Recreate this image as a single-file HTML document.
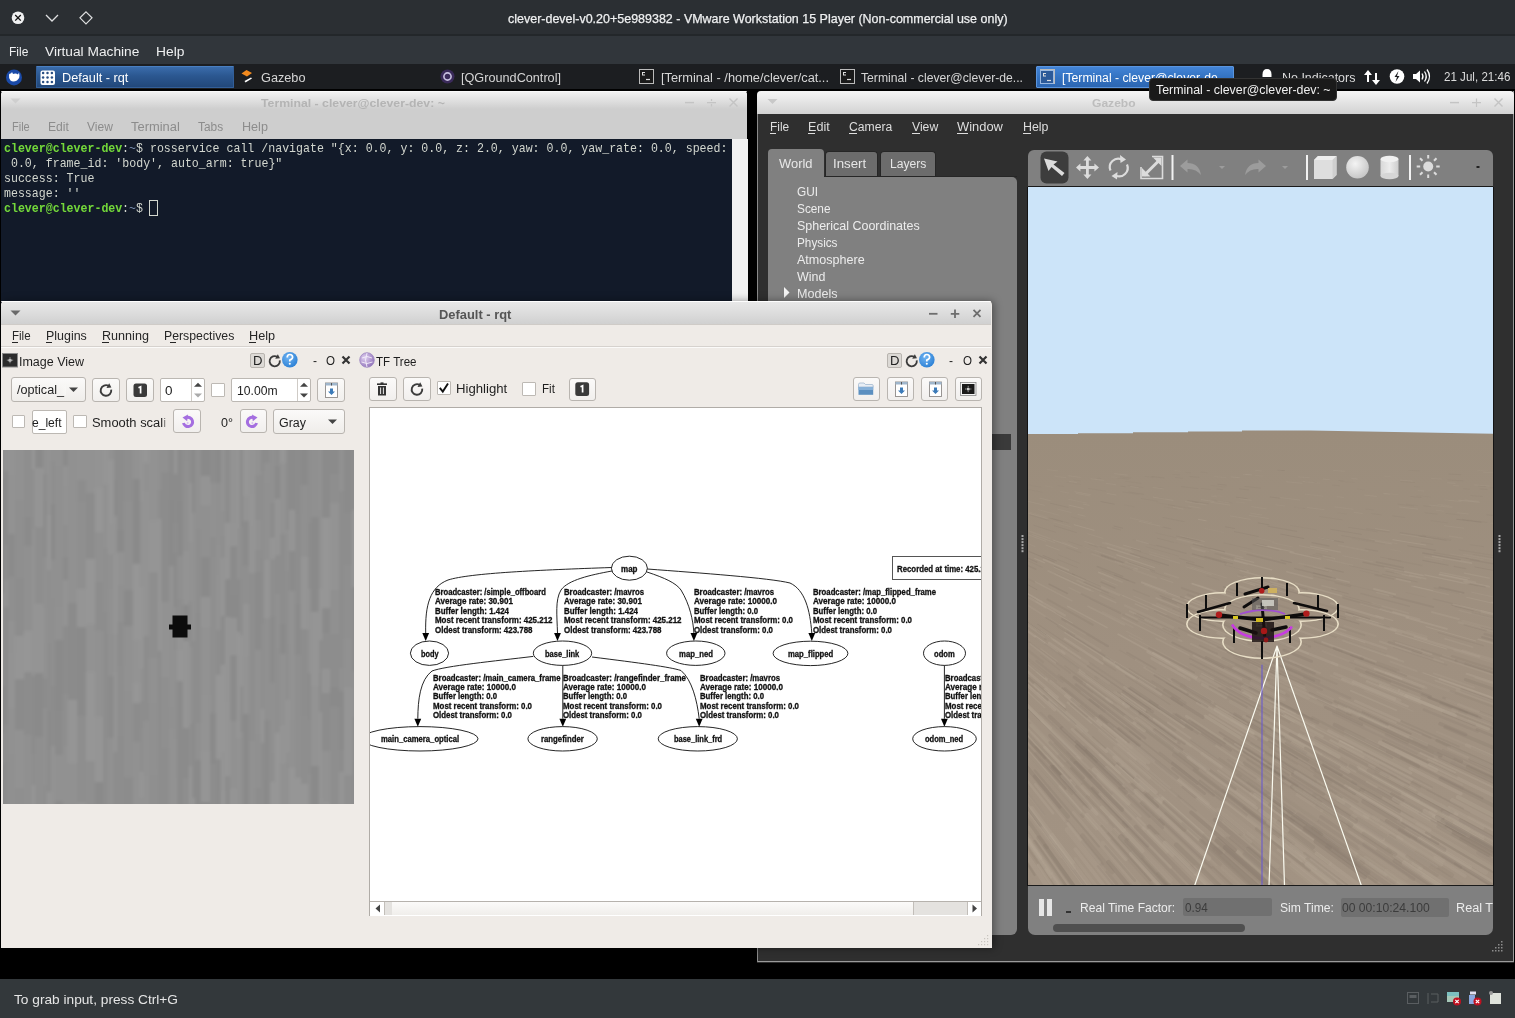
<!DOCTYPE html>
<html><head><meta charset="utf-8"><style>
*{margin:0;padding:0;box-sizing:border-box}
html,body{width:1515px;height:1018px;overflow:hidden;background:#000;font-family:"Liberation Sans",sans-serif;position:relative}
.a{position:absolute}
.t{position:absolute;white-space:pre;line-height:1}
svg{position:absolute;overflow:visible}
</style></head><body>
<div class="a" style="left:0px;top:0px;width:1515px;height:34px;background:#2b2f33"></div>
<div class="a" style="left:0px;top:34px;width:1515px;height:2px;background:#23272a"></div>
<div class="a" style="left:0px;top:36px;width:1515px;height:28px;background:#31363b"></div>
<svg style="left:0;top:0" width="110" height="36">
<circle cx="18" cy="17.8" r="6.3" fill="#eff0f1"/>
<path d="M15.2 15 L20.8 20.6 M20.8 15 L15.2 20.6" stroke="#111" stroke-width="1.3"/>
<path d="M46 15 L52 21 L58 15" stroke="#dfe0e1" stroke-width="1.3" fill="none"/>
<path d="M86 11.8 L92 17.8 L86 23.8 L80 17.8 Z" stroke="#dfe0e1" stroke-width="1.2" fill="none"/>
</svg><div class="t" style="left:507.50px;top:13.00px;font-size:12.7px;color:#eff0f1;font-family:'Liberation Sans',sans-serif;transform:scaleX(0.9837);transform-origin:0 0;-webkit-text-stroke:0.25px #eff0f1;">clever-devel-v0.20+5e989382 - VMware Workstation 15 Player (Non-commercial use only)</div>
<div class="t" style="left:8.60px;top:46.00px;font-size:12.5px;color:#eff0f1;font-family:'Liberation Sans',sans-serif;transform:scaleX(0.9630);transform-origin:0 0;">File</div>
<div class="t" style="left:44.90px;top:46.00px;font-size:12.5px;color:#eff0f1;font-family:'Liberation Sans',sans-serif;transform:scaleX(1.0985);transform-origin:0 0;">Virtual Machine</div>
<div class="t" style="left:156.40px;top:46.00px;font-size:12.5px;color:#eff0f1;font-family:'Liberation Sans',sans-serif;transform:scaleX(1.1046);transform-origin:0 0;">Help</div>
<div class="a" style="left:0px;top:64px;width:1515px;height:25px;background:#1c1e21"></div>
<svg style="left:0;top:64px" width="36" height="25">
<circle cx="14" cy="13.4" r="8" fill="#1a4aa8"/>
<path d="M9 11 Q9 9 11 9.5 L12 8 L13 10 Q16 9 18 10.5 L19 8.5 L19.5 11.5 Q20 14 17 16.5 Q13 18.5 10.5 16.5 Q8.5 14 9 11Z" fill="#fff"/>
</svg><div class="a" style="left:36px;top:66px;width:198px;height:22px;background:linear-gradient(#3a6cab,#2b5790 45%,#22487a);border:1px solid #335f98;border-top-color:#4a7fc0;border-radius:1px"></div>
<div class="a" style="left:1036px;top:66px;width:198px;height:22px;background:linear-gradient(#4384d6,#3473c2 50%,#2c66b2);border:1px solid #5a95de;border-radius:1px"></div>
<svg style="left:40px;top:70px" width="16" height="16"><rect x="0.5" y="0.5" width="14.5" height="14.5" rx="2" fill="#fff"/><circle cx="3.10" cy="3.10" r="1.25" fill="#2a4f84"/><circle cx="3.10" cy="7.50" r="1.25" fill="#2a4f84"/><circle cx="3.10" cy="11.90" r="1.25" fill="#2a4f84"/><circle cx="7.50" cy="3.10" r="1.25" fill="#2a4f84"/><circle cx="7.50" cy="7.50" r="1.25" fill="#2a4f84"/><circle cx="7.50" cy="11.90" r="1.25" fill="#2a4f84"/><circle cx="11.90" cy="3.10" r="1.25" fill="#2a4f84"/><circle cx="11.90" cy="7.50" r="1.25" fill="#2a4f84"/><circle cx="11.90" cy="11.90" r="1.25" fill="#2a4f84"/></svg><div class="t" style="left:62.30px;top:72.00px;font-size:12.5px;color:#ffffff;font-family:'Liberation Sans',sans-serif;transform:scaleX(1.0167);transform-origin:0 0;">Default - rqt</div>
<svg style="left:240px;top:68px" width="20" height="20">
<path d="M1.5 5.5 L6.5 2 L12 5 L7 8.5 Z" fill="#f28a1e"/>
<path d="M4.5 13 L11 9.5 L12 10.5 L5.5 14.5 Z" fill="#fff"/>
</svg><div class="t" style="left:261.00px;top:72.00px;font-size:12.5px;color:#d6d6d6;font-family:'Liberation Sans',sans-serif;transform:scaleX(1.0163);transform-origin:0 0;">Gazebo</div>
<svg style="left:438px;top:68px" width="20" height="20">
<circle cx="9.5" cy="8.5" r="7" fill="#3a2a5a"/>
<circle cx="9.5" cy="8.5" r="3.6" fill="none" stroke="#c8c0e0" stroke-width="1.6"/>
</svg><div class="t" style="left:461.00px;top:72.00px;font-size:12.5px;color:#d6d6d6;font-family:'Liberation Sans',sans-serif;transform:scaleX(1.0135);transform-origin:0 0;">[QGroundControl]</div>
<svg style="left:639px;top:69px" width="16" height="16">
<rect x="0.5" y="0.5" width="14" height="14" fill="#1a1a1a" stroke="#bbb" stroke-width="1"/>
<path d="M3 3.5 h3 M3 6 h3 M3.5 3.5 v2.5" stroke="#ddd" stroke-width="1"/><path d="M7 10.5 h4" stroke="#ddd" stroke-width="1.2"/>
</svg><svg style="left:840px;top:69px" width="16" height="16">
<rect x="0.5" y="0.5" width="14" height="14" fill="#1a1a1a" stroke="#bbb" stroke-width="1"/>
<path d="M3 3.5 h3 M3 6 h3 M3.5 3.5 v2.5" stroke="#ddd" stroke-width="1"/><path d="M7 10.5 h4" stroke="#ddd" stroke-width="1.2"/>
</svg><svg style="left:1040px;top:69px" width="16" height="16">
<rect x="0.5" y="0.5" width="14" height="14" fill="#1a1a1a" stroke="#bbb" stroke-width="1"/>
<path d="M3 3.5 h3 M3 6 h3 M3.5 3.5 v2.5" stroke="#ddd" stroke-width="1"/><path d="M7 10.5 h4" stroke="#ddd" stroke-width="1.2"/>
</svg><div class="a" style="left:1040px;top:70px;width:14px;height:14px;background:#2c5a99;border:1px solid #9bb9e0"></div>
<svg style="left:1040px;top:70px" width="16" height="16"><path d="M3 3.5 h3 M3 6 h3 M3.5 3.5 v2.5" stroke="#ddd" stroke-width="1"/><path d="M7 10.5 h4" stroke="#ddd" stroke-width="1.2"/></svg><div class="t" style="left:661.00px;top:72.00px;font-size:12.5px;color:#d6d6d6;font-family:'Liberation Sans',sans-serif;transform:scaleX(1.0247);transform-origin:0 0;">[Terminal - /home/clever/cat...</div>
<div class="t" style="left:861.00px;top:72.00px;font-size:12.5px;color:#d6d6d6;font-family:'Liberation Sans',sans-serif;transform:scaleX(0.9746);transform-origin:0 0;">Terminal - clever@clever-de...</div>
<div class="t" style="left:1061.70px;top:72.00px;font-size:12.5px;color:#ffffff;font-family:'Liberation Sans',sans-serif;transform:scaleX(0.9782);transform-origin:0 0;">[Terminal - clever@clever-de...</div>
<svg style="left:1255px;top:64px" width="260" height="25">
<path d="M7.5 10.5 Q7.5 5 12 5 Q16.5 5 16.5 10.5 L16.5 13 L7.5 13Z" fill="#fff"/>
<path d="M113 6 L109 11 H112 V18 H114 V11 H117Z" fill="#fff"/>
<path d="M121 21 L125 16 H122 V9 H120 V16 H117Z" fill="#fff"/>
<circle cx="142" cy="12.5" r="7.3" fill="#fff"/>
<path d="M143.5 7 L139.5 13 H142 L140.5 18 L144.5 12 H142Z" fill="#1c1e21"/>
<path d="M158 10 h3 l4 -3.5 v12 l-4 -3.5 h-3z" fill="#fff"/>
<path d="M167 9.5 q2 3 0 6 M169.5 7.5 q3.5 5 0 10 M172 5.5 q5 7 0 14" stroke="#fff" stroke-width="1.3" fill="none"/>
</svg><div class="t" style="left:1282.40px;top:72.00px;font-size:12.5px;color:#dcdcdc;font-family:'Liberation Sans',sans-serif;transform:scaleX(0.9966);transform-origin:0 0;">No Indicators</div>
<div class="t" style="left:1444.20px;top:71.00px;font-size:12.5px;color:#dcdcdc;font-family:'Liberation Sans',sans-serif;transform:scaleX(0.9275);transform-origin:0 0;">21 Jul, 21:46</div>
<div class="a" style="left:1px;top:91px;width:746px;height:215px;background:#cecece;border-radius:4px 4px 0 0;overflow:hidden"></div>
<div class="a" style="left:1px;top:91px;width:746px;height:18px;background:linear-gradient(#f4f4f4,#dddddd 60%,#cecece);border-radius:4px 4px 0 0"></div>
<div class="a" style="left:1px;top:91px;width:746px;height:1px;background:#fafafa;border-radius:4px 4px 0 0"></div>
<div class="t" style="left:261.10px;top:98.00px;font-size:11.5px;color:#b4b4b4;font-family:'Liberation Sans',sans-serif;font-weight:bold;transform:scaleX(1.0662);transform-origin:0 0;">Terminal - clever@clever-dev: ~</div>
<svg style="left:9px;top:97px" width="14" height="10"><path d="M1.5 1.5 L6.5 6.5 L11.5 1.5Z" fill="#cfcfcf"/></svg><svg style="left:680px;top:94px" width="66" height="18">
<path d="M5 8.6 h9" stroke="#c4c4c4" stroke-width="1.4"/>
<path d="M27 8.6 h9 M31.5 5 v2 M31.5 10 v2.5" stroke="#c4c4c4" stroke-width="1.2"/>
<path d="M49.5 4.5 L57.5 12.5 M57.5 4.5 L49.5 12.5" stroke="#c4c4c4" stroke-width="1.4"/>
</svg><div class="t" style="left:11.50px;top:121.00px;font-size:12.5px;color:#8c8c8c;font-family:'Liberation Sans',sans-serif;transform:scaleX(0.8787);transform-origin:0 0;">File</div>
<div class="t" style="left:48.40px;top:121.00px;font-size:12.5px;color:#8c8c8c;font-family:'Liberation Sans',sans-serif;transform:scaleX(0.9703);transform-origin:0 0;">Edit</div>
<div class="t" style="left:87.20px;top:121.00px;font-size:12.5px;color:#8c8c8c;font-family:'Liberation Sans',sans-serif;transform:scaleX(0.9640);transform-origin:0 0;">View</div>
<div class="t" style="left:130.90px;top:121.00px;font-size:12.5px;color:#8c8c8c;font-family:'Liberation Sans',sans-serif;transform:scaleX(1.0330);transform-origin:0 0;">Terminal</div>
<div class="t" style="left:198.20px;top:121.00px;font-size:12.5px;color:#8c8c8c;font-family:'Liberation Sans',sans-serif;transform:scaleX(0.9505);transform-origin:0 0;">Tabs</div>
<div class="t" style="left:242.10px;top:121.00px;font-size:12.5px;color:#8c8c8c;font-family:'Liberation Sans',sans-serif;transform:scaleX(1.0074);transform-origin:0 0;">Help</div>
<div class="a" style="left:1px;top:139px;width:731px;height:167px;background:#121a29"></div>
<div class="a" style="left:732px;top:139px;width:15.5px;height:167px;background:#f2f2f2"></div>
<div class="t" style="left:3.50px;top:143.00px;font-size:12.6px;color:#73d83a;font-family:'Liberation Mono',monospace;font-weight:bold;transform:scaleX(0.9206);transform-origin:0 0;">clever@clever-dev</div>
<div class="t" style="left:121.82px;top:143.00px;font-size:12.6px;color:#d3d7cf;font-family:'Liberation Mono',monospace;transform:scaleX(0.9206);transform-origin:0 0;">:</div>
<div class="t" style="left:128.78px;top:143.00px;font-size:12.6px;color:#7e94b4;font-family:'Liberation Mono',monospace;transform:scaleX(0.9206);transform-origin:0 0;">~</div>
<div class="t" style="left:135.74px;top:143.00px;font-size:12.6px;color:#d3d7cf;font-family:'Liberation Mono',monospace;transform:scaleX(0.9206);transform-origin:0 0;">$</div>
<div class="t" style="left:142.70px;top:143.00px;font-size:12.6px;color:#d3d7cf;font-family:'Liberation Mono',monospace;transform:scaleX(0.9206);transform-origin:0 0;"> rosservice call /navigate "{x: 0.0, y: 0.0, z: 2.0, yaw: 0.0, yaw_rate: 0.0, speed:</div>
<div class="t" style="left:3.50px;top:158.00px;font-size:12.6px;color:#d3d7cf;font-family:'Liberation Mono',monospace;transform:scaleX(0.9206);transform-origin:0 0;"> 0.0, frame_id: 'body', auto_arm: true}"</div>
<div class="t" style="left:3.50px;top:173.00px;font-size:12.6px;color:#d3d7cf;font-family:'Liberation Mono',monospace;transform:scaleX(0.9206);transform-origin:0 0;">success: True</div>
<div class="t" style="left:3.50px;top:188.00px;font-size:12.6px;color:#d3d7cf;font-family:'Liberation Mono',monospace;transform:scaleX(0.9206);transform-origin:0 0;">message: ''</div>
<div class="t" style="left:3.50px;top:203.00px;font-size:12.6px;color:#73d83a;font-family:'Liberation Mono',monospace;font-weight:bold;transform:scaleX(0.9206);transform-origin:0 0;">clever@clever-dev</div>
<div class="t" style="left:121.82px;top:203.00px;font-size:12.6px;color:#d3d7cf;font-family:'Liberation Mono',monospace;transform:scaleX(0.9206);transform-origin:0 0;">:</div>
<div class="t" style="left:128.78px;top:203.00px;font-size:12.6px;color:#7e94b4;font-family:'Liberation Mono',monospace;transform:scaleX(0.9206);transform-origin:0 0;">~</div>
<div class="t" style="left:135.74px;top:203.00px;font-size:12.6px;color:#d3d7cf;font-family:'Liberation Mono',monospace;transform:scaleX(0.9206);transform-origin:0 0;">$</div>
<div class="a" style="left:149px;top:199.5px;width:9px;height:16px;border:1px solid #d3d7cf"></div>
<div class="a" style="left:757px;top:91px;width:757px;height:872px;background:#2f2f2f;border-radius:4px 4px 0 0"></div>
<div class="a" style="left:1513px;top:91px;width:1px;height:871px;background:#9a9a9a"></div>
<div class="a" style="left:757px;top:961px;width:757px;height:1px;background:#9a9a9a"></div>
<div class="a" style="left:757px;top:114px;width:1px;height:848px;background:#8a8a8a"></div>
<div class="a" style="left:757px;top:91px;width:757px;height:23px;background:linear-gradient(#f6f6f6,#e2e2e2 55%,#d2d2d2);border-radius:4px 4px 0 0"></div>
<svg style="left:766px;top:97px" width="14" height="10"><path d="M1.5 2 L6.5 7 L11.5 2Z" fill="#c8c8c8"/></svg><div class="t" style="left:1091.50px;top:98.00px;font-size:11.5px;color:#bdbdbd;font-family:'Liberation Sans',sans-serif;font-weight:bold;transform:scaleX(1.0498);transform-origin:0 0;">Gazebo</div>
<svg style="left:1445px;top:94px" width="66" height="18">
<path d="M5 8.6 h9" stroke="#c4c4c4" stroke-width="1.4"/>
<path d="M27 8.6 h9 M31.5 4.5 v8.5" stroke="#c4c4c4" stroke-width="1.2"/>
<path d="M49.5 4.5 L57.5 12.5 M57.5 4.5 L49.5 12.5" stroke="#c4c4c4" stroke-width="1.4"/>
</svg><div class="t" style="left:770.20px;top:121.00px;font-size:12.5px;color:#dedede;font-family:'Liberation Sans',sans-serif;transform:scaleX(0.9531);transform-origin:0 0;">File</div>
<div class="a" style="left:770.2px;top:133px;width:6px;height:1px;background:#dedede"></div>
<div class="t" style="left:808.20px;top:121.00px;font-size:12.5px;color:#dedede;font-family:'Liberation Sans',sans-serif;transform:scaleX(1.0075);transform-origin:0 0;">Edit</div>
<div class="a" style="left:808.2px;top:133px;width:7px;height:1px;background:#dedede"></div>
<div class="t" style="left:849.10px;top:121.00px;font-size:12.5px;color:#dedede;font-family:'Liberation Sans',sans-serif;transform:scaleX(0.9738);transform-origin:0 0;">Camera</div>
<div class="a" style="left:849.1px;top:133px;width:8px;height:1px;background:#dedede"></div>
<div class="t" style="left:911.60px;top:121.00px;font-size:12.5px;color:#dedede;font-family:'Liberation Sans',sans-serif;transform:scaleX(0.9752);transform-origin:0 0;">View</div>
<div class="a" style="left:911.6px;top:133px;width:8px;height:1px;background:#dedede"></div>
<div class="t" style="left:957.40px;top:121.00px;font-size:12.5px;color:#dedede;font-family:'Liberation Sans',sans-serif;transform:scaleX(1.0324);transform-origin:0 0;">Window</div>
<div class="a" style="left:957.4px;top:133px;width:11px;height:1px;background:#dedede"></div>
<div class="t" style="left:1022.50px;top:121.00px;font-size:12.5px;color:#dedede;font-family:'Liberation Sans',sans-serif;transform:scaleX(0.9918);transform-origin:0 0;">Help</div>
<div class="a" style="left:1022.5px;top:133px;width:8px;height:1px;background:#dedede"></div>
<div class="a" style="left:768px;top:149px;width:56px;height:40px;background:#808080;border-radius:4px 4px 0 0"></div>
<div class="a" style="left:825px;top:151px;width:53px;height:26px;background:#6c6c6c;border-radius:4px 4px 0 0;border:1px solid #262626;border-bottom:none"></div>
<div class="a" style="left:880px;top:151px;width:56px;height:26px;background:#6c6c6c;border-radius:4px 4px 0 0;border:1px solid #262626;border-bottom:none"></div>
<div class="t" style="left:779.00px;top:158.00px;font-size:12.5px;color:#e8e8e8;font-family:'Liberation Sans',sans-serif;transform:scaleX(1.0334);transform-origin:0 0;">World</div>
<div class="t" style="left:833.20px;top:158.00px;font-size:12.5px;color:#e6e6e6;font-family:'Liberation Sans',sans-serif;transform:scaleX(1.0619);transform-origin:0 0;">Insert</div>
<div class="t" style="left:889.60px;top:158.00px;font-size:12.5px;color:#e6e6e6;font-family:'Liberation Sans',sans-serif;transform:scaleX(0.9701);transform-origin:0 0;">Layers</div>
<div class="a" style="left:768px;top:177px;width:249px;height:758px;background:#808080;border-radius:0 5px 6px 6px"></div>
<div class="a" style="left:824px;top:176px;width:193px;height:1px;background:#262626"></div>
<div class="t" style="left:797.30px;top:186.00px;font-size:12.5px;color:#ececec;font-family:'Liberation Sans',sans-serif;transform:scaleX(0.9450);transform-origin:0 0;">GUI</div>
<div class="t" style="left:797.30px;top:203.00px;font-size:12.5px;color:#ececec;font-family:'Liberation Sans',sans-serif;transform:scaleX(0.9451);transform-origin:0 0;">Scene</div>
<div class="t" style="left:797.30px;top:220.00px;font-size:12.5px;color:#ececec;font-family:'Liberation Sans',sans-serif;transform:scaleX(0.9976);transform-origin:0 0;">Spherical Coordinates</div>
<div class="t" style="left:797.30px;top:237.00px;font-size:12.5px;color:#ececec;font-family:'Liberation Sans',sans-serif;transform:scaleX(0.9404);transform-origin:0 0;">Physics</div>
<div class="t" style="left:797.30px;top:254.00px;font-size:12.5px;color:#ececec;font-family:'Liberation Sans',sans-serif;transform:scaleX(1.0044);transform-origin:0 0;">Atmosphere</div>
<div class="t" style="left:797.30px;top:271.00px;font-size:12.5px;color:#ececec;font-family:'Liberation Sans',sans-serif;transform:scaleX(0.9972);transform-origin:0 0;">Wind</div>
<div class="t" style="left:797.30px;top:288.00px;font-size:12.5px;color:#ececec;font-family:'Liberation Sans',sans-serif;transform:scaleX(1.0049);transform-origin:0 0;">Models</div>
<svg style="left:782px;top:286px" width="10" height="14"><path d="M2 1 L7.5 6.5 L2 12Z" fill="#f4f4f4"/></svg><div class="a" style="left:992px;top:434px;width:19px;height:16px;background:#3a3a3a"></div>
<svg style="left:1018px;top:530px" width="10" height="30"><rect x="3.5" y="5.0" width="2" height="2" fill="#a8a8a8"/><rect x="3.5" y="8.1" width="2" height="2" fill="#a8a8a8"/><rect x="3.5" y="11.1" width="2" height="2" fill="#a8a8a8"/><rect x="3.5" y="14.1" width="2" height="2" fill="#a8a8a8"/><rect x="3.5" y="17.2" width="2" height="2" fill="#a8a8a8"/><rect x="3.5" y="20.2" width="2" height="2" fill="#a8a8a8"/></svg><svg style="left:1495px;top:530px" width="10" height="30"><rect x="3.5" y="5.0" width="2" height="2" fill="#a8a8a8"/><rect x="3.5" y="8.1" width="2" height="2" fill="#a8a8a8"/><rect x="3.5" y="11.1" width="2" height="2" fill="#a8a8a8"/><rect x="3.5" y="14.1" width="2" height="2" fill="#a8a8a8"/><rect x="3.5" y="17.2" width="2" height="2" fill="#a8a8a8"/><rect x="3.5" y="20.2" width="2" height="2" fill="#a8a8a8"/></svg><div class="a" style="left:1028px;top:149.5px;width:465px;height:37px;background:#808080;border-radius:6px 6px 0 0"></div>
<div class="a" style="left:1028px;top:186px;width:465px;height:1px;background:#1a1a1a"></div>
<div class="a" style="left:1028px;top:187px;width:465px;height:247px;background:#cce4f9"></div>
<svg style="left:1028px;top:428px;overflow:hidden" width="465" height="458" viewBox="1028 428 465 458"><defs><linearGradient id="gg" x1="0" y1="0" x2="0" y2="1"><stop offset="0" stop-color="#9b8d7c"/><stop offset="0.5" stop-color="#9f9080"/><stop offset="1" stop-color="#a29383"/></linearGradient></defs><path d="M1028 434 L1078 434 L1078 433.3 L1133 433.3 L1133 432.2 L1188 432.2 L1188 431.5 L1242 431.5 L1242 430.5 L1310 430.5 L1493 433.8 L1493 886 L1028 886Z" fill="url(#gg)"/><path d="M1257.4 646.8 L1320.0 673.2" stroke="#b6a897" stroke-width="1.9" opacity="0.26" stroke-linecap="round"/><path d="M1253.0 544.7 L1278.5 550.4" stroke="#85776a" stroke-width="1.3" opacity="0.16" stroke-linecap="round"/><path d="M1399.6 507.0 L1417.7 509.1" stroke="#b6a897" stroke-width="0.6" opacity="0.35" stroke-linecap="round"/><path d="M1300.0 736.1 L1331.0 753.2" stroke="#b6a897" stroke-width="1.5" opacity="0.13" stroke-linecap="round"/><path d="M1131.5 548.5 L1140.8 551.3" stroke="#85776a" stroke-width="1.0" opacity="0.27" stroke-linecap="round"/><path d="M1304.4 677.9 L1350.2 698.2" stroke="#85776a" stroke-width="2.6" opacity="0.16" stroke-linecap="round"/><path d="M1443.7 855.9 L1552.2 922.1" stroke="#85776a" stroke-width="4.8" opacity="0.15" stroke-linecap="round"/><path d="M1035.4 581.8 L1072.0 600.9" stroke="#b6a897" stroke-width="1.3" opacity="0.21" stroke-linecap="round"/><path d="M1412.8 863.3 L1440.7 881.4" stroke="#b6a897" stroke-width="2.8" opacity="0.23" stroke-linecap="round"/><path d="M1195.8 867.2 L1225.7 896.3" stroke="#b6a897" stroke-width="4.5" opacity="0.18" stroke-linecap="round"/><path d="M1168.4 504.7 L1190.8 508.5" stroke="#85776a" stroke-width="0.8" opacity="0.15" stroke-linecap="round"/><path d="M1038.5 509.7 L1059.0 515.2" stroke="#b6a897" stroke-width="0.6" opacity="0.23" stroke-linecap="round"/><path d="M1365.1 548.9 L1377.5 551.2" stroke="#85776a" stroke-width="1.2" opacity="0.18" stroke-linecap="round"/><path d="M1130.8 553.5 L1168.2 565.3" stroke="#85776a" stroke-width="1.4" opacity="0.28" stroke-linecap="round"/><path d="M1192.2 553.8 L1226.3 563.2" stroke="#85776a" stroke-width="1.3" opacity="0.30" stroke-linecap="round"/><path d="M1128.2 554.5 L1159.8 564.6" stroke="#85776a" stroke-width="0.9" opacity="0.11" stroke-linecap="round"/><path d="M1294.7 507.2 L1304.7 508.5" stroke="#85776a" stroke-width="0.7" opacity="0.19" stroke-linecap="round"/><path d="M1216.7 841.8 L1287.7 903.9" stroke="#85776a" stroke-width="5.3" opacity="0.13" stroke-linecap="round"/><path d="M1388.5 836.4 L1436.6 866.7" stroke="#b6a897" stroke-width="2.6" opacity="0.35" stroke-linecap="round"/><path d="M1459.0 549.8 L1493.1 555.4" stroke="#85776a" stroke-width="1.2" opacity="0.12" stroke-linecap="round"/><path d="M1478.5 486.0 L1485.6 486.5" stroke="#85776a" stroke-width="0.6" opacity="0.26" stroke-linecap="round"/><path d="M1147.0 710.8 L1174.7 730.2" stroke="#85776a" stroke-width="3.1" opacity="0.15" stroke-linecap="round"/><path d="M1400.9 693.6 L1457.4 716.3" stroke="#b6a897" stroke-width="1.9" opacity="0.17" stroke-linecap="round"/><path d="M1145.2 476.5 L1153.2 477.4" stroke="#85776a" stroke-width="0.6" opacity="0.17" stroke-linecap="round"/><path d="M1065.8 695.8 L1100.5 724.8" stroke="#b6a897" stroke-width="3.4" opacity="0.28" stroke-linecap="round"/><path d="M1285.1 751.2 L1315.9 769.5" stroke="#85776a" stroke-width="1.6" opacity="0.28" stroke-linecap="round"/><path d="M1469.9 758.9 L1494.3 769.9" stroke="#85776a" stroke-width="3.3" opacity="0.25" stroke-linecap="round"/><path d="M1491.9 602.2 L1507.5 605.7" stroke="#b6a897" stroke-width="1.6" opacity="0.34" stroke-linecap="round"/><path d="M1317.5 756.6 L1398.0 802.5" stroke="#85776a" stroke-width="4.3" opacity="0.24" stroke-linecap="round"/><path d="M1406.8 829.4 L1469.5 867.3" stroke="#b6a897" stroke-width="4.7" opacity="0.26" stroke-linecap="round"/><path d="M1176.5 714.6 L1230.6 750.3" stroke="#85776a" stroke-width="2.9" opacity="0.23" stroke-linecap="round"/><path d="M1394.5 855.8 L1490.1 918.5" stroke="#b6a897" stroke-width="3.6" opacity="0.26" stroke-linecap="round"/><path d="M1412.3 651.7 L1432.5 658.4" stroke="#85776a" stroke-width="2.4" opacity="0.22" stroke-linecap="round"/><path d="M1105.8 656.5 L1155.2 687.5" stroke="#b6a897" stroke-width="2.1" opacity="0.34" stroke-linecap="round"/><path d="M1015.9 572.5 L1034.9 582.4" stroke="#85776a" stroke-width="1.5" opacity="0.13" stroke-linecap="round"/><path d="M1305.8 828.3 L1367.8 872.5" stroke="#85776a" stroke-width="5.1" opacity="0.23" stroke-linecap="round"/><path d="M1211.0 549.4 L1242.6 557.4" stroke="#b6a897" stroke-width="1.5" opacity="0.21" stroke-linecap="round"/><path d="M1159.2 706.4 L1184.6 723.4" stroke="#b6a897" stroke-width="2.5" opacity="0.32" stroke-linecap="round"/><path d="M1454.3 758.7 L1497.7 778.7" stroke="#85776a" stroke-width="2.0" opacity="0.16" stroke-linecap="round"/><path d="M1204.8 556.2 L1232.6 563.7" stroke="#85776a" stroke-width="1.1" opacity="0.27" stroke-linecap="round"/><path d="M1221.7 868.2 L1252.7 896.7" stroke="#b6a897" stroke-width="2.2" opacity="0.13" stroke-linecap="round"/><path d="M1272.5 754.4 L1315.3 780.8" stroke="#85776a" stroke-width="3.8" opacity="0.13" stroke-linecap="round"/><path d="M1007.4 641.2 L1056.3 680.8" stroke="#85776a" stroke-width="1.5" opacity="0.11" stroke-linecap="round"/><path d="M1205.2 716.1 L1263.5 752.4" stroke="#b6a897" stroke-width="3.1" opacity="0.35" stroke-linecap="round"/><path d="M1092.6 737.0 L1138.8 778.0" stroke="#85776a" stroke-width="2.0" opacity="0.19" stroke-linecap="round"/><path d="M1088.7 753.6 L1123.3 786.3" stroke="#b6a897" stroke-width="2.6" opacity="0.24" stroke-linecap="round"/><path d="M1360.2 717.4 L1405.8 738.7" stroke="#b6a897" stroke-width="3.3" opacity="0.14" stroke-linecap="round"/><path d="M1347.9 848.6 L1385.6 874.8" stroke="#b6a897" stroke-width="3.6" opacity="0.34" stroke-linecap="round"/><path d="M1266.6 618.7 L1319.5 637.8" stroke="#b6a897" stroke-width="2.2" opacity="0.23" stroke-linecap="round"/><path d="M1088.7 718.5 L1148.0 768.6" stroke="#b6a897" stroke-width="3.6" opacity="0.29" stroke-linecap="round"/><path d="M1432.5 556.1 L1471.5 563.1" stroke="#b6a897" stroke-width="1.6" opacity="0.31" stroke-linecap="round"/><path d="M1433.2 598.9 L1480.3 610.3" stroke="#85776a" stroke-width="1.3" opacity="0.19" stroke-linecap="round"/><path d="M1364.8 691.1 L1412.7 711.2" stroke="#b6a897" stroke-width="1.3" opacity="0.14" stroke-linecap="round"/><path d="M1082.9 784.7 L1123.1 827.1" stroke="#85776a" stroke-width="4.2" opacity="0.13" stroke-linecap="round"/><path d="M1334.6 673.5 L1400.0 700.4" stroke="#b6a897" stroke-width="2.7" opacity="0.24" stroke-linecap="round"/><path d="M1044.9 845.8 L1077.6 891.5" stroke="#85776a" stroke-width="4.0" opacity="0.25" stroke-linecap="round"/><path d="M1234.1 716.7 L1307.8 759.9" stroke="#85776a" stroke-width="2.9" opacity="0.18" stroke-linecap="round"/><path d="M1430.7 813.0 L1473.8 837.0" stroke="#b6a897" stroke-width="4.6" opacity="0.25" stroke-linecap="round"/><path d="M1093.8 693.5 L1139.2 727.9" stroke="#b6a897" stroke-width="2.5" opacity="0.13" stroke-linecap="round"/><path d="M1238.6 852.2 L1296.7 902.1" stroke="#b6a897" stroke-width="5.1" opacity="0.24" stroke-linecap="round"/><path d="M1028.8 735.5 L1074.5 785.0" stroke="#b6a897" stroke-width="2.7" opacity="0.34" stroke-linecap="round"/><path d="M1239.5 580.8 L1254.8 585.4" stroke="#b6a897" stroke-width="1.2" opacity="0.34" stroke-linecap="round"/><path d="M1159.7 663.1 L1184.9 677.2" stroke="#b6a897" stroke-width="2.3" opacity="0.15" stroke-linecap="round"/><path d="M1017.3 779.6 L1044.6 815.0" stroke="#b6a897" stroke-width="2.4" opacity="0.20" stroke-linecap="round"/><path d="M1308.6 616.3 L1326.4 622.2" stroke="#85776a" stroke-width="2.0" opacity="0.20" stroke-linecap="round"/><path d="M1101.4 570.0 L1128.4 580.5" stroke="#85776a" stroke-width="1.2" opacity="0.18" stroke-linecap="round"/><path d="M1083.7 682.6 L1109.6 702.0" stroke="#b6a897" stroke-width="2.6" opacity="0.25" stroke-linecap="round"/><path d="M1267.9 795.5 L1359.3 859.5" stroke="#b6a897" stroke-width="2.6" opacity="0.31" stroke-linecap="round"/><path d="M1149.2 827.0 L1194.1 871.3" stroke="#85776a" stroke-width="5.2" opacity="0.30" stroke-linecap="round"/><path d="M1067.0 821.6 L1101.6 863.9" stroke="#85776a" stroke-width="4.4" opacity="0.12" stroke-linecap="round"/><path d="M1182.5 786.9 L1262.2 852.1" stroke="#85776a" stroke-width="2.2" opacity="0.24" stroke-linecap="round"/><path d="M1111.1 476.8 L1121.8 478.1" stroke="#b6a897" stroke-width="0.6" opacity="0.15" stroke-linecap="round"/><path d="M1361.0 673.4 L1406.8 691.4" stroke="#85776a" stroke-width="2.6" opacity="0.11" stroke-linecap="round"/><path d="M1029.8 512.3 L1046.2 516.9" stroke="#b6a897" stroke-width="0.7" opacity="0.16" stroke-linecap="round"/><path d="M1102.6 542.8 L1133.1 552.2" stroke="#b6a897" stroke-width="1.5" opacity="0.14" stroke-linecap="round"/><path d="M1470.8 495.5 L1482.6 496.5" stroke="#85776a" stroke-width="0.7" opacity="0.19" stroke-linecap="round"/><path d="M1201.7 673.3 L1251.1 699.6" stroke="#b6a897" stroke-width="1.2" opacity="0.32" stroke-linecap="round"/><path d="M1223.9 542.9 L1251.9 549.4" stroke="#85776a" stroke-width="0.9" opacity="0.13" stroke-linecap="round"/><path d="M1000.2 660.5 L1054.6 710.0" stroke="#b6a897" stroke-width="2.9" opacity="0.33" stroke-linecap="round"/><path d="M1186.3 716.2 L1242.0 752.4" stroke="#b6a897" stroke-width="2.7" opacity="0.31" stroke-linecap="round"/><path d="M1439.2 574.7 L1475.6 582.2" stroke="#b6a897" stroke-width="1.6" opacity="0.22" stroke-linecap="round"/><path d="M1399.1 820.7 L1485.6 872.4" stroke="#b6a897" stroke-width="4.6" opacity="0.22" stroke-linecap="round"/><path d="M1035.9 753.4 L1071.8 793.6" stroke="#85776a" stroke-width="2.9" opacity="0.17" stroke-linecap="round"/><path d="M1301.8 728.8 L1337.2 747.8" stroke="#b6a897" stroke-width="3.8" opacity="0.20" stroke-linecap="round"/><path d="M1265.6 731.0 L1321.2 763.2" stroke="#b6a897" stroke-width="2.5" opacity="0.27" stroke-linecap="round"/><path d="M1339.7 740.6 L1431.6 788.5" stroke="#b6a897" stroke-width="1.6" opacity="0.30" stroke-linecap="round"/><path d="M1206.7 575.9 L1218.8 579.7" stroke="#85776a" stroke-width="0.9" opacity="0.12" stroke-linecap="round"/><path d="M1440.2 572.4 L1469.3 578.3" stroke="#b6a897" stroke-width="1.3" opacity="0.26" stroke-linecap="round"/><path d="M1277.8 849.7 L1374.7 926.2" stroke="#b6a897" stroke-width="2.4" opacity="0.30" stroke-linecap="round"/><path d="M1463.3 488.7 L1469.7 489.2" stroke="#85776a" stroke-width="0.6" opacity="0.20" stroke-linecap="round"/><path d="M1016.3 695.4 L1079.9 758.0" stroke="#b6a897" stroke-width="2.4" opacity="0.26" stroke-linecap="round"/><path d="M1137.0 614.1 L1177.3 633.0" stroke="#85776a" stroke-width="1.8" opacity="0.24" stroke-linecap="round"/><path d="M1017.3 588.9 L1036.1 599.8" stroke="#85776a" stroke-width="0.8" opacity="0.25" stroke-linecap="round"/><path d="M1426.1 626.7 L1475.6 640.9" stroke="#b6a897" stroke-width="1.0" opacity="0.35" stroke-linecap="round"/><path d="M1448.6 500.3 L1460.7 501.5" stroke="#b6a897" stroke-width="0.6" opacity="0.18" stroke-linecap="round"/><path d="M1439.6 679.0 L1500.2 700.6" stroke="#b6a897" stroke-width="2.2" opacity="0.32" stroke-linecap="round"/><path d="M1050.7 701.6 L1099.8 745.4" stroke="#85776a" stroke-width="2.5" opacity="0.11" stroke-linecap="round"/><path d="M1061.1 677.2 L1098.3 706.4" stroke="#85776a" stroke-width="2.7" opacity="0.15" stroke-linecap="round"/><path d="M1189.5 695.5 L1253.2 733.6" stroke="#b6a897" stroke-width="2.6" opacity="0.35" stroke-linecap="round"/><path d="M1121.2 766.5 L1147.7 790.3" stroke="#b6a897" stroke-width="4.2" opacity="0.27" stroke-linecap="round"/><path d="M1129.8 611.2 L1170.8 630.5" stroke="#b6a897" stroke-width="1.8" opacity="0.27" stroke-linecap="round"/><path d="M1094.0 769.6 L1128.3 803.2" stroke="#b6a897" stroke-width="4.6" opacity="0.33" stroke-linecap="round"/><path d="M1045.5 485.9 L1052.9 487.3" stroke="#b6a897" stroke-width="0.6" opacity="0.14" stroke-linecap="round"/><path d="M1045.2 689.1 L1064.4 705.9" stroke="#b6a897" stroke-width="2.7" opacity="0.27" stroke-linecap="round"/><path d="M1238.3 622.3 L1261.1 631.2" stroke="#b6a897" stroke-width="1.5" opacity="0.32" stroke-linecap="round"/><path d="M1068.4 499.3 L1086.6 503.1" stroke="#b6a897" stroke-width="0.7" opacity="0.17" stroke-linecap="round"/><path d="M1118.2 634.2 L1169.5 662.2" stroke="#b6a897" stroke-width="1.7" opacity="0.36" stroke-linecap="round"/><path d="M1262.2 599.8 L1304.5 613.5" stroke="#85776a" stroke-width="2.2" opacity="0.17" stroke-linecap="round"/><path d="M1436.4 510.3 L1443.7 511.2" stroke="#b6a897" stroke-width="0.6" opacity="0.24" stroke-linecap="round"/><path d="M1129.9 731.4 L1197.1 784.2" stroke="#85776a" stroke-width="1.7" opacity="0.23" stroke-linecap="round"/><path d="M1157.0 502.8 L1174.6 505.8" stroke="#85776a" stroke-width="0.7" opacity="0.13" stroke-linecap="round"/><path d="M1353.8 615.8 L1383.2 624.7" stroke="#b6a897" stroke-width="1.1" opacity="0.26" stroke-linecap="round"/><path d="M1417.1 824.1 L1525.2 887.5" stroke="#b6a897" stroke-width="3.5" opacity="0.19" stroke-linecap="round"/><path d="M1187.7 594.5 L1235.9 612.3" stroke="#85776a" stroke-width="2.1" opacity="0.17" stroke-linecap="round"/><path d="M1179.4 617.1 L1209.4 630.0" stroke="#85776a" stroke-width="1.5" opacity="0.21" stroke-linecap="round"/><path d="M1237.2 775.1 L1321.7 834.4" stroke="#85776a" stroke-width="3.5" opacity="0.25" stroke-linecap="round"/><path d="M1143.5 828.3 L1166.7 851.6" stroke="#b6a897" stroke-width="3.7" opacity="0.26" stroke-linecap="round"/><path d="M1285.0 839.7 L1380.2 912.1" stroke="#b6a897" stroke-width="2.3" opacity="0.31" stroke-linecap="round"/><path d="M1050.3 503.2 L1068.1 507.4" stroke="#85776a" stroke-width="0.9" opacity="0.23" stroke-linecap="round"/><path d="M1366.8 528.7 L1389.2 532.2" stroke="#85776a" stroke-width="0.7" opacity="0.25" stroke-linecap="round"/><path d="M1366.8 680.9 L1407.4 697.2" stroke="#b6a897" stroke-width="1.9" opacity="0.28" stroke-linecap="round"/><path d="M1250.2 664.5 L1305.6 690.2" stroke="#b6a897" stroke-width="2.6" opacity="0.22" stroke-linecap="round"/><path d="M1294.7 787.5 L1385.4 846.5" stroke="#b6a897" stroke-width="4.4" opacity="0.33" stroke-linecap="round"/><path d="M1292.0 845.4 L1362.7 899.2" stroke="#b6a897" stroke-width="4.7" opacity="0.22" stroke-linecap="round"/><path d="M1067.1 632.1 L1113.2 661.1" stroke="#85776a" stroke-width="2.8" opacity="0.13" stroke-linecap="round"/><path d="M1215.3 553.6 L1232.7 558.1" stroke="#85776a" stroke-width="1.6" opacity="0.16" stroke-linecap="round"/><path d="M1319.9 516.6 L1342.1 519.8" stroke="#85776a" stroke-width="0.6" opacity="0.19" stroke-linecap="round"/><path d="M1445.4 710.9 L1467.5 719.7" stroke="#85776a" stroke-width="1.6" opacity="0.14" stroke-linecap="round"/><path d="M1349.7 565.7 L1378.8 572.1" stroke="#85776a" stroke-width="0.9" opacity="0.16" stroke-linecap="round"/><path d="M1375.5 541.0 L1391.7 543.9" stroke="#b6a897" stroke-width="1.0" opacity="0.24" stroke-linecap="round"/><path d="M1424.7 574.9 L1467.2 583.9" stroke="#b6a897" stroke-width="1.1" opacity="0.35" stroke-linecap="round"/><path d="M1117.2 667.1 L1134.9 678.3" stroke="#b6a897" stroke-width="3.0" opacity="0.21" stroke-linecap="round"/><path d="M1251.2 683.4 L1284.0 699.8" stroke="#b6a897" stroke-width="3.4" opacity="0.18" stroke-linecap="round"/><path d="M1243.4 474.3 L1250.3 474.9" stroke="#b6a897" stroke-width="0.6" opacity="0.27" stroke-linecap="round"/><path d="M1087.7 533.8 L1102.9 538.3" stroke="#b6a897" stroke-width="0.7" opacity="0.24" stroke-linecap="round"/><path d="M1477.0 729.5 L1516.4 745.6" stroke="#85776a" stroke-width="2.8" opacity="0.25" stroke-linecap="round"/><path d="M1409.0 470.3 L1419.5 470.9" stroke="#85776a" stroke-width="0.6" opacity="0.15" stroke-linecap="round"/><path d="M1044.5 747.3 L1088.8 794.6" stroke="#b6a897" stroke-width="2.9" opacity="0.26" stroke-linecap="round"/><path d="M1127.5 793.6 L1204.0 866.6" stroke="#b6a897" stroke-width="3.2" opacity="0.14" stroke-linecap="round"/><path d="M1092.5 788.4 L1147.6 845.7" stroke="#85776a" stroke-width="3.5" opacity="0.27" stroke-linecap="round"/><path d="M1161.8 597.9 L1176.5 603.7" stroke="#85776a" stroke-width="1.2" opacity="0.24" stroke-linecap="round"/><path d="M1340.7 618.2 L1358.9 623.9" stroke="#85776a" stroke-width="1.5" opacity="0.29" stroke-linecap="round"/><path d="M1321.3 810.2 L1346.5 826.8" stroke="#b6a897" stroke-width="3.0" opacity="0.18" stroke-linecap="round"/><path d="M1230.5 701.7 L1249.2 712.1" stroke="#b6a897" stroke-width="3.6" opacity="0.17" stroke-linecap="round"/><path d="M1139.4 714.3 L1179.3 743.2" stroke="#85776a" stroke-width="2.7" opacity="0.17" stroke-linecap="round"/><path d="M1326.9 630.2 L1353.1 639.2" stroke="#b6a897" stroke-width="1.3" opacity="0.20" stroke-linecap="round"/><path d="M1247.8 832.9 L1332.5 901.0" stroke="#b6a897" stroke-width="3.2" opacity="0.14" stroke-linecap="round"/><path d="M1054.3 525.8 L1076.3 532.5" stroke="#85776a" stroke-width="1.0" opacity="0.18" stroke-linecap="round"/><path d="M1289.0 810.7 L1320.0 832.4" stroke="#85776a" stroke-width="2.6" opacity="0.12" stroke-linecap="round"/><path d="M1029.3 623.4 L1080.5 658.3" stroke="#b6a897" stroke-width="1.7" opacity="0.28" stroke-linecap="round"/><path d="M1387.5 777.7 L1440.8 806.5" stroke="#85776a" stroke-width="2.7" opacity="0.10" stroke-linecap="round"/><path d="M1325.5 628.0 L1386.4 648.6" stroke="#b6a897" stroke-width="2.3" opacity="0.27" stroke-linecap="round"/><path d="M1175.4 477.4 L1182.4 478.2" stroke="#85776a" stroke-width="0.6" opacity="0.18" stroke-linecap="round"/><path d="M1366.3 671.5 L1430.7 696.4" stroke="#85776a" stroke-width="2.5" opacity="0.25" stroke-linecap="round"/><path d="M1256.8 828.7 L1309.5 869.9" stroke="#85776a" stroke-width="3.7" opacity="0.24" stroke-linecap="round"/><path d="M1225.4 847.6 L1310.0 921.3" stroke="#85776a" stroke-width="5.3" opacity="0.29" stroke-linecap="round"/><path d="M1103.9 724.3 L1126.1 742.5" stroke="#b6a897" stroke-width="2.0" opacity="0.29" stroke-linecap="round"/><path d="M1452.1 604.9 L1479.8 611.7" stroke="#85776a" stroke-width="1.5" opacity="0.29" stroke-linecap="round"/><path d="M1444.3 525.7 L1463.6 528.2" stroke="#b6a897" stroke-width="0.9" opacity="0.18" stroke-linecap="round"/><path d="M1446.3 823.9 L1546.1 879.9" stroke="#85776a" stroke-width="4.1" opacity="0.26" stroke-linecap="round"/><path d="M1440.2 588.9 L1460.9 593.5" stroke="#b6a897" stroke-width="1.5" opacity="0.16" stroke-linecap="round"/><path d="M1048.2 692.8 L1065.0 707.4" stroke="#b6a897" stroke-width="1.7" opacity="0.35" stroke-linecap="round"/><path d="M1137.9 724.1 L1197.5 768.9" stroke="#85776a" stroke-width="3.4" opacity="0.22" stroke-linecap="round"/><path d="M1014.0 789.0 L1041.7 826.2" stroke="#85776a" stroke-width="3.2" opacity="0.18" stroke-linecap="round"/><path d="M1081.5 692.1 L1125.3 726.3" stroke="#b6a897" stroke-width="1.9" opacity="0.20" stroke-linecap="round"/><path d="M1013.2 713.0 L1063.1 766.1" stroke="#b6a897" stroke-width="1.8" opacity="0.26" stroke-linecap="round"/><path d="M1193.8 655.5 L1241.2 679.3" stroke="#b6a897" stroke-width="2.5" opacity="0.30" stroke-linecap="round"/><path d="M1465.5 663.7 L1529.3 684.3" stroke="#85776a" stroke-width="2.9" opacity="0.19" stroke-linecap="round"/><path d="M1428.6 697.6 L1480.5 717.8" stroke="#85776a" stroke-width="2.5" opacity="0.28" stroke-linecap="round"/><path d="M1027.6 593.9 L1064.9 615.5" stroke="#b6a897" stroke-width="2.1" opacity="0.26" stroke-linecap="round"/><path d="M1136.8 760.8 L1195.8 810.8" stroke="#85776a" stroke-width="1.9" opacity="0.19" stroke-linecap="round"/><path d="M1200.8 675.9 L1220.1 686.3" stroke="#b6a897" stroke-width="2.6" opacity="0.18" stroke-linecap="round"/><path d="M1199.5 594.9 L1220.2 602.4" stroke="#b6a897" stroke-width="0.9" opacity="0.35" stroke-linecap="round"/><path d="M1410.4 737.8 L1461.4 761.4" stroke="#85776a" stroke-width="3.6" opacity="0.25" stroke-linecap="round"/><path d="M1440.9 703.1 L1466.4 713.0" stroke="#85776a" stroke-width="3.1" opacity="0.21" stroke-linecap="round"/><path d="M1004.8 844.5 L1035.7 894.4" stroke="#85776a" stroke-width="3.1" opacity="0.11" stroke-linecap="round"/><path d="M1381.4 827.2 L1441.5 864.7" stroke="#b6a897" stroke-width="3.2" opacity="0.13" stroke-linecap="round"/><path d="M1447.5 482.8 L1455.0 483.3" stroke="#b6a897" stroke-width="0.6" opacity="0.35" stroke-linecap="round"/><path d="M1104.5 659.2 L1133.7 677.8" stroke="#b6a897" stroke-width="2.9" opacity="0.17" stroke-linecap="round"/><path d="M1162.3 797.5 L1217.6 846.4" stroke="#b6a897" stroke-width="2.4" opacity="0.36" stroke-linecap="round"/><path d="M1316.3 553.3 L1330.8 556.4" stroke="#85776a" stroke-width="1.5" opacity="0.12" stroke-linecap="round"/><path d="M1131.4 743.2 L1209.1 806.5" stroke="#b6a897" stroke-width="4.1" opacity="0.15" stroke-linecap="round"/><path d="M1442.7 749.8 L1497.6 774.8" stroke="#85776a" stroke-width="1.8" opacity="0.16" stroke-linecap="round"/><path d="M1099.6 754.9 L1129.0 782.0" stroke="#b6a897" stroke-width="2.2" opacity="0.31" stroke-linecap="round"/><path d="M1311.2 617.7 L1364.4 635.2" stroke="#85776a" stroke-width="1.9" opacity="0.16" stroke-linecap="round"/><path d="M1315.6 841.5 L1364.8 877.0" stroke="#85776a" stroke-width="4.3" opacity="0.30" stroke-linecap="round"/><path d="M1252.8 646.1 L1294.4 663.8" stroke="#b6a897" stroke-width="1.1" opacity="0.19" stroke-linecap="round"/><path d="M1398.8 573.9 L1412.3 576.8" stroke="#b6a897" stroke-width="1.0" opacity="0.18" stroke-linecap="round"/><path d="M1274.2 584.6 L1292.0 589.8" stroke="#b6a897" stroke-width="1.9" opacity="0.13" stroke-linecap="round"/><path d="M1362.0 657.2 L1398.6 670.6" stroke="#85776a" stroke-width="2.9" opacity="0.14" stroke-linecap="round"/><path d="M1309.7 694.2 L1349.5 712.8" stroke="#b6a897" stroke-width="2.8" opacity="0.24" stroke-linecap="round"/><path d="M1397.6 672.0 L1454.0 692.8" stroke="#b6a897" stroke-width="2.3" opacity="0.16" stroke-linecap="round"/><path d="M1071.2 768.2 L1127.3 826.7" stroke="#85776a" stroke-width="2.4" opacity="0.25" stroke-linecap="round"/><path d="M1378.5 788.4 L1420.9 812.3" stroke="#85776a" stroke-width="3.2" opacity="0.22" stroke-linecap="round"/><path d="M1016.4 661.9 L1057.5 697.2" stroke="#b6a897" stroke-width="2.6" opacity="0.33" stroke-linecap="round"/><path d="M1088.6 544.2 L1097.1 547.0" stroke="#85776a" stroke-width="1.0" opacity="0.19" stroke-linecap="round"/><path d="M1396.6 578.9 L1410.0 581.9" stroke="#b6a897" stroke-width="1.8" opacity="0.25" stroke-linecap="round"/><path d="M1119.5 788.3 L1149.0 816.7" stroke="#85776a" stroke-width="2.7" opacity="0.16" stroke-linecap="round"/><path d="M1254.2 720.6 L1290.3 741.2" stroke="#85776a" stroke-width="2.9" opacity="0.26" stroke-linecap="round"/><path d="M1136.3 540.4 L1148.3 543.7" stroke="#b6a897" stroke-width="1.1" opacity="0.31" stroke-linecap="round"/><path d="M1212.0 495.0 L1222.2 496.4" stroke="#b6a897" stroke-width="0.6" opacity="0.13" stroke-linecap="round"/><path d="M1349.8 662.0 L1421.0 689.2" stroke="#85776a" stroke-width="1.4" opacity="0.25" stroke-linecap="round"/><path d="M1127.8 485.4 L1143.2 487.5" stroke="#85776a" stroke-width="0.6" opacity="0.16" stroke-linecap="round"/><path d="M1049.3 643.1 L1064.1 653.4" stroke="#b6a897" stroke-width="2.8" opacity="0.30" stroke-linecap="round"/><path d="M1128.3 562.0 L1154.7 571.1" stroke="#85776a" stroke-width="0.9" opacity="0.29" stroke-linecap="round"/><path d="M1154.6 610.9 L1209.0 634.8" stroke="#85776a" stroke-width="1.9" opacity="0.18" stroke-linecap="round"/><path d="M1031.1 725.2 L1065.1 760.6" stroke="#b6a897" stroke-width="3.3" opacity="0.26" stroke-linecap="round"/><path d="M1215.2 820.0 L1268.9 864.6" stroke="#85776a" stroke-width="4.8" opacity="0.26" stroke-linecap="round"/><path d="M1179.4 558.3 L1194.1 562.6" stroke="#85776a" stroke-width="1.2" opacity="0.14" stroke-linecap="round"/><path d="M1235.3 557.7 L1253.7 562.4" stroke="#b6a897" stroke-width="1.1" opacity="0.28" stroke-linecap="round"/><path d="M1095.4 807.7 L1141.0 857.0" stroke="#b6a897" stroke-width="2.1" opacity="0.21" stroke-linecap="round"/><path d="M1020.9 580.9 L1036.9 589.7" stroke="#85776a" stroke-width="1.0" opacity="0.28" stroke-linecap="round"/><path d="M1128.0 752.6 L1169.9 788.1" stroke="#b6a897" stroke-width="2.0" opacity="0.21" stroke-linecap="round"/><path d="M1321.5 765.0 L1413.0 818.1" stroke="#85776a" stroke-width="1.7" opacity="0.18" stroke-linecap="round"/><path d="M1438.0 504.4 L1449.1 505.5" stroke="#b6a897" stroke-width="0.8" opacity="0.13" stroke-linecap="round"/><path d="M1126.7 631.4 L1142.0 639.5" stroke="#b6a897" stroke-width="1.2" opacity="0.13" stroke-linecap="round"/><path d="M1207.1 595.3 L1240.0 607.0" stroke="#b6a897" stroke-width="1.0" opacity="0.18" stroke-linecap="round"/><path d="M1323.3 765.2 L1356.2 784.2" stroke="#85776a" stroke-width="2.2" opacity="0.24" stroke-linecap="round"/><path d="M1178.7 628.0 L1232.4 652.5" stroke="#85776a" stroke-width="1.4" opacity="0.17" stroke-linecap="round"/><path d="M1034.8 558.5 L1044.3 562.7" stroke="#b6a897" stroke-width="1.3" opacity="0.31" stroke-linecap="round"/><path d="M1127.0 840.8 L1199.1 918.7" stroke="#85776a" stroke-width="5.5" opacity="0.24" stroke-linecap="round"/><path d="M1437.0 731.9 L1520.0 768.0" stroke="#b6a897" stroke-width="2.1" opacity="0.14" stroke-linecap="round"/><path d="M1199.5 645.5 L1217.2 653.8" stroke="#85776a" stroke-width="1.7" opacity="0.20" stroke-linecap="round"/><path d="M1083.9 582.1 L1108.3 593.0" stroke="#85776a" stroke-width="1.3" opacity="0.23" stroke-linecap="round"/><path d="M1054.7 566.4 L1074.6 575.1" stroke="#85776a" stroke-width="1.1" opacity="0.22" stroke-linecap="round"/><path d="M1251.0 743.2 L1320.0 785.9" stroke="#85776a" stroke-width="1.6" opacity="0.17" stroke-linecap="round"/><path d="M1211.3 496.1 L1216.9 496.8" stroke="#b6a897" stroke-width="0.6" opacity="0.23" stroke-linecap="round"/><path d="M1135.2 603.9 L1148.1 609.6" stroke="#b6a897" stroke-width="1.3" opacity="0.26" stroke-linecap="round"/><path d="M1332.1 577.9 L1349.3 582.1" stroke="#b6a897" stroke-width="1.3" opacity="0.35" stroke-linecap="round"/><path d="M1269.4 612.9 L1323.7 631.7" stroke="#b6a897" stroke-width="2.1" opacity="0.27" stroke-linecap="round"/><path d="M1205.9 636.5 L1233.1 648.7" stroke="#b6a897" stroke-width="2.4" opacity="0.21" stroke-linecap="round"/><path d="M1025.4 833.3 L1051.2 870.7" stroke="#85776a" stroke-width="3.7" opacity="0.17" stroke-linecap="round"/><path d="M1075.3 858.6 L1108.5 902.0" stroke="#b6a897" stroke-width="2.9" opacity="0.18" stroke-linecap="round"/><path d="M1277.8 470.2 L1284.2 470.6" stroke="#85776a" stroke-width="0.6" opacity="0.23" stroke-linecap="round"/><path d="M1294.2 688.2 L1345.2 712.2" stroke="#b6a897" stroke-width="3.1" opacity="0.20" stroke-linecap="round"/><path d="M1432.1 612.1 L1458.8 619.1" stroke="#b6a897" stroke-width="2.0" opacity="0.28" stroke-linecap="round"/><path d="M1394.7 860.9 L1436.7 888.8" stroke="#85776a" stroke-width="4.4" opacity="0.21" stroke-linecap="round"/><path d="M1134.8 614.7 L1179.4 635.7" stroke="#85776a" stroke-width="1.8" opacity="0.15" stroke-linecap="round"/><path d="M1089.8 598.9 L1120.9 614.1" stroke="#85776a" stroke-width="1.0" opacity="0.11" stroke-linecap="round"/><path d="M1354.2 512.4 L1362.4 513.5" stroke="#b6a897" stroke-width="0.7" opacity="0.24" stroke-linecap="round"/><path d="M1420.9 536.0 L1450.7 540.6" stroke="#85776a" stroke-width="0.6" opacity="0.20" stroke-linecap="round"/><path d="M1172.4 775.4 L1244.2 833.6" stroke="#b6a897" stroke-width="2.5" opacity="0.20" stroke-linecap="round"/><path d="M1360.6 603.6 L1408.3 616.9" stroke="#b6a897" stroke-width="2.1" opacity="0.22" stroke-linecap="round"/><path d="M1279.2 743.5 L1358.8 790.3" stroke="#85776a" stroke-width="3.8" opacity="0.18" stroke-linecap="round"/><path d="M1116.2 738.9 L1145.6 763.4" stroke="#b6a897" stroke-width="1.5" opacity="0.35" stroke-linecap="round"/><path d="M1051.9 834.6 L1116.5 920.5" stroke="#b6a897" stroke-width="3.6" opacity="0.22" stroke-linecap="round"/><path d="M1478.4 852.7 L1510.9 871.4" stroke="#85776a" stroke-width="4.6" opacity="0.11" stroke-linecap="round"/><path d="M1346.9 584.1 L1395.0 596.2" stroke="#85776a" stroke-width="0.9" opacity="0.11" stroke-linecap="round"/><path d="M1232.4 687.6 L1271.3 708.1" stroke="#b6a897" stroke-width="1.9" opacity="0.32" stroke-linecap="round"/><path d="M1191.4 583.5 L1224.6 594.8" stroke="#b6a897" stroke-width="1.7" opacity="0.21" stroke-linecap="round"/><path d="M1244.5 738.3 L1319.7 784.7" stroke="#85776a" stroke-width="1.9" opacity="0.12" stroke-linecap="round"/><path d="M1112.7 831.4 L1168.6 892.8" stroke="#85776a" stroke-width="2.4" opacity="0.10" stroke-linecap="round"/><path d="M1064.8 688.1 L1113.1 727.3" stroke="#85776a" stroke-width="1.9" opacity="0.20" stroke-linecap="round"/><path d="M1137.1 620.0 L1152.1 627.3" stroke="#b6a897" stroke-width="1.0" opacity="0.19" stroke-linecap="round"/><path d="M1101.0 501.6 L1114.2 504.2" stroke="#85776a" stroke-width="0.9" opacity="0.27" stroke-linecap="round"/><path d="M1190.0 658.5 L1247.9 688.2" stroke="#85776a" stroke-width="1.9" opacity="0.21" stroke-linecap="round"/><path d="M1299.5 735.1 L1338.6 756.6" stroke="#b6a897" stroke-width="3.9" opacity="0.36" stroke-linecap="round"/><path d="M1393.6 647.3 L1446.7 665.0" stroke="#85776a" stroke-width="1.4" opacity="0.13" stroke-linecap="round"/><path d="M1049.1 518.0 L1062.6 521.8" stroke="#85776a" stroke-width="1.0" opacity="0.20" stroke-linecap="round"/><path d="M1114.5 473.7 L1127.2 475.1" stroke="#b6a897" stroke-width="0.6" opacity="0.31" stroke-linecap="round"/><path d="M1345.6 786.5 L1400.4 819.0" stroke="#b6a897" stroke-width="4.2" opacity="0.30" stroke-linecap="round"/><path d="M1028.7 827.8 L1108.1 940.4" stroke="#b6a897" stroke-width="3.6" opacity="0.18" stroke-linecap="round"/><path d="M1006.2 814.6 L1056.4 889.5" stroke="#85776a" stroke-width="2.8" opacity="0.17" stroke-linecap="round"/><path d="M1386.0 734.9 L1432.3 756.9" stroke="#85776a" stroke-width="3.1" opacity="0.16" stroke-linecap="round"/><path d="M1159.8 835.8 L1189.0 864.5" stroke="#b6a897" stroke-width="3.1" opacity="0.17" stroke-linecap="round"/><path d="M1247.2 759.2 L1317.2 805.1" stroke="#85776a" stroke-width="2.1" opacity="0.13" stroke-linecap="round"/><path d="M1220.1 614.6 L1233.4 619.7" stroke="#85776a" stroke-width="1.6" opacity="0.16" stroke-linecap="round"/><path d="M1461.7 690.0 L1492.5 701.2" stroke="#85776a" stroke-width="3.2" opacity="0.25" stroke-linecap="round"/><path d="M1486.6 514.7 L1501.4 516.3" stroke="#85776a" stroke-width="1.1" opacity="0.18" stroke-linecap="round"/><path d="M1088.1 750.4 L1122.6 782.7" stroke="#b6a897" stroke-width="3.5" opacity="0.20" stroke-linecap="round"/><path d="M1174.1 542.6 L1208.8 551.5" stroke="#b6a897" stroke-width="0.7" opacity="0.21" stroke-linecap="round"/><path d="M1095.3 718.4 L1148.5 762.4" stroke="#b6a897" stroke-width="3.7" opacity="0.27" stroke-linecap="round"/><path d="M1280.8 676.7 L1304.2 687.4" stroke="#b6a897" stroke-width="2.9" opacity="0.23" stroke-linecap="round"/><path d="M1199.2 734.6 L1243.4 764.4" stroke="#b6a897" stroke-width="2.1" opacity="0.26" stroke-linecap="round"/><path d="M1013.9 667.3 L1057.0 705.5" stroke="#b6a897" stroke-width="2.1" opacity="0.26" stroke-linecap="round"/><path d="M1067.6 829.7 L1118.2 892.8" stroke="#b6a897" stroke-width="5.6" opacity="0.20" stroke-linecap="round"/><path d="M1467.8 766.8 L1522.1 792.1" stroke="#85776a" stroke-width="4.1" opacity="0.30" stroke-linecap="round"/><path d="M1103.8 658.1 L1161.0 694.4" stroke="#b6a897" stroke-width="2.5" opacity="0.32" stroke-linecap="round"/><path d="M1217.9 770.6 L1313.2 839.4" stroke="#b6a897" stroke-width="1.9" opacity="0.29" stroke-linecap="round"/><path d="M1394.6 572.5 L1420.3 578.1" stroke="#b6a897" stroke-width="1.3" opacity="0.17" stroke-linecap="round"/><path d="M1322.0 585.6 L1335.9 589.3" stroke="#b6a897" stroke-width="1.4" opacity="0.24" stroke-linecap="round"/><path d="M1384.9 567.5 L1423.1 575.6" stroke="#b6a897" stroke-width="1.5" opacity="0.34" stroke-linecap="round"/><path d="M1072.2 782.2 L1113.5 827.0" stroke="#85776a" stroke-width="2.0" opacity="0.17" stroke-linecap="round"/><path d="M1402.4 822.6 L1438.1 843.9" stroke="#85776a" stroke-width="2.5" opacity="0.27" stroke-linecap="round"/><path d="M1440.2 723.8 L1465.5 734.5" stroke="#85776a" stroke-width="3.8" opacity="0.23" stroke-linecap="round"/><path d="M1348.4 824.5 L1390.2 851.8" stroke="#85776a" stroke-width="4.2" opacity="0.10" stroke-linecap="round"/><path d="M1152.5 604.6 L1190.2 620.6" stroke="#b6a897" stroke-width="1.3" opacity="0.29" stroke-linecap="round"/><path d="M1068.5 541.5 L1094.5 550.3" stroke="#85776a" stroke-width="1.0" opacity="0.12" stroke-linecap="round"/><path d="M1285.0 843.9 L1340.6 886.6" stroke="#b6a897" stroke-width="2.7" opacity="0.29" stroke-linecap="round"/><path d="M1172.4 763.2 L1213.5 795.3" stroke="#85776a" stroke-width="2.8" opacity="0.23" stroke-linecap="round"/><path d="M1395.8 642.6 L1431.5 654.2" stroke="#b6a897" stroke-width="1.8" opacity="0.35" stroke-linecap="round"/><path d="M1346.2 612.0 L1369.3 618.9" stroke="#85776a" stroke-width="1.7" opacity="0.27" stroke-linecap="round"/><path d="M1411.8 586.1 L1448.5 594.6" stroke="#b6a897" stroke-width="1.3" opacity="0.21" stroke-linecap="round"/><path d="M1281.4 765.2 L1335.8 799.2" stroke="#85776a" stroke-width="1.8" opacity="0.16" stroke-linecap="round"/><path d="M1462.6 650.4 L1493.7 659.9" stroke="#b6a897" stroke-width="2.3" opacity="0.18" stroke-linecap="round"/><path d="M1057.5 626.5 L1109.4 659.2" stroke="#85776a" stroke-width="1.4" opacity="0.17" stroke-linecap="round"/><path d="M1391.8 794.2 L1464.4 835.1" stroke="#85776a" stroke-width="3.5" opacity="0.28" stroke-linecap="round"/><path d="M1188.4 506.1 L1200.6 508.1" stroke="#b6a897" stroke-width="0.8" opacity="0.20" stroke-linecap="round"/><path d="M1461.2 838.8 L1490.4 855.5" stroke="#85776a" stroke-width="4.1" opacity="0.17" stroke-linecap="round"/><path d="M1147.5 651.9 L1195.9 678.6" stroke="#b6a897" stroke-width="2.3" opacity="0.35" stroke-linecap="round"/><path d="M1165.1 842.9 L1254.2 930.9" stroke="#b6a897" stroke-width="4.6" opacity="0.36" stroke-linecap="round"/><path d="M1236.3 497.2 L1247.4 498.7" stroke="#85776a" stroke-width="0.7" opacity="0.30" stroke-linecap="round"/><path d="M1190.9 556.1 L1204.2 559.8" stroke="#b6a897" stroke-width="1.0" opacity="0.14" stroke-linecap="round"/><path d="M1319.6 537.9 L1343.4 542.3" stroke="#85776a" stroke-width="1.2" opacity="0.26" stroke-linecap="round"/><path d="M1376.6 768.5 L1408.3 785.4" stroke="#85776a" stroke-width="3.0" opacity="0.27" stroke-linecap="round"/><path d="M1435.0 857.4 L1465.0 876.0" stroke="#b6a897" stroke-width="3.3" opacity="0.25" stroke-linecap="round"/><path d="M1392.7 515.9 L1405.0 517.5" stroke="#85776a" stroke-width="0.7" opacity="0.21" stroke-linecap="round"/><path d="M1053.7 521.9 L1071.2 527.0" stroke="#b6a897" stroke-width="0.7" opacity="0.18" stroke-linecap="round"/><path d="M1035.1 636.0 L1057.1 651.7" stroke="#b6a897" stroke-width="1.8" opacity="0.23" stroke-linecap="round"/><path d="M1035.2 784.3 L1105.0 870.3" stroke="#b6a897" stroke-width="2.4" opacity="0.25" stroke-linecap="round"/><path d="M1286.1 630.5 L1341.6 650.9" stroke="#85776a" stroke-width="2.7" opacity="0.10" stroke-linecap="round"/><path d="M1400.1 532.6 L1425.6 536.5" stroke="#85776a" stroke-width="1.1" opacity="0.21" stroke-linecap="round"/><path d="M1069.3 481.4 L1076.5 482.5" stroke="#b6a897" stroke-width="0.6" opacity="0.32" stroke-linecap="round"/><path d="M1217.1 489.0 L1222.4 489.7" stroke="#85776a" stroke-width="0.6" opacity="0.28" stroke-linecap="round"/><path d="M1235.4 601.4 L1274.0 614.8" stroke="#b6a897" stroke-width="2.1" opacity="0.26" stroke-linecap="round"/><path d="M1433.9 673.4 L1473.8 687.4" stroke="#b6a897" stroke-width="1.8" opacity="0.18" stroke-linecap="round"/><path d="M1209.1 617.7 L1243.0 631.3" stroke="#85776a" stroke-width="1.5" opacity="0.19" stroke-linecap="round"/><path d="M1418.5 490.6 L1423.7 491.0" stroke="#b6a897" stroke-width="0.6" opacity="0.22" stroke-linecap="round"/><path d="M1057.6 559.4 L1077.6 567.6" stroke="#85776a" stroke-width="1.0" opacity="0.15" stroke-linecap="round"/><path d="M1242.7 776.9 L1265.2 792.6" stroke="#b6a897" stroke-width="2.8" opacity="0.12" stroke-linecap="round"/><path d="M1459.3 710.7 L1503.0 727.8" stroke="#85776a" stroke-width="2.8" opacity="0.16" stroke-linecap="round"/><path d="M1283.3 715.5 L1322.6 736.3" stroke="#b6a897" stroke-width="2.6" opacity="0.30" stroke-linecap="round"/><path d="M1060.6 491.5 L1068.5 493.0" stroke="#b6a897" stroke-width="0.6" opacity="0.22" stroke-linecap="round"/><path d="M1191.3 812.4 L1234.9 850.0" stroke="#85776a" stroke-width="4.1" opacity="0.30" stroke-linecap="round"/><path d="M1155.7 799.5 L1199.4 839.0" stroke="#b6a897" stroke-width="4.5" opacity="0.27" stroke-linecap="round"/><path d="M1383.9 493.6 L1389.2 494.1" stroke="#b6a897" stroke-width="0.6" opacity="0.34" stroke-linecap="round"/><path d="M999.6 704.4 L1061.9 772.1" stroke="#b6a897" stroke-width="3.4" opacity="0.12" stroke-linecap="round"/><path d="M1187.3 754.9 L1254.3 804.1" stroke="#b6a897" stroke-width="4.5" opacity="0.14" stroke-linecap="round"/><path d="M1194.0 769.8 L1268.9 826.6" stroke="#85776a" stroke-width="2.9" opacity="0.19" stroke-linecap="round"/><path d="M1162.8 517.4 L1184.3 521.7" stroke="#85776a" stroke-width="0.6" opacity="0.27" stroke-linecap="round"/><path d="M1269.1 741.5 L1297.1 758.2" stroke="#85776a" stroke-width="1.8" opacity="0.29" stroke-linecap="round"/><path d="M1446.6 699.1 L1478.8 711.4" stroke="#b6a897" stroke-width="2.2" opacity="0.32" stroke-linecap="round"/><path d="M1431.0 520.7 L1447.7 522.9" stroke="#85776a" stroke-width="0.6" opacity="0.18" stroke-linecap="round"/><path d="M1437.0 740.5 L1494.0 766.0" stroke="#85776a" stroke-width="3.3" opacity="0.26" stroke-linecap="round"/><path d="M1371.7 513.6 L1381.0 514.8" stroke="#85776a" stroke-width="0.8" opacity="0.17" stroke-linecap="round"/><path d="M1176.6 536.1 L1199.1 541.5" stroke="#85776a" stroke-width="1.0" opacity="0.21" stroke-linecap="round"/><path d="M1160.2 795.7 L1223.7 851.8" stroke="#b6a897" stroke-width="3.4" opacity="0.20" stroke-linecap="round"/><path d="M1114.8 748.0 L1149.4 777.9" stroke="#b6a897" stroke-width="3.6" opacity="0.18" stroke-linecap="round"/><path d="M1410.6 496.4 L1421.2 497.5" stroke="#85776a" stroke-width="0.7" opacity="0.22" stroke-linecap="round"/><path d="M1450.6 691.1 L1526.1 718.9" stroke="#85776a" stroke-width="2.3" opacity="0.15" stroke-linecap="round"/><path d="M1051.4 766.7 L1086.8 805.9" stroke="#85776a" stroke-width="4.2" opacity="0.24" stroke-linecap="round"/><path d="M1265.6 698.7 L1303.8 718.4" stroke="#b6a897" stroke-width="1.6" opacity="0.30" stroke-linecap="round"/><path d="M1034.8 770.4 L1099.0 846.4" stroke="#85776a" stroke-width="2.4" opacity="0.21" stroke-linecap="round"/><path d="M1049.5 700.7 L1106.5 751.6" stroke="#b6a897" stroke-width="2.8" opacity="0.34" stroke-linecap="round"/><path d="M1154.5 730.0 L1234.9 789.0" stroke="#85776a" stroke-width="3.5" opacity="0.27" stroke-linecap="round"/><path d="M1129.5 760.1 L1164.7 790.5" stroke="#b6a897" stroke-width="1.7" opacity="0.18" stroke-linecap="round"/><path d="M1133.4 589.8 L1149.3 596.3" stroke="#85776a" stroke-width="1.4" opacity="0.16" stroke-linecap="round"/><path d="M1243.3 580.3 L1285.5 592.9" stroke="#b6a897" stroke-width="0.9" opacity="0.33" stroke-linecap="round"/><path d="M1248.6 708.0 L1313.5 743.8" stroke="#b6a897" stroke-width="2.7" opacity="0.34" stroke-linecap="round"/><path d="M1132.9 784.7 L1156.6 806.5" stroke="#85776a" stroke-width="4.5" opacity="0.26" stroke-linecap="round"/><path d="M1226.6 565.1 L1248.1 571.0" stroke="#b6a897" stroke-width="1.5" opacity="0.24" stroke-linecap="round"/><path d="M1172.1 698.1 L1202.7 717.3" stroke="#85776a" stroke-width="3.5" opacity="0.29" stroke-linecap="round"/><path d="M1022.4 713.1 L1086.5 778.9" stroke="#b6a897" stroke-width="1.7" opacity="0.15" stroke-linecap="round"/><path d="M1124.5 837.8 L1212.5 932.9" stroke="#b6a897" stroke-width="2.3" opacity="0.14" stroke-linecap="round"/><path d="M1286.3 481.8 L1301.8 483.2" stroke="#b6a897" stroke-width="0.6" opacity="0.31" stroke-linecap="round"/><path d="M1037.1 672.3 L1077.0 705.5" stroke="#b6a897" stroke-width="1.6" opacity="0.21" stroke-linecap="round"/><path d="M1089.7 662.6 L1139.9 696.6" stroke="#85776a" stroke-width="2.0" opacity="0.12" stroke-linecap="round"/><path d="M1253.4 659.1 L1321.9 689.9" stroke="#85776a" stroke-width="2.3" opacity="0.16" stroke-linecap="round"/><path d="M1331.2 603.4 L1382.8 618.5" stroke="#b6a897" stroke-width="2.3" opacity="0.34" stroke-linecap="round"/><path d="M1454.8 822.9 L1482.8 838.4" stroke="#b6a897" stroke-width="3.5" opacity="0.28" stroke-linecap="round"/><path d="M1275.0 706.9 L1353.6 747.9" stroke="#b6a897" stroke-width="1.6" opacity="0.35" stroke-linecap="round"/><path d="M1066.5 482.3 L1080.7 484.5" stroke="#85776a" stroke-width="0.6" opacity="0.11" stroke-linecap="round"/><path d="M1317.8 797.5 L1383.1 839.4" stroke="#b6a897" stroke-width="3.7" opacity="0.31" stroke-linecap="round"/><path d="M1047.6 469.7 L1057.5 470.9" stroke="#b6a897" stroke-width="0.6" opacity="0.22" stroke-linecap="round"/><path d="M1179.9 608.3 L1193.0 613.6" stroke="#85776a" stroke-width="2.0" opacity="0.22" stroke-linecap="round"/><path d="M1154.6 675.2 L1207.4 706.8" stroke="#85776a" stroke-width="2.2" opacity="0.28" stroke-linecap="round"/><path d="M1084.8 541.5 L1099.2 546.1" stroke="#b6a897" stroke-width="1.0" opacity="0.20" stroke-linecap="round"/><path d="M1324.8 567.9 L1343.3 572.2" stroke="#85776a" stroke-width="1.2" opacity="0.28" stroke-linecap="round"/><path d="M1123.3 545.1 L1139.6 549.9" stroke="#b6a897" stroke-width="0.9" opacity="0.28" stroke-linecap="round"/><path d="M1264.9 792.0 L1293.5 811.9" stroke="#85776a" stroke-width="4.1" opacity="0.14" stroke-linecap="round"/><path d="M1478.3 639.3 L1511.9 648.8" stroke="#b6a897" stroke-width="1.6" opacity="0.36" stroke-linecap="round"/><path d="M1062.2 619.0 L1107.9 646.2" stroke="#85776a" stroke-width="2.2" opacity="0.26" stroke-linecap="round"/><path d="M1138.4 620.0 L1177.2 638.7" stroke="#85776a" stroke-width="2.1" opacity="0.26" stroke-linecap="round"/><path d="M1255.9 475.5 L1263.1 476.1" stroke="#b6a897" stroke-width="0.6" opacity="0.15" stroke-linecap="round"/><path d="M1422.8 553.0 L1460.2 559.7" stroke="#85776a" stroke-width="1.5" opacity="0.29" stroke-linecap="round"/><path d="M1348.5 527.3 L1377.5 531.8" stroke="#85776a" stroke-width="0.6" opacity="0.24" stroke-linecap="round"/><path d="M1316.8 806.4 L1420.6 874.9" stroke="#85776a" stroke-width="3.5" opacity="0.12" stroke-linecap="round"/><path d="M1463.8 583.2 L1477.6 586.1" stroke="#85776a" stroke-width="0.9" opacity="0.11" stroke-linecap="round"/><path d="M1099.8 595.2 L1115.7 602.6" stroke="#b6a897" stroke-width="1.5" opacity="0.26" stroke-linecap="round"/><path d="M1227.9 759.5 L1317.7 820.8" stroke="#85776a" stroke-width="1.9" opacity="0.12" stroke-linecap="round"/><path d="M1361.0 593.6 L1409.3 606.3" stroke="#85776a" stroke-width="1.5" opacity="0.17" stroke-linecap="round"/><path d="M1130.7 688.2 L1191.9 729.3" stroke="#85776a" stroke-width="3.5" opacity="0.22" stroke-linecap="round"/><path d="M1224.5 810.5 L1261.9 840.2" stroke="#b6a897" stroke-width="4.9" opacity="0.13" stroke-linecap="round"/><path d="M1199.8 780.7 L1224.7 800.0" stroke="#85776a" stroke-width="2.2" opacity="0.25" stroke-linecap="round"/><path d="M1022.0 555.5 L1036.8 562.2" stroke="#85776a" stroke-width="1.4" opacity="0.23" stroke-linecap="round"/><path d="M1099.9 660.3 L1115.3 670.4" stroke="#85776a" stroke-width="1.7" opacity="0.15" stroke-linecap="round"/><path d="M1173.8 714.3 L1220.8 745.5" stroke="#85776a" stroke-width="2.9" opacity="0.17" stroke-linecap="round"/><path d="M1270.0 819.7 L1327.8 862.7" stroke="#85776a" stroke-width="3.8" opacity="0.17" stroke-linecap="round"/><path d="M1089.3 806.7 L1174.7 900.8" stroke="#b6a897" stroke-width="5.0" opacity="0.16" stroke-linecap="round"/><path d="M1475.3 677.9 L1509.8 689.5" stroke="#b6a897" stroke-width="1.5" opacity="0.18" stroke-linecap="round"/><path d="M1062.4 688.0 L1128.9 742.3" stroke="#85776a" stroke-width="2.0" opacity="0.24" stroke-linecap="round"/><path d="M1271.5 610.0 L1305.4 621.5" stroke="#b6a897" stroke-width="2.3" opacity="0.21" stroke-linecap="round"/><path d="M1255.7 470.5 L1261.0 470.9" stroke="#b6a897" stroke-width="0.6" opacity="0.23" stroke-linecap="round"/><path d="M1251.7 506.7 L1265.9 508.8" stroke="#b6a897" stroke-width="0.8" opacity="0.19" stroke-linecap="round"/><path d="M1036.3 638.5 L1085.0 673.4" stroke="#b6a897" stroke-width="1.5" opacity="0.31" stroke-linecap="round"/><path d="M1439.4 574.1 L1467.3 579.8" stroke="#b6a897" stroke-width="1.2" opacity="0.35" stroke-linecap="round"/><path d="M1235.5 668.0 L1267.4 683.5" stroke="#b6a897" stroke-width="2.8" opacity="0.20" stroke-linecap="round"/><path d="M1107.5 547.5 L1139.1 557.6" stroke="#b6a897" stroke-width="1.4" opacity="0.34" stroke-linecap="round"/><path d="M1366.8 739.8 L1438.8 775.7" stroke="#b6a897" stroke-width="3.7" opacity="0.16" stroke-linecap="round"/><path d="M1146.7 795.0 L1184.4 829.4" stroke="#85776a" stroke-width="4.7" opacity="0.20" stroke-linecap="round"/><path d="M1380.6 608.7 L1419.5 619.5" stroke="#b6a897" stroke-width="2.2" opacity="0.27" stroke-linecap="round"/><path d="M1337.0 496.7 L1343.5 497.4" stroke="#b6a897" stroke-width="0.8" opacity="0.19" stroke-linecap="round"/><path d="M1338.6 545.3 L1367.9 550.9" stroke="#b6a897" stroke-width="1.5" opacity="0.15" stroke-linecap="round"/><path d="M1016.0 738.4 L1080.2 812.0" stroke="#b6a897" stroke-width="3.8" opacity="0.33" stroke-linecap="round"/><path d="M1443.2 697.7 L1502.5 720.4" stroke="#85776a" stroke-width="2.4" opacity="0.17" stroke-linecap="round"/><path d="M1091.1 478.8 L1103.5 480.4" stroke="#b6a897" stroke-width="0.6" opacity="0.31" stroke-linecap="round"/><path d="M1246.5 748.3 L1288.7 775.1" stroke="#85776a" stroke-width="2.3" opacity="0.23" stroke-linecap="round"/><path d="M1449.2 747.9 L1495.3 768.6" stroke="#b6a897" stroke-width="4.1" opacity="0.19" stroke-linecap="round"/><path d="M1263.9 828.8 L1370.6 910.9" stroke="#85776a" stroke-width="4.9" opacity="0.16" stroke-linecap="round"/><path d="M1244.6 684.6 L1263.8 694.4" stroke="#b6a897" stroke-width="3.1" opacity="0.23" stroke-linecap="round"/><path d="M1123.8 768.3 L1156.0 797.2" stroke="#85776a" stroke-width="3.3" opacity="0.17" stroke-linecap="round"/><path d="M1039.8 498.2 L1050.3 500.6" stroke="#b6a897" stroke-width="0.6" opacity="0.27" stroke-linecap="round"/><path d="M1202.5 638.3 L1228.0 649.8" stroke="#b6a897" stroke-width="1.8" opacity="0.15" stroke-linecap="round"/><path d="M1322.4 642.1 L1375.8 661.6" stroke="#b6a897" stroke-width="2.0" opacity="0.35" stroke-linecap="round"/><path d="M1111.2 817.8 L1170.0 880.4" stroke="#b6a897" stroke-width="5.4" opacity="0.17" stroke-linecap="round"/><path d="M1034.5 776.3 L1060.1 807.2" stroke="#85776a" stroke-width="3.3" opacity="0.24" stroke-linecap="round"/><path d="M1138.5 747.2 L1208.0 803.3" stroke="#b6a897" stroke-width="3.5" opacity="0.23" stroke-linecap="round"/><path d="M1054.0 639.9 L1088.4 663.3" stroke="#b6a897" stroke-width="2.8" opacity="0.13" stroke-linecap="round"/><path d="M1141.3 498.5 L1157.3 501.2" stroke="#85776a" stroke-width="0.6" opacity="0.19" stroke-linecap="round"/><path d="M1355.3 701.0 L1399.2 720.5" stroke="#b6a897" stroke-width="2.8" opacity="0.27" stroke-linecap="round"/><path d="M1358.0 489.2 L1364.0 489.8" stroke="#85776a" stroke-width="0.6" opacity="0.10" stroke-linecap="round"/><path d="M1201.4 499.7 L1214.0 501.5" stroke="#b6a897" stroke-width="0.6" opacity="0.32" stroke-linecap="round"/><path d="M1285.3 667.1 L1318.9 681.7" stroke="#85776a" stroke-width="3.1" opacity="0.16" stroke-linecap="round"/><path d="M1422.9 560.4 L1448.2 565.2" stroke="#85776a" stroke-width="1.1" opacity="0.28" stroke-linecap="round"/><path d="M1382.3 574.2 L1417.3 582.0" stroke="#85776a" stroke-width="1.2" opacity="0.19" stroke-linecap="round"/><path d="M1148.8 648.1 L1194.1 672.5" stroke="#85776a" stroke-width="1.8" opacity="0.25" stroke-linecap="round"/><path d="M1217.4 647.4 L1277.2 674.9" stroke="#85776a" stroke-width="1.9" opacity="0.28" stroke-linecap="round"/><path d="M1365.4 858.1 L1428.9 902.0" stroke="#b6a897" stroke-width="4.6" opacity="0.19" stroke-linecap="round"/><path d="M1439.8 757.1 L1512.0 791.1" stroke="#85776a" stroke-width="3.5" opacity="0.23" stroke-linecap="round"/><path d="M1376.5 562.2 L1403.1 567.7" stroke="#85776a" stroke-width="1.7" opacity="0.24" stroke-linecap="round"/><path d="M1214.0 476.5 L1225.5 477.6" stroke="#b6a897" stroke-width="0.6" opacity="0.17" stroke-linecap="round"/><path d="M1484.8 634.0 L1509.1 640.6" stroke="#85776a" stroke-width="2.5" opacity="0.22" stroke-linecap="round"/><path d="M1393.7 798.9 L1450.2 831.0" stroke="#b6a897" stroke-width="3.7" opacity="0.30" stroke-linecap="round"/><path d="M1277.7 770.7 L1318.0 796.5" stroke="#b6a897" stroke-width="3.7" opacity="0.25" stroke-linecap="round"/><path d="M1049.9 836.7 L1121.1 932.5" stroke="#b6a897" stroke-width="3.3" opacity="0.35" stroke-linecap="round"/><path d="M1277.3 581.1 L1307.1 589.4" stroke="#85776a" stroke-width="1.3" opacity="0.23" stroke-linecap="round"/><path d="M1313.8 828.1 L1362.9 862.5" stroke="#85776a" stroke-width="4.7" opacity="0.13" stroke-linecap="round"/><path d="M1215.5 709.3 L1266.5 739.6" stroke="#b6a897" stroke-width="3.8" opacity="0.35" stroke-linecap="round"/><path d="M1376.0 615.7 L1392.6 620.5" stroke="#b6a897" stroke-width="1.3" opacity="0.29" stroke-linecap="round"/><path d="M1181.7 800.3 L1223.3 835.6" stroke="#b6a897" stroke-width="3.0" opacity="0.13" stroke-linecap="round"/><path d="M1325.2 623.9 L1345.8 630.7" stroke="#b6a897" stroke-width="1.4" opacity="0.34" stroke-linecap="round"/><path d="M1098.6 572.1 L1112.3 577.6" stroke="#b6a897" stroke-width="0.8" opacity="0.30" stroke-linecap="round"/><path d="M1237.5 576.0 L1272.1 586.1" stroke="#b6a897" stroke-width="0.7" opacity="0.33" stroke-linecap="round"/><path d="M1342.6 555.6 L1372.7 561.9" stroke="#b6a897" stroke-width="0.9" opacity="0.17" stroke-linecap="round"/><path d="M1151.8 658.5 L1189.4 679.6" stroke="#b6a897" stroke-width="2.7" opacity="0.27" stroke-linecap="round"/><path d="M1108.5 862.1 L1146.0 907.0" stroke="#85776a" stroke-width="4.5" opacity="0.29" stroke-linecap="round"/><path d="M1216.0 607.6 L1246.4 619.0" stroke="#b6a897" stroke-width="2.1" opacity="0.28" stroke-linecap="round"/><path d="M1177.4 538.8 L1203.5 545.2" stroke="#b6a897" stroke-width="0.7" opacity="0.33" stroke-linecap="round"/><path d="M1186.6 562.7 L1203.1 567.6" stroke="#85776a" stroke-width="1.4" opacity="0.24" stroke-linecap="round"/><path d="M1417.2 495.7 L1430.3 496.9" stroke="#85776a" stroke-width="0.6" opacity="0.11" stroke-linecap="round"/><path d="M1472.8 613.3 L1512.5 623.2" stroke="#85776a" stroke-width="2.2" opacity="0.12" stroke-linecap="round"/><path d="M1351.8 478.6 L1357.2 479.0" stroke="#b6a897" stroke-width="0.6" opacity="0.29" stroke-linecap="round"/><path d="M1232.5 601.3 L1256.2 609.5" stroke="#85776a" stroke-width="1.6" opacity="0.17" stroke-linecap="round"/><path d="M1151.0 571.3 L1169.5 577.7" stroke="#85776a" stroke-width="0.7" opacity="0.22" stroke-linecap="round"/><path d="M1055.2 574.0 L1093.3 591.6" stroke="#b6a897" stroke-width="1.3" opacity="0.19" stroke-linecap="round"/><path d="M1343.1 817.4 L1420.8 867.8" stroke="#b6a897" stroke-width="4.2" opacity="0.24" stroke-linecap="round"/><path d="M1188.3 634.8 L1226.1 652.2" stroke="#b6a897" stroke-width="1.8" opacity="0.25" stroke-linecap="round"/><path d="M1427.3 790.1 L1469.6 812.3" stroke="#85776a" stroke-width="1.8" opacity="0.11" stroke-linecap="round"/><path d="M1295.3 789.8 L1340.2 819.2" stroke="#b6a897" stroke-width="2.3" opacity="0.32" stroke-linecap="round"/><path d="M1315.6 737.5 L1388.5 776.8" stroke="#85776a" stroke-width="2.8" opacity="0.21" stroke-linecap="round"/><path d="M1442.8 810.8 L1548.9 868.7" stroke="#85776a" stroke-width="4.8" opacity="0.15" stroke-linecap="round"/><path d="M1246.8 849.2 L1315.0 906.4" stroke="#b6a897" stroke-width="3.2" opacity="0.24" stroke-linecap="round"/><path d="M1016.2 826.7 L1096.3 945.2" stroke="#85776a" stroke-width="2.2" opacity="0.18" stroke-linecap="round"/><path d="M1049.6 716.4 L1096.6 760.8" stroke="#85776a" stroke-width="3.8" opacity="0.25" stroke-linecap="round"/><path d="M1284.7 710.9 L1314.4 726.3" stroke="#b6a897" stroke-width="2.4" opacity="0.28" stroke-linecap="round"/><path d="M1221.7 557.7 L1247.4 564.4" stroke="#b6a897" stroke-width="1.0" opacity="0.27" stroke-linecap="round"/><path d="M1120.4 476.9 L1130.8 478.1" stroke="#85776a" stroke-width="0.6" opacity="0.25" stroke-linecap="round"/><path d="M1461.6 605.8 L1497.9 614.6" stroke="#b6a897" stroke-width="1.0" opacity="0.18" stroke-linecap="round"/><path d="M1325.8 786.4 L1409.4 837.7" stroke="#85776a" stroke-width="2.0" opacity="0.26" stroke-linecap="round"/><path d="M1113.0 528.0 L1120.7 530.0" stroke="#85776a" stroke-width="0.6" opacity="0.29" stroke-linecap="round"/><path d="M1122.7 595.5 L1166.2 614.4" stroke="#b6a897" stroke-width="1.1" opacity="0.27" stroke-linecap="round"/><path d="M1015.5 825.2 L1066.5 900.5" stroke="#b6a897" stroke-width="3.4" opacity="0.18" stroke-linecap="round"/><path d="M1084.9 747.7 L1132.9 792.8" stroke="#85776a" stroke-width="4.3" opacity="0.16" stroke-linecap="round"/><path d="M1328.0 844.2 L1359.5 866.6" stroke="#85776a" stroke-width="2.6" opacity="0.16" stroke-linecap="round"/><path d="M1304.8 791.5 L1407.6 857.9" stroke="#b6a897" stroke-width="4.0" opacity="0.21" stroke-linecap="round"/><path d="M1244.2 762.9 L1269.5 779.7" stroke="#85776a" stroke-width="3.0" opacity="0.21" stroke-linecap="round"/><path d="M1024.6 488.7 L1042.2 492.3" stroke="#85776a" stroke-width="0.6" opacity="0.13" stroke-linecap="round"/><path d="M1443.3 712.5 L1474.9 725.2" stroke="#85776a" stroke-width="2.5" opacity="0.25" stroke-linecap="round"/><path d="M1121.1 697.7 L1148.2 717.0" stroke="#85776a" stroke-width="3.0" opacity="0.27" stroke-linecap="round"/><path d="M1106.2 483.4 L1115.7 484.7" stroke="#b6a897" stroke-width="0.6" opacity="0.30" stroke-linecap="round"/><path d="M1353.2 781.8 L1380.3 797.5" stroke="#85776a" stroke-width="4.1" opacity="0.13" stroke-linecap="round"/><path d="M1026.2 484.4 L1041.1 487.2" stroke="#85776a" stroke-width="0.6" opacity="0.11" stroke-linecap="round"/><path d="M1261.1 792.0 L1356.5 859.0" stroke="#85776a" stroke-width="2.0" opacity="0.16" stroke-linecap="round"/><path d="M1067.0 547.7 L1080.7 552.7" stroke="#85776a" stroke-width="1.2" opacity="0.13" stroke-linecap="round"/><path d="M1187.6 687.6 L1212.9 702.3" stroke="#b6a897" stroke-width="2.5" opacity="0.21" stroke-linecap="round"/><path d="M1018.6 652.4 L1059.6 686.0" stroke="#85776a" stroke-width="1.5" opacity="0.10" stroke-linecap="round"/><path d="M1274.0 822.0 L1330.1 863.6" stroke="#b6a897" stroke-width="3.8" opacity="0.15" stroke-linecap="round"/><path d="M1344.3 626.0 L1375.5 636.1" stroke="#b6a897" stroke-width="2.1" opacity="0.13" stroke-linecap="round"/><path d="M1141.8 582.3 L1179.3 596.7" stroke="#b6a897" stroke-width="1.8" opacity="0.34" stroke-linecap="round"/><path d="M1193.1 544.1 L1224.5 551.9" stroke="#85776a" stroke-width="1.3" opacity="0.30" stroke-linecap="round"/><path d="M1410.3 768.2 L1460.9 793.8" stroke="#b6a897" stroke-width="3.4" opacity="0.34" stroke-linecap="round"/><path d="M1406.1 695.9 L1488.3 728.9" stroke="#b6a897" stroke-width="3.3" opacity="0.35" stroke-linecap="round"/><path d="M1203.7 528.2 L1223.9 532.5" stroke="#b6a897" stroke-width="0.6" opacity="0.13" stroke-linecap="round"/><path d="M1135.7 720.3 L1172.8 747.9" stroke="#85776a" stroke-width="2.9" opacity="0.19" stroke-linecap="round"/><path d="M1469.3 817.0 L1518.0 843.0" stroke="#b6a897" stroke-width="3.1" opacity="0.17" stroke-linecap="round"/><path d="M1087.2 796.3 L1143.5 856.9" stroke="#85776a" stroke-width="3.0" opacity="0.10" stroke-linecap="round"/><path d="M1174.9 470.6 L1180.2 471.1" stroke="#b6a897" stroke-width="0.6" opacity="0.14" stroke-linecap="round"/><path d="M1107.3 749.2 L1155.9 792.2" stroke="#b6a897" stroke-width="3.6" opacity="0.34" stroke-linecap="round"/><path d="M1156.1 638.5 L1188.9 655.1" stroke="#b6a897" stroke-width="1.6" opacity="0.23" stroke-linecap="round"/><path d="M1061.7 728.3 L1124.2 787.5" stroke="#85776a" stroke-width="4.2" opacity="0.22" stroke-linecap="round"/><path d="M1028.3 534.9 L1045.6 541.2" stroke="#b6a897" stroke-width="0.7" opacity="0.26" stroke-linecap="round"/><path d="M1471.5 747.6 L1497.8 759.0" stroke="#85776a" stroke-width="1.8" opacity="0.19" stroke-linecap="round"/><path d="M1314.6 794.8 L1381.8 837.8" stroke="#85776a" stroke-width="4.5" opacity="0.12" stroke-linecap="round"/><path d="M1018.7 724.7 L1045.9 754.2" stroke="#85776a" stroke-width="1.5" opacity="0.11" stroke-linecap="round"/><path d="M1058.8 675.5 L1104.2 711.0" stroke="#85776a" stroke-width="3.0" opacity="0.12" stroke-linecap="round"/><path d="M1328.7 730.8 L1410.7 773.0" stroke="#b6a897" stroke-width="3.0" opacity="0.33" stroke-linecap="round"/><path d="M1466.6 745.1 L1509.3 763.7" stroke="#b6a897" stroke-width="3.6" opacity="0.23" stroke-linecap="round"/><path d="M1245.8 474.3 L1251.6 474.8" stroke="#b6a897" stroke-width="0.6" opacity="0.24" stroke-linecap="round"/><path d="M1076.4 493.4 L1089.9 495.9" stroke="#b6a897" stroke-width="0.6" opacity="0.31" stroke-linecap="round"/><path d="M1223.8 587.0 L1253.7 596.7" stroke="#85776a" stroke-width="1.8" opacity="0.28" stroke-linecap="round"/><path d="M1190.6 662.6 L1231.4 683.9" stroke="#b6a897" stroke-width="1.8" opacity="0.13" stroke-linecap="round"/><path d="M1037.7 624.3 L1078.6 651.4" stroke="#85776a" stroke-width="1.2" opacity="0.18" stroke-linecap="round"/><path d="M1362.4 711.9 L1410.7 733.9" stroke="#85776a" stroke-width="2.1" opacity="0.28" stroke-linecap="round"/><path d="M1008.8 551.9 L1042.1 567.2" stroke="#85776a" stroke-width="1.1" opacity="0.13" stroke-linecap="round"/><path d="M1363.9 833.7 L1395.3 854.2" stroke="#85776a" stroke-width="4.2" opacity="0.19" stroke-linecap="round"/><path d="M1013.2 693.2 L1075.7 755.0" stroke="#85776a" stroke-width="2.2" opacity="0.26" stroke-linecap="round"/><path d="M1028.6 513.2 L1047.1 518.5" stroke="#b6a897" stroke-width="0.7" opacity="0.31" stroke-linecap="round"/><path d="M1029.1 551.4 L1054.3 562.1" stroke="#85776a" stroke-width="1.1" opacity="0.28" stroke-linecap="round"/><path d="M1323.1 556.3 L1334.4 558.8" stroke="#b6a897" stroke-width="1.5" opacity="0.27" stroke-linecap="round"/><path d="M1343.2 597.8 L1391.8 611.3" stroke="#85776a" stroke-width="1.9" opacity="0.20" stroke-linecap="round"/><path d="M1267.9 526.2 L1296.6 531.4" stroke="#85776a" stroke-width="1.1" opacity="0.21" stroke-linecap="round"/><path d="M1081.3 593.8 L1120.4 612.8" stroke="#85776a" stroke-width="1.9" opacity="0.18" stroke-linecap="round"/><path d="M1341.9 748.0 L1396.5 777.0" stroke="#85776a" stroke-width="1.9" opacity="0.13" stroke-linecap="round"/><path d="M1222.8 790.3 L1293.7 843.9" stroke="#85776a" stroke-width="3.0" opacity="0.14" stroke-linecap="round"/><path d="M1292.0 864.5 L1329.3 894.2" stroke="#b6a897" stroke-width="4.7" opacity="0.27" stroke-linecap="round"/><path d="M1268.4 765.4 L1355.6 821.3" stroke="#85776a" stroke-width="4.6" opacity="0.23" stroke-linecap="round"/><path d="M1202.4 621.1 L1231.8 633.4" stroke="#85776a" stroke-width="2.0" opacity="0.17" stroke-linecap="round"/><path d="M1363.6 801.5 L1444.1 849.8" stroke="#85776a" stroke-width="4.6" opacity="0.23" stroke-linecap="round"/><path d="M1164.6 573.2 L1178.1 577.8" stroke="#b6a897" stroke-width="1.6" opacity="0.19" stroke-linecap="round"/><path d="M1066.9 623.4 L1085.4 634.4" stroke="#b6a897" stroke-width="2.0" opacity="0.14" stroke-linecap="round"/><path d="M1375.2 574.9 L1393.5 579.0" stroke="#85776a" stroke-width="1.7" opacity="0.19" stroke-linecap="round"/><path d="M1149.2 551.6 L1170.0 557.8" stroke="#b6a897" stroke-width="0.9" opacity="0.13" stroke-linecap="round"/><path d="M1383.9 728.3 L1426.6 748.2" stroke="#85776a" stroke-width="1.9" opacity="0.12" stroke-linecap="round"/><path d="M1297.2 794.6 L1321.7 810.8" stroke="#b6a897" stroke-width="3.1" opacity="0.20" stroke-linecap="round"/><path d="M1217.9 484.2 L1226.2 485.1" stroke="#85776a" stroke-width="0.7" opacity="0.28" stroke-linecap="round"/><path d="M1278.5 822.0 L1312.8 847.2" stroke="#85776a" stroke-width="4.6" opacity="0.21" stroke-linecap="round"/><path d="M1057.8 509.2 L1071.0 512.5" stroke="#b6a897" stroke-width="0.6" opacity="0.26" stroke-linecap="round"/><path d="M1432.6 820.4 L1525.7 873.2" stroke="#85776a" stroke-width="4.2" opacity="0.26" stroke-linecap="round"/><path d="M1072.0 729.2 L1119.7 773.1" stroke="#b6a897" stroke-width="2.6" opacity="0.29" stroke-linecap="round"/><path d="M1256.2 737.0 L1330.7 781.8" stroke="#85776a" stroke-width="3.8" opacity="0.13" stroke-linecap="round"/><path d="M1088.4 488.4 L1105.6 491.2" stroke="#85776a" stroke-width="0.6" opacity="0.19" stroke-linecap="round"/><path d="M1124.2 686.8 L1184.1 727.3" stroke="#b6a897" stroke-width="2.0" opacity="0.31" stroke-linecap="round"/><path d="M1281.1 470.4 L1284.7 470.6" stroke="#85776a" stroke-width="0.6" opacity="0.15" stroke-linecap="round"/><path d="M1267.9 769.7 L1339.3 816.1" stroke="#b6a897" stroke-width="2.9" opacity="0.17" stroke-linecap="round"/><path d="M1119.7 650.2 L1167.3 678.2" stroke="#85776a" stroke-width="1.3" opacity="0.14" stroke-linecap="round"/><path d="M1290.2 689.6 L1308.2 698.1" stroke="#b6a897" stroke-width="3.4" opacity="0.21" stroke-linecap="round"/><path d="M1400.4 534.2 L1432.4 539.2" stroke="#b6a897" stroke-width="0.6" opacity="0.32" stroke-linecap="round"/><path d="M1105.4 846.5 L1134.8 880.7" stroke="#85776a" stroke-width="2.6" opacity="0.28" stroke-linecap="round"/><path d="M1230.4 837.8 L1264.5 866.5" stroke="#85776a" stroke-width="3.2" opacity="0.23" stroke-linecap="round"/><path d="M1365.3 758.0 L1419.7 786.8" stroke="#85776a" stroke-width="2.9" opacity="0.17" stroke-linecap="round"/><path d="M1322.5 651.1 L1375.3 671.2" stroke="#b6a897" stroke-width="1.7" opacity="0.15" stroke-linecap="round"/><path d="M1201.2 488.4 L1210.3 489.5" stroke="#85776a" stroke-width="0.6" opacity="0.19" stroke-linecap="round"/><path d="M1406.9 856.1 L1437.1 875.5" stroke="#85776a" stroke-width="3.2" opacity="0.16" stroke-linecap="round"/><path d="M1290.4 525.4 L1316.4 529.8" stroke="#85776a" stroke-width="0.7" opacity="0.12" stroke-linecap="round"/><path d="M1384.5 476.2 L1390.2 476.6" stroke="#b6a897" stroke-width="0.6" opacity="0.14" stroke-linecap="round"/><path d="M1156.7 545.3 L1186.0 553.4" stroke="#85776a" stroke-width="1.3" opacity="0.19" stroke-linecap="round"/><path d="M1223.1 610.4 L1269.7 627.9" stroke="#b6a897" stroke-width="1.3" opacity="0.34" stroke-linecap="round"/><path d="M1439.7 706.3 L1521.1 738.5" stroke="#b6a897" stroke-width="1.8" opacity="0.17" stroke-linecap="round"/><path d="M1059.8 787.0 L1096.6 828.9" stroke="#b6a897" stroke-width="3.1" opacity="0.28" stroke-linecap="round"/><path d="M1433.8 552.6 L1468.2 558.6" stroke="#85776a" stroke-width="1.1" opacity="0.16" stroke-linecap="round"/><path d="M1198.1 585.0 L1244.0 600.6" stroke="#b6a897" stroke-width="1.5" opacity="0.14" stroke-linecap="round"/><path d="M1360.2 570.7 L1381.8 575.5" stroke="#85776a" stroke-width="0.9" opacity="0.11" stroke-linecap="round"/><path d="M1265.4 636.5 L1299.1 649.8" stroke="#85776a" stroke-width="2.0" opacity="0.10" stroke-linecap="round"/><path d="M1156.2 734.7 L1206.1 771.8" stroke="#85776a" stroke-width="2.5" opacity="0.11" stroke-linecap="round"/><path d="M1155.3 591.5 L1170.8 597.6" stroke="#85776a" stroke-width="0.8" opacity="0.10" stroke-linecap="round"/><path d="M1165.6 814.1 L1220.3 864.3" stroke="#85776a" stroke-width="3.7" opacity="0.12" stroke-linecap="round"/><path d="M1257.6 779.7 L1316.6 820.0" stroke="#b6a897" stroke-width="2.8" opacity="0.24" stroke-linecap="round"/><path d="M1373.9 776.8 L1468.4 828.8" stroke="#b6a897" stroke-width="4.0" opacity="0.23" stroke-linecap="round"/><path d="M1274.1 682.7 L1321.8 705.4" stroke="#b6a897" stroke-width="3.0" opacity="0.13" stroke-linecap="round"/><path d="M1282.8 765.3 L1348.8 806.4" stroke="#85776a" stroke-width="4.3" opacity="0.20" stroke-linecap="round"/><path d="M1464.4 624.7 L1486.1 630.6" stroke="#85776a" stroke-width="1.8" opacity="0.25" stroke-linecap="round"/><path d="M1356.1 668.8 L1389.9 682.0" stroke="#85776a" stroke-width="2.9" opacity="0.14" stroke-linecap="round"/><path d="M1401.2 757.7 L1482.5 798.3" stroke="#85776a" stroke-width="2.4" opacity="0.24" stroke-linecap="round"/><path d="M1015.0 738.0 L1083.1 816.4" stroke="#85776a" stroke-width="3.1" opacity="0.20" stroke-linecap="round"/><path d="M1047.5 599.4 L1092.7 624.7" stroke="#85776a" stroke-width="2.2" opacity="0.19" stroke-linecap="round"/><path d="M1335.2 582.9 L1350.2 586.8" stroke="#85776a" stroke-width="1.1" opacity="0.19" stroke-linecap="round"/><path d="M1275.1 640.5 L1337.1 665.0" stroke="#b6a897" stroke-width="2.7" opacity="0.32" stroke-linecap="round"/><path d="M1125.6 561.9 L1149.1 569.9" stroke="#b6a897" stroke-width="1.3" opacity="0.20" stroke-linecap="round"/><path d="M1157.6 873.2 L1182.3 899.9" stroke="#85776a" stroke-width="2.5" opacity="0.25" stroke-linecap="round"/><path d="M1024.6 802.3 L1055.5 843.9" stroke="#b6a897" stroke-width="2.6" opacity="0.34" stroke-linecap="round"/><path d="M1048.4 571.0 L1089.9 590.2" stroke="#b6a897" stroke-width="1.9" opacity="0.23" stroke-linecap="round"/><path d="M1357.8 766.9 L1418.9 800.4" stroke="#b6a897" stroke-width="2.4" opacity="0.28" stroke-linecap="round"/><path d="M1317.7 603.4 L1336.1 609.0" stroke="#85776a" stroke-width="2.2" opacity="0.15" stroke-linecap="round"/><path d="M1419.7 839.2 L1532.4 907.5" stroke="#b6a897" stroke-width="5.2" opacity="0.32" stroke-linecap="round"/><path d="M1029.8 684.8 L1081.5 731.2" stroke="#b6a897" stroke-width="3.2" opacity="0.13" stroke-linecap="round"/><path d="M1364.7 495.1 L1376.7 496.4" stroke="#b6a897" stroke-width="0.8" opacity="0.23" stroke-linecap="round"/><path d="M1305.0 735.1 L1373.5 772.4" stroke="#b6a897" stroke-width="2.5" opacity="0.14" stroke-linecap="round"/><path d="M1320.9 816.8 L1413.7 879.2" stroke="#85776a" stroke-width="3.5" opacity="0.19" stroke-linecap="round"/><path d="M1269.1 747.3 L1297.2 764.4" stroke="#85776a" stroke-width="1.5" opacity="0.15" stroke-linecap="round"/><path d="M1115.3 561.4 L1137.3 569.1" stroke="#b6a897" stroke-width="1.4" opacity="0.28" stroke-linecap="round"/><path d="M1431.4 478.4 L1441.5 479.0" stroke="#b6a897" stroke-width="0.6" opacity="0.21" stroke-linecap="round"/><path d="M1036.0 601.7 L1072.5 623.2" stroke="#b6a897" stroke-width="0.9" opacity="0.34" stroke-linecap="round"/><path d="M1273.6 729.3 L1348.4 771.7" stroke="#b6a897" stroke-width="4.0" opacity="0.36" stroke-linecap="round"/><path d="M1007.2 646.6 L1046.8 679.5" stroke="#b6a897" stroke-width="2.3" opacity="0.27" stroke-linecap="round"/><path d="M1000.8 607.6 L1043.8 637.6" stroke="#b6a897" stroke-width="1.9" opacity="0.26" stroke-linecap="round"/><path d="M1337.7 795.5 L1443.7 860.8" stroke="#b6a897" stroke-width="3.4" opacity="0.22" stroke-linecap="round"/><path d="M1173.1 474.4 L1179.7 475.0" stroke="#85776a" stroke-width="0.6" opacity="0.15" stroke-linecap="round"/><path d="M1049.7 742.5 L1083.7 777.7" stroke="#85776a" stroke-width="2.6" opacity="0.22" stroke-linecap="round"/><path d="M1388.9 642.4 L1421.1 652.9" stroke="#85776a" stroke-width="2.8" opacity="0.21" stroke-linecap="round"/><path d="M1018.0 560.8 L1035.7 569.2" stroke="#85776a" stroke-width="1.6" opacity="0.20" stroke-linecap="round"/><path d="M1125.6 675.8 L1169.8 704.4" stroke="#85776a" stroke-width="1.3" opacity="0.16" stroke-linecap="round"/><path d="M1349.6 788.8 L1429.6 836.2" stroke="#b6a897" stroke-width="3.7" opacity="0.30" stroke-linecap="round"/><path d="M1075.0 491.8 L1090.2 494.6" stroke="#b6a897" stroke-width="0.7" opacity="0.31" stroke-linecap="round"/><path d="M1280.7 534.1 L1303.7 538.5" stroke="#85776a" stroke-width="1.0" opacity="0.29" stroke-linecap="round"/><path d="M1115.8 663.4 L1182.3 705.3" stroke="#85776a" stroke-width="2.0" opacity="0.23" stroke-linecap="round"/><path d="M1114.6 575.1 L1134.8 583.0" stroke="#85776a" stroke-width="1.4" opacity="0.23" stroke-linecap="round"/><path d="M1442.7 820.6 L1548.5 879.8" stroke="#85776a" stroke-width="5.2" opacity="0.26" stroke-linecap="round"/><path d="M1295.8 507.2 L1302.7 508.2" stroke="#b6a897" stroke-width="0.6" opacity="0.15" stroke-linecap="round"/><path d="M1262.3 764.3 L1283.8 778.2" stroke="#85776a" stroke-width="3.8" opacity="0.28" stroke-linecap="round"/><path d="M1230.3 792.8 L1286.2 834.7" stroke="#b6a897" stroke-width="1.9" opacity="0.13" stroke-linecap="round"/><path d="M1435.1 680.5 L1493.2 701.4" stroke="#b6a897" stroke-width="1.5" opacity="0.29" stroke-linecap="round"/><path d="M1372.1 603.3 L1408.6 613.3" stroke="#b6a897" stroke-width="1.4" opacity="0.19" stroke-linecap="round"/><path d="M1434.3 587.8 L1459.0 593.4" stroke="#85776a" stroke-width="1.8" opacity="0.14" stroke-linecap="round"/><path d="M1477.6 470.3 L1487.3 470.8" stroke="#b6a897" stroke-width="0.6" opacity="0.13" stroke-linecap="round"/><path d="M1032.5 534.6 L1054.7 542.6" stroke="#b6a897" stroke-width="1.0" opacity="0.19" stroke-linecap="round"/><path d="M1119.1 565.4 L1133.2 570.5" stroke="#85776a" stroke-width="0.7" opacity="0.18" stroke-linecap="round"/><path d="M1462.5 620.9 L1490.6 628.3" stroke="#b6a897" stroke-width="2.2" opacity="0.14" stroke-linecap="round"/><path d="M1305.4 481.8 L1319.6 483.1" stroke="#b6a897" stroke-width="0.6" opacity="0.18" stroke-linecap="round"/><path d="M1383.1 740.7 L1456.7 776.5" stroke="#85776a" stroke-width="2.2" opacity="0.29" stroke-linecap="round"/><path d="M1425.8 832.5 L1500.7 876.7" stroke="#85776a" stroke-width="2.1" opacity="0.28" stroke-linecap="round"/><path d="M1159.0 497.7 L1164.5 498.6" stroke="#85776a" stroke-width="0.8" opacity="0.12" stroke-linecap="round"/><path d="M1102.8 612.0 L1132.8 627.2" stroke="#b6a897" stroke-width="1.8" opacity="0.14" stroke-linecap="round"/><path d="M1029.1 678.7 L1064.8 710.2" stroke="#85776a" stroke-width="3.0" opacity="0.26" stroke-linecap="round"/><path d="M1190.9 567.1 L1226.6 577.9" stroke="#b6a897" stroke-width="0.7" opacity="0.25" stroke-linecap="round"/><path d="M1437.8 752.9 L1512.2 787.5" stroke="#85776a" stroke-width="2.2" opacity="0.20" stroke-linecap="round"/><path d="M1278.3 586.1 L1292.8 590.3" stroke="#85776a" stroke-width="1.6" opacity="0.11" stroke-linecap="round"/><path d="M1456.7 519.2 L1481.1 522.2" stroke="#85776a" stroke-width="1.1" opacity="0.30" stroke-linecap="round"/><path d="M1352.3 538.6 L1384.7 544.3" stroke="#85776a" stroke-width="0.7" opacity="0.13" stroke-linecap="round"/><path d="M1397.8 504.2 L1413.7 506.0" stroke="#85776a" stroke-width="0.6" opacity="0.23" stroke-linecap="round"/><path d="M1074.2 524.7 L1094.1 530.3" stroke="#b6a897" stroke-width="1.0" opacity="0.32" stroke-linecap="round"/><path d="M1160.8 526.5 L1171.0 528.8" stroke="#85776a" stroke-width="0.8" opacity="0.27" stroke-linecap="round"/><path d="M1380.0 742.5 L1436.2 770.1" stroke="#b6a897" stroke-width="4.0" opacity="0.32" stroke-linecap="round"/><path d="M1102.6 787.3 L1144.7 829.6" stroke="#b6a897" stroke-width="1.9" opacity="0.23" stroke-linecap="round"/><path d="M1131.7 854.2 L1186.2 914.3" stroke="#b6a897" stroke-width="5.4" opacity="0.30" stroke-linecap="round"/><path d="M1438.4 826.4 L1488.4 854.9" stroke="#85776a" stroke-width="4.0" opacity="0.24" stroke-linecap="round"/><path d="M1244.4 854.3 L1281.2 885.8" stroke="#85776a" stroke-width="4.1" opacity="0.19" stroke-linecap="round"/><path d="M1210.8 502.2 L1229.9 505.1" stroke="#b6a897" stroke-width="0.8" opacity="0.23" stroke-linecap="round"/><path d="M1022.7 637.5 L1070.1 673.0" stroke="#85776a" stroke-width="2.1" opacity="0.13" stroke-linecap="round"/><path d="M1040.7 655.3 L1059.7 669.9" stroke="#85776a" stroke-width="1.2" opacity="0.13" stroke-linecap="round"/><path d="M1267.5 786.6 L1358.1 848.4" stroke="#85776a" stroke-width="3.6" opacity="0.16" stroke-linecap="round"/><path d="M1263.9 796.5 L1337.6 848.7" stroke="#85776a" stroke-width="3.9" opacity="0.14" stroke-linecap="round"/><path d="M1393.7 641.0 L1456.8 661.4" stroke="#85776a" stroke-width="2.1" opacity="0.11" stroke-linecap="round"/><path d="M1181.1 684.1 L1251.7 725.3" stroke="#85776a" stroke-width="1.7" opacity="0.10" stroke-linecap="round"/><path d="M1400.6 481.5 L1414.6 482.6" stroke="#85776a" stroke-width="0.6" opacity="0.22" stroke-linecap="round"/><path d="M1294.8 568.5 L1335.2 578.5" stroke="#85776a" stroke-width="1.5" opacity="0.22" stroke-linecap="round"/><path d="M1374.0 589.0 L1395.2 594.3" stroke="#b6a897" stroke-width="1.9" opacity="0.33" stroke-linecap="round"/><path d="M1458.9 610.4 L1497.1 620.0" stroke="#b6a897" stroke-width="1.2" opacity="0.19" stroke-linecap="round"/><path d="M1030.0 515.0 L1048.1 520.3" stroke="#85776a" stroke-width="0.6" opacity="0.26" stroke-linecap="round"/><path d="M1375.6 528.6 L1389.1 530.7" stroke="#b6a897" stroke-width="0.7" opacity="0.32" stroke-linecap="round"/><path d="M1452.5 800.6 L1528.6 840.4" stroke="#b6a897" stroke-width="4.9" opacity="0.26" stroke-linecap="round"/><path d="M1184.8 599.4 L1219.3 612.6" stroke="#b6a897" stroke-width="1.2" opacity="0.33" stroke-linecap="round"/><path d="M1117.7 763.2 L1138.4 781.9" stroke="#85776a" stroke-width="2.6" opacity="0.27" stroke-linecap="round"/><path d="M1242.3 686.2 L1294.9 713.3" stroke="#b6a897" stroke-width="2.5" opacity="0.25" stroke-linecap="round"/><path d="M1121.7 694.0 L1144.9 710.3" stroke="#b6a897" stroke-width="2.2" opacity="0.35" stroke-linecap="round"/><path d="M1280.4 588.6 L1311.3 597.7" stroke="#85776a" stroke-width="1.4" opacity="0.26" stroke-linecap="round"/><path d="M1124.3 504.8 L1134.5 506.8" stroke="#85776a" stroke-width="0.6" opacity="0.12" stroke-linecap="round"/><path d="M1078.6 672.4 L1126.5 707.3" stroke="#b6a897" stroke-width="2.5" opacity="0.24" stroke-linecap="round"/><path d="M1139.4 711.2 L1184.4 743.3" stroke="#85776a" stroke-width="3.1" opacity="0.25" stroke-linecap="round"/><path d="M1458.2 704.5 L1517.5 727.3" stroke="#b6a897" stroke-width="2.6" opacity="0.19" stroke-linecap="round"/><path d="M1204.9 617.3 L1250.2 635.7" stroke="#85776a" stroke-width="2.1" opacity="0.29" stroke-linecap="round"/><path d="M1204.6 835.4 L1311.0 929.6" stroke="#85776a" stroke-width="4.4" opacity="0.12" stroke-linecap="round"/><path d="M1298.3 476.9 L1309.3 477.7" stroke="#b6a897" stroke-width="0.6" opacity="0.22" stroke-linecap="round"/><path d="M1276.0 760.6 L1343.8 802.8" stroke="#b6a897" stroke-width="3.2" opacity="0.25" stroke-linecap="round"/><path d="M1334.8 506.9 L1353.1 509.2" stroke="#b6a897" stroke-width="0.6" opacity="0.24" stroke-linecap="round"/><path d="M1257.0 538.1 L1273.9 541.6" stroke="#b6a897" stroke-width="0.6" opacity="0.16" stroke-linecap="round"/><path d="M1077.3 745.9 L1126.0 792.4" stroke="#85776a" stroke-width="4.4" opacity="0.27" stroke-linecap="round"/><path d="M1483.4 472.2 L1495.0 472.8" stroke="#b6a897" stroke-width="0.6" opacity="0.23" stroke-linecap="round"/><path d="M1181.4 536.5 L1200.1 541.0" stroke="#85776a" stroke-width="1.3" opacity="0.21" stroke-linecap="round"/><path d="M1256.6 655.4 L1314.1 680.6" stroke="#85776a" stroke-width="2.3" opacity="0.29" stroke-linecap="round"/><path d="M1125.9 704.0 L1174.5 739.1" stroke="#85776a" stroke-width="3.4" opacity="0.23" stroke-linecap="round"/><path d="M1146.4 667.8 L1170.1 681.8" stroke="#85776a" stroke-width="1.6" opacity="0.18" stroke-linecap="round"/><path d="M1123.3 703.4 L1176.2 741.7" stroke="#b6a897" stroke-width="2.5" opacity="0.31" stroke-linecap="round"/><path d="M1475.0 567.0 L1502.9 572.2" stroke="#85776a" stroke-width="1.0" opacity="0.24" stroke-linecap="round"/><path d="M1334.0 648.2 L1362.4 658.7" stroke="#85776a" stroke-width="2.6" opacity="0.27" stroke-linecap="round"/><path d="M1191.0 643.9 L1234.0 664.4" stroke="#b6a897" stroke-width="2.0" opacity="0.25" stroke-linecap="round"/><path d="M1359.0 856.8 L1394.1 881.2" stroke="#85776a" stroke-width="5.7" opacity="0.11" stroke-linecap="round"/><path d="M1140.8 802.9 L1163.7 824.6" stroke="#85776a" stroke-width="2.3" opacity="0.27" stroke-linecap="round"/><path d="M1097.6 478.1 L1101.1 478.6" stroke="#85776a" stroke-width="0.6" opacity="0.20" stroke-linecap="round"/><path d="M1281.3 838.8 L1380.9 914.8" stroke="#b6a897" stroke-width="4.3" opacity="0.28" stroke-linecap="round"/><path d="M1186.1 566.9 L1211.3 574.7" stroke="#b6a897" stroke-width="0.8" opacity="0.24" stroke-linecap="round"/><path d="M1240.1 550.3 L1271.9 557.9" stroke="#b6a897" stroke-width="0.8" opacity="0.14" stroke-linecap="round"/><path d="M1097.2 566.5 L1122.7 576.3" stroke="#85776a" stroke-width="1.4" opacity="0.24" stroke-linecap="round"/><path d="M1339.6 697.8 L1421.2 734.5" stroke="#b6a897" stroke-width="2.1" opacity="0.23" stroke-linecap="round"/><path d="M1095.4 677.1 L1115.1 691.0" stroke="#85776a" stroke-width="2.5" opacity="0.11" stroke-linecap="round"/><path d="M1276.0 504.8 L1284.8 506.0" stroke="#b6a897" stroke-width="0.6" opacity="0.23" stroke-linecap="round"/><path d="M1330.7 529.3 L1361.5 534.4" stroke="#85776a" stroke-width="1.0" opacity="0.21" stroke-linecap="round"/><path d="M1382.8 745.6 L1461.9 784.7" stroke="#b6a897" stroke-width="2.2" opacity="0.14" stroke-linecap="round"/><path d="M1258.2 522.9 L1269.0 524.8" stroke="#85776a" stroke-width="0.9" opacity="0.29" stroke-linecap="round"/><path d="M1379.9 641.5 L1443.1 662.4" stroke="#b6a897" stroke-width="1.9" opacity="0.24" stroke-linecap="round"/><path d="M1059.2 625.1 L1100.1 650.4" stroke="#b6a897" stroke-width="2.5" opacity="0.20" stroke-linecap="round"/><path d="M1172.2 679.5 L1210.0 701.6" stroke="#85776a" stroke-width="2.9" opacity="0.20" stroke-linecap="round"/><path d="M1065.0 666.1 L1116.2 703.9" stroke="#85776a" stroke-width="1.7" opacity="0.15" stroke-linecap="round"/><path d="M1197.1 703.0 L1256.5 738.8" stroke="#b6a897" stroke-width="2.4" opacity="0.25" stroke-linecap="round"/><path d="M1250.7 513.2 L1261.7 515.0" stroke="#b6a897" stroke-width="0.6" opacity="0.24" stroke-linecap="round"/><path d="M1067.0 752.2 L1122.7 808.4" stroke="#85776a" stroke-width="2.0" opacity="0.13" stroke-linecap="round"/><path d="M1448.2 479.9 L1462.9 480.9" stroke="#85776a" stroke-width="0.6" opacity="0.25" stroke-linecap="round"/><path d="M1013.9 718.2 L1069.8 778.6" stroke="#85776a" stroke-width="1.7" opacity="0.26" stroke-linecap="round"/><path d="M1106.4 767.8 L1158.4 816.6" stroke="#b6a897" stroke-width="4.1" opacity="0.25" stroke-linecap="round"/><path d="M1046.1 545.2 L1059.1 550.1" stroke="#b6a897" stroke-width="1.0" opacity="0.23" stroke-linecap="round"/><path d="M1260.0 719.9 L1321.4 754.4" stroke="#b6a897" stroke-width="2.5" opacity="0.25" stroke-linecap="round"/><path d="M1444.1 812.8 L1542.4 866.7" stroke="#b6a897" stroke-width="4.5" opacity="0.25" stroke-linecap="round"/><path d="M1054.0 567.3 L1084.3 580.7" stroke="#b6a897" stroke-width="1.0" opacity="0.25" stroke-linecap="round"/><path d="M1209.4 714.8 L1242.7 735.2" stroke="#b6a897" stroke-width="2.1" opacity="0.33" stroke-linecap="round"/><path d="M1156.0 598.0 L1185.1 609.8" stroke="#b6a897" stroke-width="1.4" opacity="0.30" stroke-linecap="round"/><path d="M1368.8 770.8 L1447.9 814.0" stroke="#85776a" stroke-width="4.6" opacity="0.19" stroke-linecap="round"/><path d="M1136.2 718.1 L1205.2 769.1" stroke="#b6a897" stroke-width="2.5" opacity="0.24" stroke-linecap="round"/><path d="M1013.9 615.2 L1036.2 630.7" stroke="#b6a897" stroke-width="1.6" opacity="0.15" stroke-linecap="round"/><path d="M1438.5 821.9 L1535.2 876.5" stroke="#85776a" stroke-width="2.9" opacity="0.28" stroke-linecap="round"/><path d="M1153.4 497.2 L1173.0 500.3" stroke="#b6a897" stroke-width="0.7" opacity="0.32" stroke-linecap="round"/><path d="M1256.8 543.7 L1267.5 546.0" stroke="#85776a" stroke-width="0.9" opacity="0.26" stroke-linecap="round"/><path d="M1331.5 589.2 L1348.3 593.7" stroke="#85776a" stroke-width="1.1" opacity="0.22" stroke-linecap="round"/><path d="M1339.5 705.7 L1385.0 726.7" stroke="#b6a897" stroke-width="3.6" opacity="0.26" stroke-linecap="round"/><path d="M1086.8 814.7 L1125.8 859.0" stroke="#b6a897" stroke-width="3.8" opacity="0.35" stroke-linecap="round"/><path d="M1009.4 719.0 L1075.2 791.5" stroke="#85776a" stroke-width="2.8" opacity="0.25" stroke-linecap="round"/><path d="M1401.5 721.1 L1458.9 746.6" stroke="#85776a" stroke-width="2.0" opacity="0.19" stroke-linecap="round"/><path d="M1289.0 614.5 L1308.5 621.1" stroke="#85776a" stroke-width="1.3" opacity="0.11" stroke-linecap="round"/><path d="M1353.4 682.1 L1394.6 699.1" stroke="#b6a897" stroke-width="3.2" opacity="0.28" stroke-linecap="round"/><path d="M1439.2 587.5 L1463.7 592.9" stroke="#85776a" stroke-width="1.8" opacity="0.29" stroke-linecap="round"/><path d="M1075.4 729.4 L1135.9 784.4" stroke="#85776a" stroke-width="1.9" opacity="0.18" stroke-linecap="round"/><path d="M1184.3 606.8 L1203.1 614.4" stroke="#85776a" stroke-width="1.4" opacity="0.26" stroke-linecap="round"/><path d="M1345.9 613.8 L1377.7 623.4" stroke="#b6a897" stroke-width="2.4" opacity="0.29" stroke-linecap="round"/><path d="M1407.2 794.9 L1509.9 851.5" stroke="#b6a897" stroke-width="3.2" opacity="0.14" stroke-linecap="round"/><path d="M1157.8 614.3 L1197.1 631.8" stroke="#b6a897" stroke-width="0.9" opacity="0.14" stroke-linecap="round"/><path d="M1225.3 635.8 L1280.3 659.3" stroke="#85776a" stroke-width="2.1" opacity="0.23" stroke-linecap="round"/><path d="M1304.6 566.0 L1327.8 571.5" stroke="#85776a" stroke-width="1.7" opacity="0.15" stroke-linecap="round"/><path d="M1466.6 597.3 L1492.7 603.2" stroke="#b6a897" stroke-width="1.1" opacity="0.28" stroke-linecap="round"/><path d="M1038.8 837.7 L1077.7 892.3" stroke="#85776a" stroke-width="4.6" opacity="0.24" stroke-linecap="round"/><path d="M1054.5 743.3 L1074.2 763.3" stroke="#85776a" stroke-width="2.0" opacity="0.14" stroke-linecap="round"/><path d="M1069.0 587.7 L1080.7 593.3" stroke="#b6a897" stroke-width="1.4" opacity="0.16" stroke-linecap="round"/><path d="M1366.0 509.1 L1373.2 510.0" stroke="#85776a" stroke-width="0.6" opacity="0.16" stroke-linecap="round"/><path d="M1232.8 778.1 L1293.1 821.2" stroke="#85776a" stroke-width="2.9" opacity="0.26" stroke-linecap="round"/><path d="M1407.2 630.7 L1426.7 636.5" stroke="#b6a897" stroke-width="1.7" opacity="0.16" stroke-linecap="round"/><path d="M1458.8 500.2 L1479.3 502.2" stroke="#b6a897" stroke-width="0.9" opacity="0.30" stroke-linecap="round"/><path d="M1234.6 714.1 L1263.9 731.1" stroke="#85776a" stroke-width="2.9" opacity="0.24" stroke-linecap="round"/><path d="M1158.3 487.3 L1163.9 488.0" stroke="#85776a" stroke-width="0.6" opacity="0.16" stroke-linecap="round"/><path d="M1248.1 782.9 L1291.7 813.5" stroke="#85776a" stroke-width="2.9" opacity="0.11" stroke-linecap="round"/><path d="M1474.1 484.9 L1489.2 486.0" stroke="#b6a897" stroke-width="0.6" opacity="0.25" stroke-linecap="round"/><path d="M1049.7 735.5 L1090.9 777.0" stroke="#85776a" stroke-width="3.2" opacity="0.23" stroke-linecap="round"/><path d="M1323.4 610.8 L1345.2 617.6" stroke="#85776a" stroke-width="1.6" opacity="0.21" stroke-linecap="round"/><path d="M1129.0 492.0 L1143.7 494.3" stroke="#85776a" stroke-width="0.6" opacity="0.30" stroke-linecap="round"/><path d="M1337.6 709.7 L1407.0 742.4" stroke="#85776a" stroke-width="3.8" opacity="0.18" stroke-linecap="round"/><path d="M1011.4 760.9 L1053.1 813.2" stroke="#b6a897" stroke-width="2.5" opacity="0.30" stroke-linecap="round"/><path d="M1225.1 802.0 L1301.6 861.4" stroke="#b6a897" stroke-width="2.1" opacity="0.34" stroke-linecap="round"/><path d="M1229.9 713.6 L1280.7 743.3" stroke="#85776a" stroke-width="2.4" opacity="0.14" stroke-linecap="round"/><path d="M1254.8 794.6 L1280.3 812.9" stroke="#b6a897" stroke-width="3.6" opacity="0.28" stroke-linecap="round"/><path d="M1470.2 544.7 L1483.6 546.7" stroke="#85776a" stroke-width="1.0" opacity="0.13" stroke-linecap="round"/><path d="M1101.5 578.8 L1117.4 585.4" stroke="#b6a897" stroke-width="0.7" opacity="0.28" stroke-linecap="round"/><path d="M1464.4 573.2 L1489.3 578.1" stroke="#b6a897" stroke-width="1.2" opacity="0.28" stroke-linecap="round"/><path d="M1350.8 655.4 L1406.3 675.9" stroke="#85776a" stroke-width="1.7" opacity="0.25" stroke-linecap="round"/><path d="M1292.8 774.4 L1323.6 793.8" stroke="#85776a" stroke-width="3.8" opacity="0.26" stroke-linecap="round"/><path d="M1313.2 724.7 L1338.0 737.6" stroke="#b6a897" stroke-width="2.3" opacity="0.15" stroke-linecap="round"/><path d="M1210.9 485.4 L1225.8 487.1" stroke="#85776a" stroke-width="0.6" opacity="0.12" stroke-linecap="round"/><path d="M1383.2 797.7 L1465.7 845.3" stroke="#b6a897" stroke-width="2.5" opacity="0.12" stroke-linecap="round"/><path d="M1157.4 538.2 L1189.9 546.6" stroke="#85776a" stroke-width="0.6" opacity="0.25" stroke-linecap="round"/><path d="M1136.1 779.0 L1161.1 801.4" stroke="#b6a897" stroke-width="4.2" opacity="0.34" stroke-linecap="round"/><path d="M1034.6 684.6 L1087.0 730.9" stroke="#b6a897" stroke-width="2.8" opacity="0.30" stroke-linecap="round"/><path d="M1466.8 673.8 L1510.8 688.6" stroke="#b6a897" stroke-width="2.1" opacity="0.31" stroke-linecap="round"/><path d="M1453.0 709.5 L1490.3 724.1" stroke="#b6a897" stroke-width="3.5" opacity="0.20" stroke-linecap="round"/><path d="M1303.1 481.5 L1314.1 482.5" stroke="#b6a897" stroke-width="0.6" opacity="0.29" stroke-linecap="round"/><path d="M1071.3 759.0 L1130.5 819.0" stroke="#85776a" stroke-width="3.0" opacity="0.15" stroke-linecap="round"/><path d="M1353.7 616.6 L1391.6 628.1" stroke="#85776a" stroke-width="1.4" opacity="0.26" stroke-linecap="round"/><path d="M1379.9 764.7 L1463.0 808.5" stroke="#85776a" stroke-width="1.8" opacity="0.19" stroke-linecap="round"/><path d="M1405.6 592.4 L1425.3 597.1" stroke="#85776a" stroke-width="0.8" opacity="0.11" stroke-linecap="round"/><path d="M1305.5 481.5 L1316.4 482.5" stroke="#85776a" stroke-width="0.6" opacity="0.21" stroke-linecap="round"/><path d="M1152.0 680.9 L1180.3 698.3" stroke="#85776a" stroke-width="1.5" opacity="0.17" stroke-linecap="round"/><path d="M1325.4 707.2 L1361.7 724.6" stroke="#85776a" stroke-width="2.8" opacity="0.25" stroke-linecap="round"/><path d="M1290.1 552.4 L1320.5 559.1" stroke="#b6a897" stroke-width="1.4" opacity="0.34" stroke-linecap="round"/><path d="M1370.3 863.3 L1430.5 905.1" stroke="#b6a897" stroke-width="3.1" opacity="0.15" stroke-linecap="round"/><path d="M1053.1 540.0 L1077.6 548.6" stroke="#b6a897" stroke-width="0.9" opacity="0.31" stroke-linecap="round"/><path d="M1166.4 683.0 L1200.5 703.5" stroke="#85776a" stroke-width="1.3" opacity="0.27" stroke-linecap="round"/><path d="M1002.2 582.3 L1045.8 608.1" stroke="#b6a897" stroke-width="1.3" opacity="0.23" stroke-linecap="round"/><path d="M1034.5 842.1 L1082.7 911.3" stroke="#85776a" stroke-width="4.5" opacity="0.28" stroke-linecap="round"/><path d="M1337.3 609.7 L1353.5 614.5" stroke="#85776a" stroke-width="1.0" opacity="0.26" stroke-linecap="round"/><path d="M1422.0 842.7 L1497.3 888.7" stroke="#b6a897" stroke-width="2.4" opacity="0.24" stroke-linecap="round"/><path d="M1291.7 777.8 L1357.2 819.5" stroke="#85776a" stroke-width="2.2" opacity="0.12" stroke-linecap="round"/><path d="M1129.2 635.7 L1188.2 667.3" stroke="#b6a897" stroke-width="1.1" opacity="0.15" stroke-linecap="round"/><path d="M1457.8 512.8 L1468.1 513.9" stroke="#b6a897" stroke-width="0.8" opacity="0.22" stroke-linecap="round"/><path d="M1067.7 606.3 L1107.1 627.7" stroke="#b6a897" stroke-width="1.4" opacity="0.32" stroke-linecap="round"/><path d="M1217.7 501.1 L1228.7 502.7" stroke="#b6a897" stroke-width="0.9" opacity="0.17" stroke-linecap="round"/><path d="M1009.3 647.9 L1044.7 677.2" stroke="#85776a" stroke-width="1.2" opacity="0.20" stroke-linecap="round"/><path d="M1098.9 679.5 L1145.4 712.4" stroke="#b6a897" stroke-width="1.9" opacity="0.13" stroke-linecap="round"/><path d="M1217.6 809.0 L1253.3 837.7" stroke="#b6a897" stroke-width="2.8" opacity="0.14" stroke-linecap="round"/><path d="M1101.6 825.8 L1150.6 880.5" stroke="#85776a" stroke-width="2.2" opacity="0.29" stroke-linecap="round"/><path d="M1094.2 544.8 L1117.0 552.2" stroke="#85776a" stroke-width="1.2" opacity="0.14" stroke-linecap="round"/><path d="M1125.4 716.5 L1144.5 730.9" stroke="#b6a897" stroke-width="3.1" opacity="0.31" stroke-linecap="round"/><path d="M1101.7 807.4 L1142.5 850.9" stroke="#b6a897" stroke-width="3.8" opacity="0.27" stroke-linecap="round"/><path d="M1117.5 692.0 L1146.9 712.6" stroke="#85776a" stroke-width="1.4" opacity="0.22" stroke-linecap="round"/><path d="M1429.6 505.1 L1452.0 507.4" stroke="#b6a897" stroke-width="0.6" opacity="0.27" stroke-linecap="round"/><path d="M1200.8 472.1 L1207.2 472.7" stroke="#85776a" stroke-width="0.6" opacity="0.15" stroke-linecap="round"/><path d="M1231.0 476.9 L1239.4 477.7" stroke="#b6a897" stroke-width="0.6" opacity="0.33" stroke-linecap="round"/><path d="M1386.2 672.8 L1423.4 686.8" stroke="#b6a897" stroke-width="2.7" opacity="0.20" stroke-linecap="round"/><path d="M1172.6 768.2 L1204.6 793.6" stroke="#85776a" stroke-width="2.8" opacity="0.24" stroke-linecap="round"/><path d="M1240.2 570.5 L1277.5 581.0" stroke="#b6a897" stroke-width="1.4" opacity="0.29" stroke-linecap="round"/><path d="M1340.4 742.4 L1410.8 779.3" stroke="#b6a897" stroke-width="4.1" opacity="0.28" stroke-linecap="round"/><path d="M1240.1 682.5 L1312.5 719.4" stroke="#85776a" stroke-width="1.9" opacity="0.20" stroke-linecap="round"/><path d="M1344.2 595.8 L1381.3 606.0" stroke="#85776a" stroke-width="0.8" opacity="0.22" stroke-linecap="round"/><path d="M1328.2 630.2 L1364.6 642.6" stroke="#b6a897" stroke-width="1.1" opacity="0.35" stroke-linecap="round"/><path d="M1307.3 507.5 L1324.1 509.7" stroke="#b6a897" stroke-width="0.7" opacity="0.24" stroke-linecap="round"/><path d="M1404.4 863.1 L1472.8 908.0" stroke="#b6a897" stroke-width="5.2" opacity="0.31" stroke-linecap="round"/><path d="M1038.2 865.1 L1070.3 913.2" stroke="#b6a897" stroke-width="3.0" opacity="0.34" stroke-linecap="round"/><path d="M1234.5 560.2 L1271.6 569.9" stroke="#b6a897" stroke-width="1.4" opacity="0.33" stroke-linecap="round"/><path d="M1024.7 805.1 L1102.7 910.8" stroke="#b6a897" stroke-width="3.0" opacity="0.30" stroke-linecap="round"/><path d="M1145.0 584.9 L1189.1 601.9" stroke="#b6a897" stroke-width="1.8" opacity="0.14" stroke-linecap="round"/><path d="M1333.5 713.2 L1416.5 753.0" stroke="#85776a" stroke-width="3.2" opacity="0.12" stroke-linecap="round"/><path d="M1133.0 539.6 L1155.6 545.9" stroke="#85776a" stroke-width="0.8" opacity="0.12" stroke-linecap="round"/><path d="M1395.7 750.4 L1426.4 765.5" stroke="#b6a897" stroke-width="2.9" opacity="0.21" stroke-linecap="round"/><path d="M1399.3 690.6 L1419.1 698.5" stroke="#b6a897" stroke-width="3.1" opacity="0.30" stroke-linecap="round"/><path d="M1230.2 604.8 L1281.9 623.3" stroke="#85776a" stroke-width="0.9" opacity="0.23" stroke-linecap="round"/><path d="M1075.3 849.2 L1107.9 890.9" stroke="#b6a897" stroke-width="3.7" opacity="0.26" stroke-linecap="round"/><path d="M1031.6 732.9 L1058.2 761.3" stroke="#b6a897" stroke-width="3.0" opacity="0.14" stroke-linecap="round"/><path d="M1164.4 506.9 L1177.4 509.2" stroke="#85776a" stroke-width="0.6" opacity="0.11" stroke-linecap="round"/><path d="M1445.3 727.3 L1510.2 754.8" stroke="#85776a" stroke-width="3.8" opacity="0.22" stroke-linecap="round"/><path d="M1406.4 617.6 L1446.8 628.9" stroke="#b6a897" stroke-width="1.9" opacity="0.35" stroke-linecap="round"/><path d="M1225.6 526.8 L1234.5 528.5" stroke="#85776a" stroke-width="0.9" opacity="0.24" stroke-linecap="round"/><path d="M1001.4 604.1 L1046.1 634.5" stroke="#85776a" stroke-width="1.1" opacity="0.20" stroke-linecap="round"/><path d="M1383.1 493.3 L1398.2 494.7" stroke="#b6a897" stroke-width="0.6" opacity="0.15" stroke-linecap="round"/><path d="M1050.4 680.9 L1079.2 704.7" stroke="#b6a897" stroke-width="2.2" opacity="0.28" stroke-linecap="round"/><path d="M1156.6 835.3 L1205.2 883.3" stroke="#b6a897" stroke-width="2.7" opacity="0.21" stroke-linecap="round"/><path d="M1101.7 555.3 L1122.8 562.6" stroke="#85776a" stroke-width="1.5" opacity="0.26" stroke-linecap="round"/><path d="M1284.3 661.7 L1314.0 674.4" stroke="#b6a897" stroke-width="1.9" opacity="0.14" stroke-linecap="round"/><path d="M1127.0 652.4 L1155.7 669.1" stroke="#85776a" stroke-width="1.7" opacity="0.22" stroke-linecap="round"/><path d="M1130.6 486.5 L1138.1 487.5" stroke="#b6a897" stroke-width="0.6" opacity="0.28" stroke-linecap="round"/><path d="M1068.1 823.6 L1099.4 862.1" stroke="#b6a897" stroke-width="3.0" opacity="0.32" stroke-linecap="round"/><path d="M1419.3 812.9 L1446.2 828.1" stroke="#85776a" stroke-width="1.9" opacity="0.19" stroke-linecap="round"/><path d="M1186.1 472.5 L1190.3 472.8" stroke="#85776a" stroke-width="0.6" opacity="0.16" stroke-linecap="round"/><path d="M1421.6 542.5 L1432.8 544.4" stroke="#85776a" stroke-width="0.9" opacity="0.15" stroke-linecap="round"/><path d="M1316.5 853.4 L1409.1 922.1" stroke="#b6a897" stroke-width="3.5" opacity="0.35" stroke-linecap="round"/><path d="M1118.7 728.6 L1139.4 745.3" stroke="#85776a" stroke-width="2.8" opacity="0.27" stroke-linecap="round"/><path d="M1386.9 871.9 L1437.3 906.7" stroke="#b6a897" stroke-width="5.9" opacity="0.13" stroke-linecap="round"/><path d="M1463.7 554.5 L1496.6 560.1" stroke="#b6a897" stroke-width="1.4" opacity="0.13" stroke-linecap="round"/><path d="M1123.9 822.7 L1202.1 904.1" stroke="#85776a" stroke-width="4.0" opacity="0.21" stroke-linecap="round"/><path d="M1390.3 836.5 L1451.4 875.1" stroke="#85776a" stroke-width="5.0" opacity="0.17" stroke-linecap="round"/><path d="M1029.8 597.3 L1055.4 612.3" stroke="#b6a897" stroke-width="0.8" opacity="0.32" stroke-linecap="round"/><path d="M1036.6 661.0 L1062.6 681.6" stroke="#85776a" stroke-width="2.7" opacity="0.12" stroke-linecap="round"/><path d="M1286.9 645.2 L1308.2 653.6" stroke="#b6a897" stroke-width="1.7" opacity="0.30" stroke-linecap="round"/><path d="M1482.1 637.2 L1509.6 644.8" stroke="#85776a" stroke-width="2.3" opacity="0.28" stroke-linecap="round"/><path d="M1074.2 677.1 L1132.1 720.7" stroke="#85776a" stroke-width="3.2" opacity="0.28" stroke-linecap="round"/><path d="M1149.3 831.3 L1232.3 914.2" stroke="#b6a897" stroke-width="4.7" opacity="0.21" stroke-linecap="round"/><path d="M1390.0 596.0 L1433.3 607.0" stroke="#85776a" stroke-width="2.1" opacity="0.21" stroke-linecap="round"/><path d="M1114.4 757.4 L1134.5 775.3" stroke="#b6a897" stroke-width="4.1" opacity="0.29" stroke-linecap="round"/><path d="M1207.8 601.4 L1252.9 618.0" stroke="#b6a897" stroke-width="1.0" opacity="0.29" stroke-linecap="round"/><path d="M1452.2 656.4 L1502.5 672.4" stroke="#85776a" stroke-width="2.8" opacity="0.18" stroke-linecap="round"/><path d="M1239.6 586.6 L1278.9 598.9" stroke="#b6a897" stroke-width="2.1" opacity="0.32" stroke-linecap="round"/><path d="M1326.1 846.7 L1418.2 912.8" stroke="#85776a" stroke-width="2.4" opacity="0.20" stroke-linecap="round"/><path d="M1446.1 513.4 L1459.4 515.0" stroke="#85776a" stroke-width="0.6" opacity="0.21" stroke-linecap="round"/><path d="M1455.3 606.5 L1495.0 616.3" stroke="#85776a" stroke-width="1.5" opacity="0.11" stroke-linecap="round"/><path d="M1286.2 743.1 L1341.3 775.0" stroke="#85776a" stroke-width="2.9" opacity="0.28" stroke-linecap="round"/><path d="M1123.1 492.0 L1139.0 494.6" stroke="#85776a" stroke-width="0.6" opacity="0.19" stroke-linecap="round"/><path d="M1376.8 592.4 L1392.3 596.3" stroke="#b6a897" stroke-width="1.5" opacity="0.20" stroke-linecap="round"/><path d="M1159.8 752.5 L1221.0 800.2" stroke="#85776a" stroke-width="1.9" opacity="0.21" stroke-linecap="round"/><path d="M1232.0 720.4 L1253.3 733.2" stroke="#b6a897" stroke-width="2.7" opacity="0.19" stroke-linecap="round"/><path d="M1310.1 555.7 L1326.1 559.2" stroke="#85776a" stroke-width="0.7" opacity="0.22" stroke-linecap="round"/><path d="M1352.8 816.5 L1427.8 864.3" stroke="#b6a897" stroke-width="4.9" opacity="0.18" stroke-linecap="round"/><path d="M1458.6 622.3 L1516.3 637.7" stroke="#b6a897" stroke-width="2.0" opacity="0.20" stroke-linecap="round"/><path d="M1173.2 507.2 L1183.0 509.0" stroke="#b6a897" stroke-width="0.7" opacity="0.27" stroke-linecap="round"/><path d="M1006.1 830.6 L1034.6 874.8" stroke="#85776a" stroke-width="2.3" opacity="0.28" stroke-linecap="round"/><path d="M1390.5 661.7 L1416.8 671.2" stroke="#b6a897" stroke-width="1.8" opacity="0.19" stroke-linecap="round"/><path d="M1273.4 755.6 L1341.9 797.8" stroke="#85776a" stroke-width="1.7" opacity="0.30" stroke-linecap="round"/><path d="M1125.9 614.2 L1181.5 641.1" stroke="#b6a897" stroke-width="1.9" opacity="0.24" stroke-linecap="round"/><path d="M1189.3 720.2 L1224.9 743.4" stroke="#85776a" stroke-width="2.1" opacity="0.24" stroke-linecap="round"/><path d="M1069.1 505.2 L1083.3 508.5" stroke="#b6a897" stroke-width="1.0" opacity="0.28" stroke-linecap="round"/><path d="M1093.9 757.7 L1144.3 805.3" stroke="#b6a897" stroke-width="1.7" opacity="0.13" stroke-linecap="round"/><path d="M1071.4 516.8 L1084.5 520.2" stroke="#85776a" stroke-width="0.7" opacity="0.12" stroke-linecap="round"/><path d="M1462.3 519.4 L1489.7 522.7" stroke="#85776a" stroke-width="1.1" opacity="0.14" stroke-linecap="round"/><path d="M1014.7 820.5 L1040.2 857.9" stroke="#b6a897" stroke-width="4.1" opacity="0.34" stroke-linecap="round"/><path d="M1136.1 791.0 L1208.8 858.4" stroke="#b6a897" stroke-width="4.9" opacity="0.35" stroke-linecap="round"/><path d="M1359.3 769.0 L1436.0 811.2" stroke="#b6a897" stroke-width="2.9" opacity="0.34" stroke-linecap="round"/><path d="M1014.0 692.3 L1050.4 728.0" stroke="#b6a897" stroke-width="3.3" opacity="0.24" stroke-linecap="round"/><path d="M1359.9 846.7 L1406.0 878.0" stroke="#b6a897" stroke-width="4.5" opacity="0.12" stroke-linecap="round"/><path d="M1182.4 823.1 L1272.1 904.0" stroke="#85776a" stroke-width="2.1" opacity="0.16" stroke-linecap="round"/><path d="M1318.9 557.7 L1352.5 565.1" stroke="#b6a897" stroke-width="1.3" opacity="0.15" stroke-linecap="round"/><path d="M1192.7 583.7 L1232.5 597.2" stroke="#b6a897" stroke-width="1.7" opacity="0.33" stroke-linecap="round"/><path d="M1342.2 679.1 L1407.8 706.4" stroke="#b6a897" stroke-width="2.3" opacity="0.32" stroke-linecap="round"/><path d="M1084.8 807.4 L1106.1 831.3" stroke="#b6a897" stroke-width="4.1" opacity="0.17" stroke-linecap="round"/><path d="M1364.0 815.4 L1402.6 839.4" stroke="#b6a897" stroke-width="2.4" opacity="0.27" stroke-linecap="round"/><path d="M1449.2 536.2 L1462.4 538.1" stroke="#b6a897" stroke-width="1.2" opacity="0.15" stroke-linecap="round"/><path d="M1242.1 738.4 L1325.7 790.3" stroke="#85776a" stroke-width="2.8" opacity="0.15" stroke-linecap="round"/><path d="M1131.1 786.1 L1216.3 865.0" stroke="#b6a897" stroke-width="1.9" opacity="0.12" stroke-linecap="round"/><path d="M1452.3 762.8 L1499.6 785.0" stroke="#85776a" stroke-width="3.3" opacity="0.11" stroke-linecap="round"/><path d="M1215.4 790.5 L1298.6 854.4" stroke="#85776a" stroke-width="1.9" opacity="0.15" stroke-linecap="round"/><path d="M1022.0 800.5 L1040.3 825.2" stroke="#85776a" stroke-width="3.0" opacity="0.27" stroke-linecap="round"/><path d="M1099.8 794.3 L1170.4 867.1" stroke="#b6a897" stroke-width="3.0" opacity="0.28" stroke-linecap="round"/><path d="M1239.6 498.7 L1251.3 500.3" stroke="#b6a897" stroke-width="0.6" opacity="0.29" stroke-linecap="round"/><path d="M1243.0 628.5 L1295.8 649.4" stroke="#85776a" stroke-width="2.1" opacity="0.13" stroke-linecap="round"/><path d="M1464.1 581.5 L1489.1 586.7" stroke="#b6a897" stroke-width="1.8" opacity="0.29" stroke-linecap="round"/><path d="M1359.5 619.4 L1395.7 630.5" stroke="#b6a897" stroke-width="2.4" opacity="0.27" stroke-linecap="round"/><path d="M1305.6 748.1 L1339.1 767.1" stroke="#85776a" stroke-width="3.1" opacity="0.24" stroke-linecap="round"/><path d="M1097.7 774.3 L1140.4 816.1" stroke="#b6a897" stroke-width="2.5" opacity="0.24" stroke-linecap="round"/><path d="M1454.5 650.2 L1511.7 667.8" stroke="#b6a897" stroke-width="2.7" opacity="0.15" stroke-linecap="round"/><path d="M1046.1 617.5 L1074.4 635.1" stroke="#85776a" stroke-width="1.6" opacity="0.30" stroke-linecap="round"/><path d="M1087.2 684.5 L1112.0 703.0" stroke="#b6a897" stroke-width="2.7" opacity="0.22" stroke-linecap="round"/><path d="M1190.8 663.8 L1242.6 690.9" stroke="#85776a" stroke-width="2.4" opacity="0.20" stroke-linecap="round"/><path d="M1286.8 571.7 L1312.5 578.4" stroke="#b6a897" stroke-width="1.6" opacity="0.30" stroke-linecap="round"/><path d="M1250.4 721.8 L1276.8 737.1" stroke="#85776a" stroke-width="3.2" opacity="0.18" stroke-linecap="round"/><path d="M1114.4 692.0 L1179.8 738.5" stroke="#b6a897" stroke-width="2.6" opacity="0.13" stroke-linecap="round"/><path d="M1153.1 653.1 L1196.8 676.9" stroke="#b6a897" stroke-width="2.3" opacity="0.35" stroke-linecap="round"/><path d="M1172.2 642.5 L1223.4 667.8" stroke="#85776a" stroke-width="2.1" opacity="0.28" stroke-linecap="round"/><path d="M1043.5 559.4 L1068.4 570.1" stroke="#b6a897" stroke-width="1.6" opacity="0.32" stroke-linecap="round"/><path d="M1246.7 715.9 L1283.9 737.1" stroke="#85776a" stroke-width="1.8" opacity="0.27" stroke-linecap="round"/><path d="M1457.0 690.3 L1525.2 715.1" stroke="#b6a897" stroke-width="2.5" opacity="0.22" stroke-linecap="round"/><path d="M1398.7 837.8 L1440.8 864.1" stroke="#b6a897" stroke-width="5.1" opacity="0.21" stroke-linecap="round"/><path d="M1188.1 757.5 L1256.5 808.1" stroke="#b6a897" stroke-width="3.1" opacity="0.34" stroke-linecap="round"/><path d="M1223.7 821.9 L1277.4 866.1" stroke="#b6a897" stroke-width="4.4" opacity="0.14" stroke-linecap="round"/><path d="M1129.3 668.6 L1178.9 699.4" stroke="#85776a" stroke-width="1.5" opacity="0.15" stroke-linecap="round"/><path d="M1270.4 581.7 L1312.7 593.8" stroke="#b6a897" stroke-width="1.6" opacity="0.30" stroke-linecap="round"/><path d="M1203.8 625.0 L1247.0 643.3" stroke="#b6a897" stroke-width="1.3" opacity="0.34" stroke-linecap="round"/><path d="M1015.3 791.4 L1087.2 888.5" stroke="#85776a" stroke-width="2.7" opacity="0.22" stroke-linecap="round"/><path d="M1088.0 606.3 L1124.2 624.8" stroke="#b6a897" stroke-width="1.7" opacity="0.24" stroke-linecap="round"/><path d="M1359.6 713.6 L1426.7 744.5" stroke="#b6a897" stroke-width="3.1" opacity="0.23" stroke-linecap="round"/><path d="M1063.5 728.7 L1084.7 748.6" stroke="#b6a897" stroke-width="2.6" opacity="0.18" stroke-linecap="round"/><path d="M1129.8 841.7 L1188.0 904.3" stroke="#b6a897" stroke-width="3.8" opacity="0.16" stroke-linecap="round"/><path d="M1313.1 572.9 L1335.7 578.5" stroke="#85776a" stroke-width="1.1" opacity="0.28" stroke-linecap="round"/><path d="M1283.8 650.1 L1311.6 661.4" stroke="#85776a" stroke-width="2.8" opacity="0.24" stroke-linecap="round"/><path d="M1270.2 497.0 L1280.0 498.2" stroke="#85776a" stroke-width="0.8" opacity="0.27" stroke-linecap="round"/><path d="M1125.6 481.3 L1140.9 483.3" stroke="#85776a" stroke-width="0.6" opacity="0.15" stroke-linecap="round"/><path d="M1258.2 616.9 L1288.1 627.8" stroke="#85776a" stroke-width="1.4" opacity="0.19" stroke-linecap="round"/><path d="M1256.7 544.2 L1280.6 549.5" stroke="#b6a897" stroke-width="1.1" opacity="0.23" stroke-linecap="round"/><path d="M1466.1 558.3 L1479.1 560.6" stroke="#85776a" stroke-width="0.9" opacity="0.18" stroke-linecap="round"/><path d="M1424.0 556.9 L1442.4 560.2" stroke="#b6a897" stroke-width="1.2" opacity="0.15" stroke-linecap="round"/><path d="M1064.8 638.8 L1102.6 663.4" stroke="#b6a897" stroke-width="2.4" opacity="0.35" stroke-linecap="round"/><path d="M1230.3 515.9 L1250.1 519.3" stroke="#b6a897" stroke-width="0.7" opacity="0.24" stroke-linecap="round"/><path d="M1031.7 807.9 L1072.7 862.4" stroke="#b6a897" stroke-width="4.2" opacity="0.24" stroke-linecap="round"/><path d="M1355.2 812.0 L1414.3 849.1" stroke="#b6a897" stroke-width="4.2" opacity="0.15" stroke-linecap="round"/><path d="M1373.8 816.2 L1476.8 879.4" stroke="#b6a897" stroke-width="2.8" opacity="0.13" stroke-linecap="round"/><path d="M1144.2 667.4 L1186.2 692.4" stroke="#b6a897" stroke-width="1.9" opacity="0.22" stroke-linecap="round"/><path d="M1314.1 775.6 L1357.5 801.9" stroke="#85776a" stroke-width="2.3" opacity="0.17" stroke-linecap="round"/><path d="M1236.1 637.5 L1287.9 659.3" stroke="#85776a" stroke-width="2.8" opacity="0.16" stroke-linecap="round"/><path d="M1002.0 667.8 L1044.6 707.6" stroke="#b6a897" stroke-width="1.3" opacity="0.26" stroke-linecap="round"/><path d="M1481.1 627.0 L1509.9 634.6" stroke="#85776a" stroke-width="1.0" opacity="0.15" stroke-linecap="round"/><path d="M1350.5 766.3 L1399.4 793.4" stroke="#85776a" stroke-width="4.2" opacity="0.15" stroke-linecap="round"/><path d="M1243.1 692.7 L1308.4 727.1" stroke="#b6a897" stroke-width="2.0" opacity="0.27" stroke-linecap="round"/><path d="M1277.9 748.9 L1313.4 770.2" stroke="#b6a897" stroke-width="3.1" opacity="0.12" stroke-linecap="round"/><path d="M1156.8 604.0 L1179.0 613.4" stroke="#b6a897" stroke-width="2.0" opacity="0.15" stroke-linecap="round"/><path d="M1428.0 759.3 L1455.4 772.5" stroke="#b6a897" stroke-width="1.6" opacity="0.33" stroke-linecap="round"/><path d="M1242.2 690.3 L1283.5 711.9" stroke="#b6a897" stroke-width="2.5" opacity="0.26" stroke-linecap="round"/><path d="M1202.3 754.0 L1284.9 812.7" stroke="#b6a897" stroke-width="3.9" opacity="0.19" stroke-linecap="round"/><path d="M1471.6 592.2 L1508.3 600.2" stroke="#b6a897" stroke-width="0.9" opacity="0.22" stroke-linecap="round"/><path d="M1121.4 696.9 L1190.6 746.1" stroke="#b6a897" stroke-width="2.5" opacity="0.18" stroke-linecap="round"/><path d="M1248.5 816.9 L1315.9 868.7" stroke="#b6a897" stroke-width="3.4" opacity="0.26" stroke-linecap="round"/><path d="M1173.5 682.2 L1215.4 706.8" stroke="#85776a" stroke-width="1.8" opacity="0.15" stroke-linecap="round"/><path d="M1192.5 501.9 L1198.1 502.8" stroke="#85776a" stroke-width="0.7" opacity="0.28" stroke-linecap="round"/><path d="M1134.0 596.2 L1166.6 610.1" stroke="#b6a897" stroke-width="1.2" opacity="0.19" stroke-linecap="round"/><path d="M1029.4 841.3 L1050.7 872.5" stroke="#b6a897" stroke-width="5.1" opacity="0.18" stroke-linecap="round"/><path d="M1167.9 722.6 L1218.0 757.3" stroke="#b6a897" stroke-width="2.1" opacity="0.28" stroke-linecap="round"/><path d="M1113.3 795.8 L1172.6 855.0" stroke="#b6a897" stroke-width="3.7" opacity="0.24" stroke-linecap="round"/><path d="M1433.5 816.1 L1494.3 850.1" stroke="#b6a897" stroke-width="3.2" opacity="0.26" stroke-linecap="round"/><path d="M1366.6 682.1 L1420.0 703.7" stroke="#b6a897" stroke-width="2.3" opacity="0.18" stroke-linecap="round"/><path d="M1004.3 614.5 L1044.1 642.9" stroke="#b6a897" stroke-width="2.3" opacity="0.35" stroke-linecap="round"/><path d="M1053.2 767.2 L1089.7 807.5" stroke="#85776a" stroke-width="4.4" opacity="0.28" stroke-linecap="round"/><path d="M1074.9 787.4 L1106.6 821.9" stroke="#b6a897" stroke-width="4.0" opacity="0.13" stroke-linecap="round"/><path d="M1080.7 671.0 L1140.3 713.9" stroke="#85776a" stroke-width="2.4" opacity="0.18" stroke-linecap="round"/><path d="M1448.9 474.0 L1460.9 474.7" stroke="#85776a" stroke-width="0.6" opacity="0.29" stroke-linecap="round"/><path d="M1313.7 576.1 L1351.0 585.6" stroke="#85776a" stroke-width="1.4" opacity="0.15" stroke-linecap="round"/><path d="M1059.6 756.3 L1099.2 797.6" stroke="#85776a" stroke-width="4.3" opacity="0.13" stroke-linecap="round"/><path d="M1154.0 719.2 L1221.4 767.0" stroke="#b6a897" stroke-width="2.4" opacity="0.32" stroke-linecap="round"/><path d="M1272.4 542.7 L1292.5 546.9" stroke="#b6a897" stroke-width="0.6" opacity="0.20" stroke-linecap="round"/><path d="M1017.0 695.4 L1081.0 758.3" stroke="#b6a897" stroke-width="3.8" opacity="0.15" stroke-linecap="round"/><path d="M1219.7 732.3 L1270.3 764.5" stroke="#85776a" stroke-width="2.1" opacity="0.27" stroke-linecap="round"/><path d="M1344.9 708.2 L1412.0 739.2" stroke="#b6a897" stroke-width="2.3" opacity="0.19" stroke-linecap="round"/><path d="M1192.2 722.4 L1261.4 767.8" stroke="#85776a" stroke-width="2.2" opacity="0.12" stroke-linecap="round"/><path d="M1120.9 486.1 L1125.1 486.7" stroke="#85776a" stroke-width="0.6" opacity="0.28" stroke-linecap="round"/><path d="M1490.1 487.7 L1495.5 488.1" stroke="#85776a" stroke-width="0.6" opacity="0.15" stroke-linecap="round"/><path d="M1181.1 720.0 L1200.5 732.9" stroke="#b6a897" stroke-width="1.7" opacity="0.29" stroke-linecap="round"/><path d="M1102.7 842.3 L1180.2 932.3" stroke="#b6a897" stroke-width="3.4" opacity="0.19" stroke-linecap="round"/><path d="M1445.1 638.8 L1472.5 647.0" stroke="#b6a897" stroke-width="1.7" opacity="0.23" stroke-linecap="round"/><path d="M1251.8 793.8 L1301.0 829.1" stroke="#b6a897" stroke-width="4.1" opacity="0.21" stroke-linecap="round"/><path d="M1027.7 836.4 L1100.4 941.9" stroke="#b6a897" stroke-width="4.9" opacity="0.23" stroke-linecap="round"/><path d="M1014.5 752.3 L1067.8 816.7" stroke="#85776a" stroke-width="4.2" opacity="0.25" stroke-linecap="round"/><path d="M1224.6 738.9 L1297.1 785.5" stroke="#85776a" stroke-width="2.9" opacity="0.20" stroke-linecap="round"/><path d="M1075.6 762.8 L1122.1 809.8" stroke="#85776a" stroke-width="4.1" opacity="0.27" stroke-linecap="round"/><path d="M1173.5 608.8 L1215.2 626.1" stroke="#85776a" stroke-width="1.7" opacity="0.13" stroke-linecap="round"/><path d="M1414.8 636.8 L1479.3 656.6" stroke="#b6a897" stroke-width="2.3" opacity="0.28" stroke-linecap="round"/><path d="M1082.4 835.9 L1112.0 871.8" stroke="#85776a" stroke-width="4.9" opacity="0.20" stroke-linecap="round"/><path d="M1438.3 632.7 L1483.2 645.7" stroke="#85776a" stroke-width="1.4" opacity="0.19" stroke-linecap="round"/><path d="M1218.8 687.9 L1269.8 715.7" stroke="#85776a" stroke-width="1.4" opacity="0.27" stroke-linecap="round"/><path d="M1101.9 587.6 L1119.1 595.1" stroke="#b6a897" stroke-width="2.0" opacity="0.22" stroke-linecap="round"/><path d="M1173.1 599.1 L1220.3 617.7" stroke="#b6a897" stroke-width="2.2" opacity="0.33" stroke-linecap="round"/><path d="M1041.3 721.2 L1110.9 790.0" stroke="#b6a897" stroke-width="2.0" opacity="0.21" stroke-linecap="round"/><path d="M1332.3 485.1 L1339.4 485.7" stroke="#85776a" stroke-width="0.6" opacity="0.23" stroke-linecap="round"/><path d="M1030.1 643.8 L1055.4 662.9" stroke="#b6a897" stroke-width="1.6" opacity="0.31" stroke-linecap="round"/><path d="M1082.4 841.8 L1116.7 884.0" stroke="#85776a" stroke-width="3.4" opacity="0.14" stroke-linecap="round"/><path d="M1000.5 757.4 L1044.8 814.8" stroke="#85776a" stroke-width="2.0" opacity="0.16" stroke-linecap="round"/><path d="M1442.8 655.3 L1498.7 673.2" stroke="#b6a897" stroke-width="1.9" opacity="0.18" stroke-linecap="round"/><path d="M1310.5 546.1 L1340.3 552.1" stroke="#b6a897" stroke-width="1.2" opacity="0.29" stroke-linecap="round"/><path d="M1453.3 604.4 L1497.1 615.1" stroke="#b6a897" stroke-width="2.0" opacity="0.34" stroke-linecap="round"/><path d="M1456.1 660.6 L1496.9 673.8" stroke="#85776a" stroke-width="3.0" opacity="0.20" stroke-linecap="round"/><path d="M1250.0 688.1 L1317.8 722.7" stroke="#85776a" stroke-width="3.2" opacity="0.24" stroke-linecap="round"/><path d="M1202.5 684.3 L1225.8 697.3" stroke="#b6a897" stroke-width="3.2" opacity="0.29" stroke-linecap="round"/><path d="M1043.9 695.7 L1075.5 724.0" stroke="#85776a" stroke-width="2.1" opacity="0.18" stroke-linecap="round"/><path d="M1210.1 620.6 L1226.4 627.3" stroke="#b6a897" stroke-width="1.1" opacity="0.25" stroke-linecap="round"/><path d="M1225.1 564.8 L1246.3 570.7" stroke="#85776a" stroke-width="1.2" opacity="0.25" stroke-linecap="round"/><path d="M1268.8 822.2 L1374.3 901.4" stroke="#b6a897" stroke-width="4.9" opacity="0.25" stroke-linecap="round"/><path d="M1183.9 751.1 L1208.7 769.2" stroke="#b6a897" stroke-width="2.8" opacity="0.28" stroke-linecap="round"/><path d="M1414.3 486.6 L1419.0 487.0" stroke="#85776a" stroke-width="0.6" opacity="0.16" stroke-linecap="round"/><path d="M1299.1 563.2 L1331.4 570.9" stroke="#b6a897" stroke-width="1.6" opacity="0.13" stroke-linecap="round"/><path d="M1058.1 485.5 L1063.7 486.4" stroke="#85776a" stroke-width="0.6" opacity="0.13" stroke-linecap="round"/><path d="M1164.4 802.1 L1220.7 852.4" stroke="#85776a" stroke-width="4.4" opacity="0.20" stroke-linecap="round"/><path d="M1244.6 486.4 L1260.8 488.2" stroke="#85776a" stroke-width="0.6" opacity="0.23" stroke-linecap="round"/><path d="M1233.4 668.4 L1284.5 693.3" stroke="#b6a897" stroke-width="2.6" opacity="0.35" stroke-linecap="round"/><path d="M1364.9 844.3 L1453.1 903.3" stroke="#85776a" stroke-width="5.0" opacity="0.14" stroke-linecap="round"/><path d="M1216.9 814.0 L1241.3 833.9" stroke="#85776a" stroke-width="4.3" opacity="0.15" stroke-linecap="round"/><path d="M1073.2 812.5 L1148.9 901.4" stroke="#b6a897" stroke-width="2.9" opacity="0.21" stroke-linecap="round"/><path d="M1317.3 692.0 L1379.1 720.2" stroke="#b6a897" stroke-width="1.8" opacity="0.16" stroke-linecap="round"/><path d="M1385.9 571.1 L1401.2 574.5" stroke="#85776a" stroke-width="1.1" opacity="0.22" stroke-linecap="round"/><path d="M1176.6 539.5 L1210.1 547.9" stroke="#b6a897" stroke-width="0.9" opacity="0.13" stroke-linecap="round"/><path d="M1055.8 573.4 L1086.0 587.3" stroke="#85776a" stroke-width="0.9" opacity="0.13" stroke-linecap="round"/><path d="M1311.2 768.0 L1354.9 794.1" stroke="#85776a" stroke-width="2.5" opacity="0.21" stroke-linecap="round"/><path d="M1071.7 699.3 L1095.7 719.2" stroke="#85776a" stroke-width="2.7" opacity="0.23" stroke-linecap="round"/><path d="M1062.3 542.1 L1071.9 545.5" stroke="#b6a897" stroke-width="1.3" opacity="0.12" stroke-linecap="round"/><path d="M1311.7 615.9 L1334.5 623.3" stroke="#85776a" stroke-width="2.2" opacity="0.21" stroke-linecap="round"/><path d="M1075.9 684.6 L1145.1 738.1" stroke="#85776a" stroke-width="2.6" opacity="0.25" stroke-linecap="round"/><path d="M1340.6 481.3 L1354.1 482.4" stroke="#85776a" stroke-width="0.6" opacity="0.11" stroke-linecap="round"/><path d="M1402.9 805.2 L1450.1 832.1" stroke="#b6a897" stroke-width="4.8" opacity="0.15" stroke-linecap="round"/><path d="M1009.0 815.7 L1044.2 867.8" stroke="#85776a" stroke-width="2.6" opacity="0.20" stroke-linecap="round"/><path d="M1480.0 489.0 L1487.1 489.5" stroke="#85776a" stroke-width="0.6" opacity="0.28" stroke-linecap="round"/><path d="M1227.0 688.7 L1289.3 722.1" stroke="#85776a" stroke-width="2.6" opacity="0.13" stroke-linecap="round"/><path d="M1292.4 786.8 L1351.0 825.0" stroke="#85776a" stroke-width="4.8" opacity="0.25" stroke-linecap="round"/><path d="M1180.9 535.9 L1204.3 541.5" stroke="#b6a897" stroke-width="0.7" opacity="0.36" stroke-linecap="round"/><path d="M1345.7 731.2 L1384.6 750.7" stroke="#b6a897" stroke-width="3.4" opacity="0.23" stroke-linecap="round"/><path d="M1317.3 699.6 L1351.0 715.4" stroke="#85776a" stroke-width="1.4" opacity="0.21" stroke-linecap="round"/><path d="M1411.3 728.7 L1450.3 746.2" stroke="#85776a" stroke-width="1.8" opacity="0.13" stroke-linecap="round"/><path d="M1237.9 573.9 L1271.6 583.6" stroke="#85776a" stroke-width="0.8" opacity="0.19" stroke-linecap="round"/><path d="M1080.1 671.2 L1128.8 706.5" stroke="#b6a897" stroke-width="2.4" opacity="0.35" stroke-linecap="round"/><path d="M1040.6 712.6 L1084.3 754.6" stroke="#85776a" stroke-width="2.1" opacity="0.12" stroke-linecap="round"/><path d="M1314.8 748.9 L1355.4 771.6" stroke="#b6a897" stroke-width="2.2" opacity="0.25" stroke-linecap="round"/><path d="M1099.9 730.4 L1176.1 795.3" stroke="#b6a897" stroke-width="3.5" opacity="0.15" stroke-linecap="round"/><path d="M1020.9 644.8 L1042.9 661.9" stroke="#85776a" stroke-width="2.5" opacity="0.14" stroke-linecap="round"/><path d="M1474.4 610.9 L1494.6 615.9" stroke="#b6a897" stroke-width="1.5" opacity="0.13" stroke-linecap="round"/><path d="M1038.1 692.5 L1069.1 720.5" stroke="#b6a897" stroke-width="2.0" opacity="0.23" stroke-linecap="round"/><path d="M1166.8 591.4 L1189.3 599.9" stroke="#85776a" stroke-width="1.0" opacity="0.24" stroke-linecap="round"/><path d="M1123.1 614.6 L1137.2 621.5" stroke="#85776a" stroke-width="2.1" opacity="0.15" stroke-linecap="round"/><path d="M1449.0 806.8 L1521.4 845.5" stroke="#b6a897" stroke-width="2.1" opacity="0.30" stroke-linecap="round"/><path d="M1152.0 476.6 L1164.2 478.0" stroke="#85776a" stroke-width="0.6" opacity="0.30" stroke-linecap="round"/><path d="M1092.1 554.0 L1121.1 564.3" stroke="#b6a897" stroke-width="1.6" opacity="0.12" stroke-linecap="round"/><path d="M1117.6 477.9 L1128.3 479.2" stroke="#85776a" stroke-width="0.6" opacity="0.23" stroke-linecap="round"/><path d="M1002.9 718.3 L1065.4 788.8" stroke="#85776a" stroke-width="2.3" opacity="0.26" stroke-linecap="round"/><path d="M1309.8 693.2 L1331.3 703.2" stroke="#85776a" stroke-width="2.6" opacity="0.26" stroke-linecap="round"/><path d="M1295.9 773.0 L1367.1 817.3" stroke="#b6a897" stroke-width="4.7" opacity="0.29" stroke-linecap="round"/><path d="M1001.3 604.4 L1050.7 638.0" stroke="#85776a" stroke-width="1.0" opacity="0.22" stroke-linecap="round"/><path d="M1212.8 867.2 L1254.6 906.3" stroke="#85776a" stroke-width="2.2" opacity="0.17" stroke-linecap="round"/><path d="M1125.1 605.5 L1173.1 627.6" stroke="#b6a897" stroke-width="2.4" opacity="0.17" stroke-linecap="round"/><path d="M1076.3 741.6 L1121.2 784.0" stroke="#85776a" stroke-width="2.9" opacity="0.26" stroke-linecap="round"/><path d="M1388.8 559.0 L1421.8 565.5" stroke="#85776a" stroke-width="1.3" opacity="0.12" stroke-linecap="round"/><path d="M1457.8 797.1 L1502.4 820.1" stroke="#b6a897" stroke-width="3.9" opacity="0.33" stroke-linecap="round"/><path d="M1114.2 526.1 L1122.5 528.2" stroke="#85776a" stroke-width="1.0" opacity="0.24" stroke-linecap="round"/><path d="M1319.0 537.8 L1333.8 540.6" stroke="#b6a897" stroke-width="0.9" opacity="0.35" stroke-linecap="round"/><path d="M1390.8 549.5 L1400.9 551.3" stroke="#b6a897" stroke-width="0.7" opacity="0.14" stroke-linecap="round"/><path d="M1424.7 811.0 L1468.4 835.5" stroke="#b6a897" stroke-width="4.1" opacity="0.35" stroke-linecap="round"/><path d="M1165.7 661.1 L1227.6 695.0" stroke="#b6a897" stroke-width="1.7" opacity="0.21" stroke-linecap="round"/><path d="M1395.4 633.1 L1446.7 649.0" stroke="#b6a897" stroke-width="1.3" opacity="0.36" stroke-linecap="round"/><path d="M1265.4 629.5 L1310.2 646.6" stroke="#85776a" stroke-width="2.2" opacity="0.18" stroke-linecap="round"/><path d="M1312.0 542.7 L1329.0 546.0" stroke="#85776a" stroke-width="1.3" opacity="0.25" stroke-linecap="round"/><path d="M1422.8 535.2 L1451.1 539.5" stroke="#85776a" stroke-width="0.8" opacity="0.14" stroke-linecap="round"/><path d="M1473.2 554.5 L1506.4 560.0" stroke="#85776a" stroke-width="0.6" opacity="0.21" stroke-linecap="round"/><path d="M1255.9 648.5 L1314.4 673.4" stroke="#85776a" stroke-width="2.7" opacity="0.29" stroke-linecap="round"/><path d="M1233.9 657.4 L1257.3 668.2" stroke="#85776a" stroke-width="1.5" opacity="0.16" stroke-linecap="round"/><path d="M1128.3 688.1 L1159.3 709.0" stroke="#85776a" stroke-width="1.5" opacity="0.28" stroke-linecap="round"/><path d="M1226.3 649.3 L1247.9 659.1" stroke="#85776a" stroke-width="2.9" opacity="0.26" stroke-linecap="round"/><path d="M1153.1 487.5 L1163.7 488.9" stroke="#b6a897" stroke-width="0.6" opacity="0.26" stroke-linecap="round"/><path d="M1035.7 746.8 L1068.4 782.7" stroke="#85776a" stroke-width="2.3" opacity="0.18" stroke-linecap="round"/><path d="M1078.1 514.5 L1085.3 516.2" stroke="#b6a897" stroke-width="0.6" opacity="0.35" stroke-linecap="round"/><path d="M1089.7 699.6 L1140.0 739.0" stroke="#85776a" stroke-width="2.5" opacity="0.26" stroke-linecap="round"/><path d="M1160.8 578.3 L1172.9 582.5" stroke="#b6a897" stroke-width="1.0" opacity="0.24" stroke-linecap="round"/><path d="M1235.3 762.7 L1275.0 789.7" stroke="#b6a897" stroke-width="2.6" opacity="0.19" stroke-linecap="round"/><path d="M1016.1 672.0 L1048.0 700.7" stroke="#85776a" stroke-width="1.4" opacity="0.21" stroke-linecap="round"/><path d="M1386.6 820.8 L1491.1 884.4" stroke="#85776a" stroke-width="3.5" opacity="0.27" stroke-linecap="round"/><path d="M1198.4 519.3 L1206.1 520.8" stroke="#b6a897" stroke-width="1.0" opacity="0.34" stroke-linecap="round"/><path d="M1407.7 545.7 L1435.4 550.4" stroke="#85776a" stroke-width="1.1" opacity="0.26" stroke-linecap="round"/><path d="M1440.6 657.6 L1507.6 679.5" stroke="#b6a897" stroke-width="1.8" opacity="0.22" stroke-linecap="round"/><path d="M1399.3 829.9 L1460.5 867.3" stroke="#85776a" stroke-width="3.2" opacity="0.23" stroke-linecap="round"/><path d="M1290.2 733.9 L1345.9 764.9" stroke="#85776a" stroke-width="3.3" opacity="0.20" stroke-linecap="round"/><path d="M1330.6 740.3 L1409.7 782.2" stroke="#b6a897" stroke-width="2.2" opacity="0.35" stroke-linecap="round"/><path d="M1397.3 723.1 L1430.7 738.1" stroke="#85776a" stroke-width="1.9" opacity="0.21" stroke-linecap="round"/><path d="M1142.8 802.7 L1233.2 887.7" stroke="#85776a" stroke-width="4.8" opacity="0.11" stroke-linecap="round"/><path d="M1215.1 849.0 L1304.8 929.2" stroke="#85776a" stroke-width="5.4" opacity="0.10" stroke-linecap="round"/><path d="M1437.0 817.1 L1497.2 850.8" stroke="#85776a" stroke-width="4.1" opacity="0.29" stroke-linecap="round"/><path d="M1456.3 713.6 L1522.4 739.9" stroke="#85776a" stroke-width="2.3" opacity="0.20" stroke-linecap="round"/><path d="M1243.6 808.2 L1309.2 858.0" stroke="#85776a" stroke-width="2.6" opacity="0.15" stroke-linecap="round"/><path d="M1222.8 589.9 L1270.2 605.6" stroke="#85776a" stroke-width="1.1" opacity="0.25" stroke-linecap="round"/><path d="M1112.0 840.1 L1154.3 887.7" stroke="#85776a" stroke-width="3.5" opacity="0.12" stroke-linecap="round"/><path d="M1123.4 691.6 L1152.6 711.7" stroke="#85776a" stroke-width="3.1" opacity="0.21" stroke-linecap="round"/><path d="M1334.7 724.7 L1418.1 766.3" stroke="#85776a" stroke-width="4.0" opacity="0.25" stroke-linecap="round"/><path d="M1074.0 480.0 L1080.5 480.9" stroke="#85776a" stroke-width="0.6" opacity="0.15" stroke-linecap="round"/><path d="M1365.4 792.4 L1429.7 830.0" stroke="#b6a897" stroke-width="3.5" opacity="0.26" stroke-linecap="round"/><path d="M1236.4 501.8 L1244.9 503.0" stroke="#b6a897" stroke-width="0.6" opacity="0.17" stroke-linecap="round"/><path d="M1280.0 599.4 L1318.6 611.6" stroke="#85776a" stroke-width="1.2" opacity="0.20" stroke-linecap="round"/><path d="M1008.6 809.3 L1079.0 911.7" stroke="#b6a897" stroke-width="4.0" opacity="0.21" stroke-linecap="round"/><path d="M1017.7 728.3 L1044.6 758.0" stroke="#85776a" stroke-width="3.1" opacity="0.20" stroke-linecap="round"/><path d="M1248.0 848.6 L1330.0 917.0" stroke="#85776a" stroke-width="4.2" opacity="0.30" stroke-linecap="round"/><path d="M1017.1 619.6 L1045.8 639.7" stroke="#85776a" stroke-width="1.6" opacity="0.19" stroke-linecap="round"/><path d="M1464.9 499.9 L1478.4 501.2" stroke="#b6a897" stroke-width="0.6" opacity="0.26" stroke-linecap="round"/><path d="M1390.7 628.0 L1426.3 638.9" stroke="#b6a897" stroke-width="2.5" opacity="0.29" stroke-linecap="round"/><path d="M1341.7 535.5 L1374.1 541.1" stroke="#85776a" stroke-width="1.2" opacity="0.16" stroke-linecap="round"/><path d="M1333.7 470.5 L1344.7 471.2" stroke="#b6a897" stroke-width="0.6" opacity="0.25" stroke-linecap="round"/><path d="M1243.6 751.6 L1321.2 801.7" stroke="#85776a" stroke-width="2.1" opacity="0.23" stroke-linecap="round"/><path d="M1280.2 497.6 L1299.6 500.0" stroke="#b6a897" stroke-width="0.6" opacity="0.29" stroke-linecap="round"/><path d="M1442.7 820.7 L1525.0 866.7" stroke="#85776a" stroke-width="4.0" opacity="0.19" stroke-linecap="round"/><path d="M1149.8 701.1 L1214.5 744.4" stroke="#85776a" stroke-width="2.7" opacity="0.20" stroke-linecap="round"/><path d="M1380.5 747.4 L1462.2 788.2" stroke="#85776a" stroke-width="3.6" opacity="0.10" stroke-linecap="round"/><path d="M1052.1 518.3 L1068.8 523.1" stroke="#85776a" stroke-width="0.6" opacity="0.25" stroke-linecap="round"/><path d="M1422.0 649.5 L1456.4 660.5" stroke="#85776a" stroke-width="1.9" opacity="0.13" stroke-linecap="round"/><path d="M1067.6 702.6 L1091.3 722.7" stroke="#b6a897" stroke-width="2.0" opacity="0.35" stroke-linecap="round"/><path d="M1116.7 554.9 L1154.4 567.5" stroke="#b6a897" stroke-width="1.2" opacity="0.36" stroke-linecap="round"/><path d="M1100.5 716.2 L1177.0 777.9" stroke="#85776a" stroke-width="3.8" opacity="0.29" stroke-linecap="round"/><path d="M1108.5 723.8 L1154.2 760.9" stroke="#b6a897" stroke-width="2.2" opacity="0.22" stroke-linecap="round"/><path d="M1441.2 505.4 L1452.5 506.6" stroke="#b6a897" stroke-width="0.6" opacity="0.15" stroke-linecap="round"/><path d="M1220.3 716.3 L1246.4 732.0" stroke="#b6a897" stroke-width="3.7" opacity="0.13" stroke-linecap="round"/><path d="M1283.3 814.7 L1375.9 881.0" stroke="#85776a" stroke-width="4.6" opacity="0.16" stroke-linecap="round"/><path d="M1392.9 539.7 L1425.8 545.1" stroke="#b6a897" stroke-width="1.0" opacity="0.35" stroke-linecap="round"/><path d="M1215.3 680.2 L1247.7 697.4" stroke="#85776a" stroke-width="3.3" opacity="0.14" stroke-linecap="round"/><path d="M1018.7 807.7 L1047.1 847.3" stroke="#85776a" stroke-width="3.6" opacity="0.18" stroke-linecap="round"/><path d="M1338.7 480.5 L1343.2 480.8" stroke="#85776a" stroke-width="0.6" opacity="0.24" stroke-linecap="round"/><path d="M1280.9 560.1 L1291.4 562.6" stroke="#85776a" stroke-width="1.2" opacity="0.28" stroke-linecap="round"/><path d="M1146.0 546.7 L1178.5 556.0" stroke="#85776a" stroke-width="0.6" opacity="0.20" stroke-linecap="round"/><path d="M1086.5 585.7 L1114.9 598.7" stroke="#85776a" stroke-width="0.8" opacity="0.16" stroke-linecap="round"/><path d="M1122.2 617.9 L1165.6 639.4" stroke="#b6a897" stroke-width="1.6" opacity="0.26" stroke-linecap="round"/><path d="M1435.2 753.5 L1499.4 783.6" stroke="#b6a897" stroke-width="3.5" opacity="0.14" stroke-linecap="round"/><path d="M1260.6 810.6 L1287.1 830.2" stroke="#b6a897" stroke-width="4.2" opacity="0.35" stroke-linecap="round"/><path d="M1217.6 633.0 L1274.6 657.4" stroke="#b6a897" stroke-width="2.6" opacity="0.23" stroke-linecap="round"/><path d="M1343.1 640.6 L1403.3 661.7" stroke="#b6a897" stroke-width="1.9" opacity="0.25" stroke-linecap="round"/><path d="M1107.0 690.4 L1138.3 712.9" stroke="#b6a897" stroke-width="1.8" opacity="0.13" stroke-linecap="round"/><path d="M1101.0 556.2 L1134.2 567.8" stroke="#85776a" stroke-width="1.3" opacity="0.12" stroke-linecap="round"/><path d="M1345.5 736.0 L1411.2 769.4" stroke="#b6a897" stroke-width="3.4" opacity="0.13" stroke-linecap="round"/><path d="M1419.1 793.8 L1457.0 814.2" stroke="#b6a897" stroke-width="2.9" opacity="0.35" stroke-linecap="round"/><path d="M1405.8 802.5 L1443.4 823.7" stroke="#b6a897" stroke-width="4.6" opacity="0.17" stroke-linecap="round"/><path d="M1357.8 819.6 L1463.1 886.6" stroke="#85776a" stroke-width="5.1" opacity="0.13" stroke-linecap="round"/><path d="M1082.6 786.6 L1123.6 830.3" stroke="#b6a897" stroke-width="4.2" opacity="0.22" stroke-linecap="round"/><path d="M1322.6 632.4 L1385.4 654.3" stroke="#85776a" stroke-width="2.1" opacity="0.15" stroke-linecap="round"/><path d="M1299.4 545.7 L1327.6 551.5" stroke="#b6a897" stroke-width="0.8" opacity="0.27" stroke-linecap="round"/><path d="M1251.2 699.1 L1294.0 721.9" stroke="#b6a897" stroke-width="1.3" opacity="0.28" stroke-linecap="round"/><path d="M1445.4 819.6 L1528.6 865.9" stroke="#b6a897" stroke-width="2.5" opacity="0.22" stroke-linecap="round"/><path d="M1454.9 863.4 L1491.6 885.8" stroke="#85776a" stroke-width="2.3" opacity="0.24" stroke-linecap="round"/><path d="M1302.1 669.3 L1336.6 684.0" stroke="#85776a" stroke-width="2.4" opacity="0.14" stroke-linecap="round"/><path d="M1116.7 766.2 L1143.0 790.1" stroke="#b6a897" stroke-width="3.5" opacity="0.34" stroke-linecap="round"/><path d="M1349.3 831.6 L1375.6 849.1" stroke="#b6a897" stroke-width="2.4" opacity="0.25" stroke-linecap="round"/><path d="M1008.6 786.0 L1060.7 857.1" stroke="#b6a897" stroke-width="2.0" opacity="0.14" stroke-linecap="round"/><path d="M1355.2 661.1 L1426.1 687.8" stroke="#b6a897" stroke-width="2.7" opacity="0.19" stroke-linecap="round"/><path d="M1254.1 723.4 L1305.7 753.1" stroke="#85776a" stroke-width="3.0" opacity="0.18" stroke-linecap="round"/><path d="M1283.1 761.3 L1377.9 819.6" stroke="#b6a897" stroke-width="4.5" opacity="0.15" stroke-linecap="round"/><path d="M1228.8 666.9 L1288.3 696.0" stroke="#85776a" stroke-width="3.1" opacity="0.10" stroke-linecap="round"/><path d="M1460.7 820.2 L1516.3 850.4" stroke="#85776a" stroke-width="3.9" opacity="0.18" stroke-linecap="round"/><path d="M1312.2 717.4 L1392.0 757.7" stroke="#85776a" stroke-width="2.4" opacity="0.19" stroke-linecap="round"/><path d="M1217.6 840.1 L1318.9 928.2" stroke="#85776a" stroke-width="5.8" opacity="0.25" stroke-linecap="round"/><path d="M1249.4 515.4 L1268.3 518.5" stroke="#b6a897" stroke-width="0.6" opacity="0.29" stroke-linecap="round"/><path d="M1263.9 611.1 L1293.6 621.3" stroke="#85776a" stroke-width="1.1" opacity="0.29" stroke-linecap="round"/><path d="M1244.0 717.0 L1315.4 758.0" stroke="#b6a897" stroke-width="3.6" opacity="0.22" stroke-linecap="round"/><path d="M1164.5 690.5 L1184.9 703.2" stroke="#85776a" stroke-width="3.3" opacity="0.17" stroke-linecap="round"/><path d="M1126.4 787.7 L1211.4 867.9" stroke="#85776a" stroke-width="1.9" opacity="0.19" stroke-linecap="round"/><path d="M1360.4 718.2 L1440.9 755.8" stroke="#85776a" stroke-width="3.5" opacity="0.30" stroke-linecap="round"/><path d="M1239.5 488.9 L1248.5 489.9" stroke="#85776a" stroke-width="0.6" opacity="0.30" stroke-linecap="round"/><path d="M1136.0 827.1 L1234.7 927.8" stroke="#85776a" stroke-width="4.8" opacity="0.22" stroke-linecap="round"/><path d="M1138.8 551.6 L1168.1 560.5" stroke="#85776a" stroke-width="0.8" opacity="0.10" stroke-linecap="round"/><path d="M1157.6 601.5 L1173.9 608.3" stroke="#85776a" stroke-width="0.9" opacity="0.12" stroke-linecap="round"/><path d="M1119.9 837.1 L1167.7 889.3" stroke="#b6a897" stroke-width="2.2" opacity="0.17" stroke-linecap="round"/><path d="M1187.9 500.5 L1208.2 503.6" stroke="#85776a" stroke-width="0.9" opacity="0.22" stroke-linecap="round"/><path d="M1444.8 499.9 L1462.2 501.6" stroke="#b6a897" stroke-width="0.6" opacity="0.16" stroke-linecap="round"/><path d="M1135.5 659.8 L1179.4 685.7" stroke="#b6a897" stroke-width="1.6" opacity="0.18" stroke-linecap="round"/><path d="M1068.7 475.8 L1080.2 477.3" stroke="#b6a897" stroke-width="0.6" opacity="0.28" stroke-linecap="round"/><path d="M1098.7 572.6 L1122.0 581.9" stroke="#b6a897" stroke-width="1.6" opacity="0.23" stroke-linecap="round"/><path d="M1106.7 698.4 L1178.0 751.6" stroke="#b6a897" stroke-width="2.9" opacity="0.21" stroke-linecap="round"/><path d="M1335.0 701.1 L1387.0 725.0" stroke="#85776a" stroke-width="3.1" opacity="0.26" stroke-linecap="round"/><path d="M1258.5 600.7 L1276.3 606.6" stroke="#b6a897" stroke-width="1.4" opacity="0.13" stroke-linecap="round"/><path d="M1267.0 546.1 L1293.6 552.0" stroke="#b6a897" stroke-width="1.2" opacity="0.29" stroke-linecap="round"/><path d="M1070.8 703.7 L1116.7 742.5" stroke="#85776a" stroke-width="2.0" opacity="0.20" stroke-linecap="round"/><path d="M1201.0 840.6 L1286.9 918.2" stroke="#85776a" stroke-width="4.4" opacity="0.21" stroke-linecap="round"/><path d="M1307.4 864.7 L1360.2 905.6" stroke="#b6a897" stroke-width="5.5" opacity="0.34" stroke-linecap="round"/><path d="M1269.8 804.7 L1330.2 847.9" stroke="#85776a" stroke-width="3.6" opacity="0.27" stroke-linecap="round"/><path d="M1487.8 522.7 L1502.0 524.4" stroke="#b6a897" stroke-width="0.8" opacity="0.19" stroke-linecap="round"/><path d="M1016.6 696.0 L1076.0 754.7" stroke="#b6a897" stroke-width="1.6" opacity="0.33" stroke-linecap="round"/><path d="M1361.1 789.3 L1399.4 811.6" stroke="#85776a" stroke-width="3.5" opacity="0.25" stroke-linecap="round"/><path d="M1097.2 777.3 L1144.9 824.6" stroke="#b6a897" stroke-width="2.0" opacity="0.29" stroke-linecap="round"/><path d="M1305.2 494.2 L1323.0 496.1" stroke="#b6a897" stroke-width="0.6" opacity="0.19" stroke-linecap="round"/><path d="M1054.6 476.1 L1065.8 477.7" stroke="#b6a897" stroke-width="0.6" opacity="0.22" stroke-linecap="round"/><path d="M1406.4 504.2 L1417.4 505.4" stroke="#85776a" stroke-width="0.6" opacity="0.16" stroke-linecap="round"/><path d="M1235.2 653.5 L1280.7 674.2" stroke="#85776a" stroke-width="1.2" opacity="0.28" stroke-linecap="round"/><path d="M1337.5 638.1 L1396.9 658.8" stroke="#b6a897" stroke-width="2.1" opacity="0.17" stroke-linecap="round"/><path d="M1247.1 554.3 L1285.5 563.6" stroke="#85776a" stroke-width="1.6" opacity="0.23" stroke-linecap="round"/><path d="M1181.8 587.9 L1203.2 595.6" stroke="#85776a" stroke-width="2.1" opacity="0.19" stroke-linecap="round"/><path d="M1423.5 505.9 L1430.5 506.6" stroke="#85776a" stroke-width="0.9" opacity="0.15" stroke-linecap="round"/><path d="M1181.4 486.6 L1198.0 488.6" stroke="#85776a" stroke-width="0.6" opacity="0.25" stroke-linecap="round"/><path d="M1363.2 562.3 L1403.6 570.9" stroke="#85776a" stroke-width="1.6" opacity="0.26" stroke-linecap="round"/><path d="M1366.8 781.9 L1435.9 821.0" stroke="#b6a897" stroke-width="2.1" opacity="0.26" stroke-linecap="round"/><path d="M1374.7 668.9 L1401.7 679.1" stroke="#b6a897" stroke-width="1.9" opacity="0.34" stroke-linecap="round"/><path d="M1419.2 868.8 L1472.0 903.2" stroke="#b6a897" stroke-width="3.7" opacity="0.23" stroke-linecap="round"/><path d="M1185.3 501.6 L1206.2 504.9" stroke="#b6a897" stroke-width="0.6" opacity="0.33" stroke-linecap="round"/><path d="M1422.9 672.8 L1497.2 699.3" stroke="#b6a897" stroke-width="1.2" opacity="0.35" stroke-linecap="round"/><path d="M1185.4 597.0 L1203.0 603.6" stroke="#b6a897" stroke-width="2.0" opacity="0.26" stroke-linecap="round"/><path d="M1424.0 709.7 L1477.4 731.6" stroke="#85776a" stroke-width="2.7" opacity="0.17" stroke-linecap="round"/><path d="M1295.9 850.7 L1364.7 903.4" stroke="#b6a897" stroke-width="2.4" opacity="0.13" stroke-linecap="round"/><path d="M1104.5 657.3 L1138.3 678.7" stroke="#85776a" stroke-width="1.5" opacity="0.19" stroke-linecap="round"/><path d="M1130.2 518.0 L1151.5 522.7" stroke="#b6a897" stroke-width="0.6" opacity="0.22" stroke-linecap="round"/><path d="M1380.5 557.1 L1401.1 561.1" stroke="#85776a" stroke-width="1.0" opacity="0.14" stroke-linecap="round"/><path d="M1227.5 838.5 L1286.9 888.9" stroke="#85776a" stroke-width="4.1" opacity="0.13" stroke-linecap="round"/><path d="M1297.9 814.7 L1347.9 849.5" stroke="#85776a" stroke-width="4.8" opacity="0.19" stroke-linecap="round"/><path d="M1405.9 787.2 L1452.1 812.2" stroke="#85776a" stroke-width="4.7" opacity="0.15" stroke-linecap="round"/><path d="M1266.1 674.9 L1313.3 697.0" stroke="#b6a897" stroke-width="2.2" opacity="0.18" stroke-linecap="round"/><path d="M1314.4 641.6 L1374.3 663.8" stroke="#85776a" stroke-width="1.5" opacity="0.19" stroke-linecap="round"/><path d="M1244.1 576.2 L1287.6 588.8" stroke="#b6a897" stroke-width="1.0" opacity="0.33" stroke-linecap="round"/><path d="M1177.5 669.3 L1199.6 681.5" stroke="#b6a897" stroke-width="2.2" opacity="0.21" stroke-linecap="round"/><path d="M1409.8 575.3 L1425.8 578.8" stroke="#b6a897" stroke-width="1.4" opacity="0.24" stroke-linecap="round"/><path d="M1295.2 589.6 L1319.4 596.5" stroke="#b6a897" stroke-width="1.6" opacity="0.31" stroke-linecap="round"/><path d="M1062.3 776.1 L1096.6 813.8" stroke="#b6a897" stroke-width="3.7" opacity="0.33" stroke-linecap="round"/><path d="M1040.7 648.7 L1057.3 661.1" stroke="#b6a897" stroke-width="1.1" opacity="0.20" stroke-linecap="round"/><path d="M1453.6 485.5 L1458.4 485.9" stroke="#b6a897" stroke-width="0.6" opacity="0.28" stroke-linecap="round"/><path d="M1470.2 559.8 L1493.5 563.9" stroke="#85776a" stroke-width="1.5" opacity="0.23" stroke-linecap="round"/><path d="M1022.1 832.9 L1074.6 910.1" stroke="#b6a897" stroke-width="4.2" opacity="0.26" stroke-linecap="round"/><path d="M1072.4 573.8 L1100.6 586.1" stroke="#85776a" stroke-width="0.9" opacity="0.29" stroke-linecap="round"/><path d="M1105.4 542.7 L1131.2 550.7" stroke="#b6a897" stroke-width="1.0" opacity="0.20" stroke-linecap="round"/><path d="M1174.2 754.6 L1263.7 822.4" stroke="#85776a" stroke-width="4.4" opacity="0.17" stroke-linecap="round"/><path d="M1222.5 658.0 L1269.0 680.2" stroke="#85776a" stroke-width="2.5" opacity="0.23" stroke-linecap="round"/><path d="M1196.4 798.8 L1238.1 832.9" stroke="#b6a897" stroke-width="2.6" opacity="0.15" stroke-linecap="round"/><path d="M1150.0 554.3 L1179.1 563.2" stroke="#b6a897" stroke-width="1.4" opacity="0.16" stroke-linecap="round"/><path d="M1024.1 603.1 L1074.0 634.1" stroke="#b6a897" stroke-width="1.6" opacity="0.18" stroke-linecap="round"/><path d="M1077.1 580.6 L1100.7 591.2" stroke="#b6a897" stroke-width="1.6" opacity="0.20" stroke-linecap="round"/><path d="M1139.2 521.3 L1162.4 526.6" stroke="#b6a897" stroke-width="0.6" opacity="0.32" stroke-linecap="round"/><path d="M1007.6 535.5 L1035.1 546.5" stroke="#b6a897" stroke-width="0.6" opacity="0.24" stroke-linecap="round"/><path d="M1291.4 640.2 L1307.1 646.2" stroke="#b6a897" stroke-width="2.3" opacity="0.13" stroke-linecap="round"/><path d="M1413.8 586.2 L1432.4 590.5" stroke="#b6a897" stroke-width="0.9" opacity="0.36" stroke-linecap="round"/><path d="M1097.8 866.0 L1128.3 904.0" stroke="#85776a" stroke-width="2.1" opacity="0.17" stroke-linecap="round"/><path d="M1361.1 858.3 L1404.2 888.3" stroke="#b6a897" stroke-width="3.5" opacity="0.16" stroke-linecap="round"/><path d="M1107.2 493.5 L1116.1 495.0" stroke="#b6a897" stroke-width="0.6" opacity="0.35" stroke-linecap="round"/><path d="M1206.1 657.4 L1250.3 679.2" stroke="#85776a" stroke-width="2.7" opacity="0.28" stroke-linecap="round"/><path d="M1121.0 837.0 L1185.0 906.7" stroke="#85776a" stroke-width="5.6" opacity="0.30" stroke-linecap="round"/><path d="M1330.8 675.6 L1353.4 685.0" stroke="#b6a897" stroke-width="2.0" opacity="0.17" stroke-linecap="round"/><path d="M1176.4 844.8 L1244.5 910.4" stroke="#85776a" stroke-width="5.0" opacity="0.24" stroke-linecap="round"/><path d="M1369.2 765.4 L1415.5 790.2" stroke="#b6a897" stroke-width="2.6" opacity="0.23" stroke-linecap="round"/><path d="M1263.9 656.3 L1319.8 680.7" stroke="#85776a" stroke-width="1.4" opacity="0.13" stroke-linecap="round"/><path d="M1087.5 666.0 L1150.5 709.4" stroke="#85776a" stroke-width="1.6" opacity="0.25" stroke-linecap="round"/><path d="M1049.2 584.2 L1067.5 593.5" stroke="#85776a" stroke-width="1.6" opacity="0.29" stroke-linecap="round"/><path d="M1155.9 532.9 L1175.2 537.6" stroke="#85776a" stroke-width="0.8" opacity="0.12" stroke-linecap="round"/><path d="M1360.3 674.8 L1398.5 689.9" stroke="#b6a897" stroke-width="3.2" opacity="0.21" stroke-linecap="round"/><path d="M1145.0 619.7 L1162.0 627.7" stroke="#b6a897" stroke-width="1.6" opacity="0.31" stroke-linecap="round"/><path d="M1024.4 500.4 L1044.4 505.3" stroke="#b6a897" stroke-width="0.6" opacity="0.33" stroke-linecap="round"/><path d="M1086.5 579.6 L1124.0 595.9" stroke="#b6a897" stroke-width="1.1" opacity="0.12" stroke-linecap="round"/><path d="M1216.2 705.8 L1246.9 723.8" stroke="#b6a897" stroke-width="1.8" opacity="0.34" stroke-linecap="round"/><path d="M1160.1 595.6 L1184.6 605.3" stroke="#85776a" stroke-width="1.3" opacity="0.29" stroke-linecap="round"/><path d="M1189.8 476.5 L1198.9 477.4" stroke="#85776a" stroke-width="0.6" opacity="0.24" stroke-linecap="round"/><path d="M1065.0 632.7 L1119.2 667.1" stroke="#b6a897" stroke-width="1.4" opacity="0.34" stroke-linecap="round"/><path d="M1368.9 538.8 L1397.0 543.6" stroke="#b6a897" stroke-width="0.8" opacity="0.15" stroke-linecap="round"/><path d="M1465.4 679.5 L1514.2 696.3" stroke="#85776a" stroke-width="3.1" opacity="0.23" stroke-linecap="round"/><path d="M1332.4 662.8 L1389.1 685.2" stroke="#b6a897" stroke-width="2.6" opacity="0.17" stroke-linecap="round"/><path d="M1365.3 727.0 L1437.2 761.4" stroke="#b6a897" stroke-width="1.9" opacity="0.12" stroke-linecap="round"/><path d="M1307.3 859.6 L1355.0 896.0" stroke="#85776a" stroke-width="4.3" opacity="0.21" stroke-linecap="round"/><path d="M1381.2 773.1 L1482.5 827.7" stroke="#b6a897" stroke-width="3.7" opacity="0.24" stroke-linecap="round"/><path d="M1022.3 528.8 L1049.9 538.5" stroke="#b6a897" stroke-width="1.3" opacity="0.17" stroke-linecap="round"/><path d="M1096.1 718.2 L1131.6 747.5" stroke="#b6a897" stroke-width="3.4" opacity="0.12" stroke-linecap="round"/><path d="M1322.8 774.5 L1399.3 820.1" stroke="#85776a" stroke-width="2.2" opacity="0.25" stroke-linecap="round"/><path d="M1090.6 551.8 L1112.7 559.5" stroke="#85776a" stroke-width="0.7" opacity="0.13" stroke-linecap="round"/><path d="M1058.7 555.0 L1079.2 563.1" stroke="#85776a" stroke-width="0.9" opacity="0.14" stroke-linecap="round"/><path d="M1041.5 630.9 L1066.7 648.0" stroke="#b6a897" stroke-width="1.0" opacity="0.15" stroke-linecap="round"/><path d="M1062.4 650.9 L1108.6 683.1" stroke="#b6a897" stroke-width="3.0" opacity="0.14" stroke-linecap="round"/><path d="M1083.0 546.5 L1115.6 557.6" stroke="#b6a897" stroke-width="0.6" opacity="0.30" stroke-linecap="round"/><path d="M1197.8 798.6 L1250.8 841.8" stroke="#b6a897" stroke-width="3.0" opacity="0.24" stroke-linecap="round"/><path d="M1191.8 739.9 L1268.2 793.0" stroke="#85776a" stroke-width="3.2" opacity="0.18" stroke-linecap="round"/><path d="M1454.1 566.4 L1465.6 568.6" stroke="#85776a" stroke-width="1.1" opacity="0.22" stroke-linecap="round"/><path d="M1338.1 512.8 L1346.7 514.0" stroke="#85776a" stroke-width="0.6" opacity="0.11" stroke-linecap="round"/><path d="M1012.5 833.4 L1086.1 945.6" stroke="#b6a897" stroke-width="4.8" opacity="0.26" stroke-linecap="round"/><path d="M1209.6 686.6 L1258.3 713.5" stroke="#85776a" stroke-width="2.0" opacity="0.22" stroke-linecap="round"/><path d="M1440.2 778.9 L1537.9 827.9" stroke="#85776a" stroke-width="3.6" opacity="0.21" stroke-linecap="round"/><path d="M1419.2 536.2 L1446.0 540.3" stroke="#85776a" stroke-width="0.8" opacity="0.28" stroke-linecap="round"/><path d="M1036.1 638.0 L1078.5 668.4" stroke="#85776a" stroke-width="1.8" opacity="0.27" stroke-linecap="round"/><path d="M1099.7 554.0 L1123.8 562.3" stroke="#85776a" stroke-width="0.8" opacity="0.19" stroke-linecap="round"/><path d="M1273.0 837.1 L1333.9 884.2" stroke="#b6a897" stroke-width="5.0" opacity="0.34" stroke-linecap="round"/><path d="M1400.3 480.2 L1412.8 481.1" stroke="#b6a897" stroke-width="0.6" opacity="0.28" stroke-linecap="round"/><path d="M1450.5 554.1 L1483.2 559.8" stroke="#b6a897" stroke-width="0.8" opacity="0.17" stroke-linecap="round"/><path d="M1313.3 567.1 L1327.7 570.6" stroke="#b6a897" stroke-width="0.6" opacity="0.27" stroke-linecap="round"/><path d="M1015.4 825.3 L1050.8 877.5" stroke="#b6a897" stroke-width="2.4" opacity="0.31" stroke-linecap="round"/><path d="M1234.4 531.6 L1258.3 536.5" stroke="#85776a" stroke-width="1.0" opacity="0.21" stroke-linecap="round"/><path d="M1043.1 555.6 L1056.2 561.1" stroke="#85776a" stroke-width="1.1" opacity="0.28" stroke-linecap="round"/><path d="M1010.2 583.5 L1042.2 602.1" stroke="#b6a897" stroke-width="1.6" opacity="0.23" stroke-linecap="round"/><path d="M1292.8 817.8 L1396.4 891.2" stroke="#85776a" stroke-width="4.8" opacity="0.19" stroke-linecap="round"/><path d="M1313.1 554.5 L1333.5 559.0" stroke="#85776a" stroke-width="1.1" opacity="0.14" stroke-linecap="round"/><path d="M1347.7 708.2 L1389.0 727.2" stroke="#b6a897" stroke-width="1.6" opacity="0.27" stroke-linecap="round"/><path d="M1380.1 685.4 L1455.4 715.5" stroke="#b6a897" stroke-width="3.0" opacity="0.35" stroke-linecap="round"/><path d="M1253.3 698.6 L1283.6 714.6" stroke="#85776a" stroke-width="2.0" opacity="0.15" stroke-linecap="round"/><path d="M1101.0 582.0 L1115.0 588.0" stroke="#85776a" stroke-width="1.4" opacity="0.26" stroke-linecap="round"/><path d="M1420.5 752.8 L1511.7 796.2" stroke="#b6a897" stroke-width="1.9" opacity="0.34" stroke-linecap="round"/><path d="M1083.4 504.1 L1089.1 505.3" stroke="#b6a897" stroke-width="0.6" opacity="0.33" stroke-linecap="round"/><path d="M1017.5 528.3 L1026.8 531.6" stroke="#85776a" stroke-width="1.2" opacity="0.21" stroke-linecap="round"/><path d="M1201.9 613.0 L1241.9 629.0" stroke="#85776a" stroke-width="2.4" opacity="0.18" stroke-linecap="round"/><path d="M1363.8 752.1 L1431.7 787.4" stroke="#85776a" stroke-width="2.4" opacity="0.15" stroke-linecap="round"/><path d="M1421.8 694.5 L1477.1 716.0" stroke="#85776a" stroke-width="2.6" opacity="0.25" stroke-linecap="round"/><path d="M1209.4 843.2 L1285.9 911.6" stroke="#85776a" stroke-width="4.1" opacity="0.28" stroke-linecap="round"/><path d="M1211.6 499.9 L1231.9 502.8" stroke="#85776a" stroke-width="0.6" opacity="0.14" stroke-linecap="round"/><path d="M1356.8 619.6 L1401.2 633.2" stroke="#b6a897" stroke-width="1.9" opacity="0.21" stroke-linecap="round"/><path d="M1295.8 583.2 L1341.1 595.7" stroke="#b6a897" stroke-width="1.7" opacity="0.32" stroke-linecap="round"/><path d="M1323.1 479.1 L1329.3 479.6" stroke="#b6a897" stroke-width="0.6" opacity="0.31" stroke-linecap="round"/><path d="M1192.1 548.5 L1205.0 551.8" stroke="#b6a897" stroke-width="1.4" opacity="0.25" stroke-linecap="round"/><path d="M1350.8 690.7 L1396.3 710.2" stroke="#b6a897" stroke-width="1.7" opacity="0.31" stroke-linecap="round"/><path d="M1275.9 671.7 L1303.9 684.4" stroke="#85776a" stroke-width="1.6" opacity="0.23" stroke-linecap="round"/><path d="M1129.1 795.5 L1162.6 827.6" stroke="#85776a" stroke-width="3.1" opacity="0.25" stroke-linecap="round"/><path d="M1133.1 569.7 L1156.1 577.9" stroke="#b6a897" stroke-width="1.7" opacity="0.15" stroke-linecap="round"/><path d="M1033.9 525.3 L1055.5 532.3" stroke="#85776a" stroke-width="1.0" opacity="0.16" stroke-linecap="round"/><path d="M1013.9 787.7 L1073.4 867.7" stroke="#b6a897" stroke-width="4.6" opacity="0.20" stroke-linecap="round"/><path d="M1429.7 764.6 L1495.5 796.7" stroke="#b6a897" stroke-width="3.4" opacity="0.34" stroke-linecap="round"/><path d="M1304.4 853.0 L1373.3 905.1" stroke="#85776a" stroke-width="2.5" opacity="0.18" stroke-linecap="round"/><path d="M1234.9 743.8 L1271.3 767.1" stroke="#b6a897" stroke-width="2.0" opacity="0.26" stroke-linecap="round"/><path d="M1089.2 770.0 L1136.1 816.6" stroke="#85776a" stroke-width="2.0" opacity="0.17" stroke-linecap="round"/><path d="M1470.1 583.8 L1485.2 586.9" stroke="#85776a" stroke-width="1.4" opacity="0.28" stroke-linecap="round"/><path d="M1425.0 512.7 L1437.2 514.2" stroke="#85776a" stroke-width="0.6" opacity="0.23" stroke-linecap="round"/></svg><svg style="left:1028px;top:187px;overflow:hidden" width="465" height="699" viewBox="1028 187 465 699">
<g stroke-linecap="round" fill="none">
<path d="M1277 646 L1194.5 886 M1277 646 L1361.5 886 M1277 646 L1269 886 M1277 646 L1284.5 886" stroke="#fbfbf0" stroke-width="1.2"/>
<path d="M1262 665 L1262 886" stroke="#6a5acd" stroke-width="1.1"/>
</g>
<defs><mask id="gu" maskUnits="userSpaceOnUse" x="1150" y="560" width="220" height="120"><rect x="1150" y="560" width="220" height="120" fill="black"/><ellipse cx="1222" cy="607" rx="36" ry="15" fill="white"/><ellipse cx="1302" cy="607" rx="37" ry="15" fill="white"/><ellipse cx="1262" cy="592" rx="38" ry="15" fill="white"/><ellipse cx="1262" cy="625" rx="40" ry="17" fill="white"/><ellipse cx="1222" cy="607" rx="34.4" ry="13.4" fill="black"/><ellipse cx="1302" cy="607" rx="35.4" ry="13.4" fill="black"/><ellipse cx="1262" cy="592" rx="36.4" ry="13.4" fill="black"/><ellipse cx="1262" cy="625" rx="38.4" ry="15.4" fill="black"/></mask><mask id="gl" maskUnits="userSpaceOnUse" x="1150" y="560" width="220" height="120"><rect x="1150" y="560" width="220" height="120" fill="black"/><ellipse cx="1222" cy="624" rx="36" ry="15" fill="white"/><ellipse cx="1302" cy="624" rx="37" ry="15" fill="white"/><ellipse cx="1262" cy="609" rx="38" ry="15" fill="white"/><ellipse cx="1262" cy="642" rx="40" ry="17" fill="white"/><ellipse cx="1222" cy="624" rx="34.4" ry="13.4" fill="black"/><ellipse cx="1302" cy="624" rx="35.4" ry="13.4" fill="black"/><ellipse cx="1262" cy="609" rx="36.4" ry="13.4" fill="black"/><ellipse cx="1262" cy="642" rx="38.4" ry="15.4" fill="black"/></mask></defs><rect x="1150" y="560" width="220" height="120" fill="#e8dec6" mask="url(#gu)"/><rect x="1150" y="560" width="220" height="120" fill="#e8dec6" mask="url(#gl)"/>
<g stroke="#0d0d0d" stroke-width="2">
<path d="M1187 604 v14 M1206 595 v14 M1237 583 v13 M1262 577 v14 M1287 583 v13 M1318 595 v14 M1338 604 v14 M1200 615 v16 M1234 627 v16 M1262 641 v18 M1324 615 v16 M1290 627 v16"/>
</g>
<g stroke="#0e0c0c" stroke-linecap="round" fill="none">
<path d="M1198 612 L1230 603" stroke-width="2.6"/>
<path d="M1294 603 L1327 611" stroke-width="2.6"/>
<path d="M1245 594 L1268 587" stroke-width="3"/>
<path d="M1200 617.5 L1330 617.5" stroke-width="2.2"/>
<path d="M1219 615 L1262 620 L1306 614" stroke-width="3.4"/>
<path d="M1258 598 L1244 607 M1262 604 L1265 640" stroke-width="3"/>
<path d="M1240 628 L1256 633 M1272 630 L1286 627" stroke-width="3.5"/>
</g>
<path d="M1232 624.5 C 1238 634 1250 638 1262 638 C 1274 638 1286 634 1292 626.6" fill="none" stroke="#c73ce0" stroke-width="2.6"/>
<path d="M1240 614 C 1250 611 1258 610 1262 610 C 1270 610 1278 611 1285 614" fill="none" stroke="#a050d0" stroke-width="1.8"/>
<rect x="1252" y="598" width="26" height="12" fill="#5a5a5a" opacity="0.55"/>
<rect x="1262" y="600" width="12" height="6" fill="#d8d8d0" opacity="0.8"/>
<rect x="1252" y="622" width="22" height="20" fill="#1a1010" opacity="0.85"/>
<circle cx="1219" cy="614.7" r="3.2" fill="#b01c1c"/><circle cx="1306.4" cy="613.6" r="3.2" fill="#b01c1c"/>
<circle cx="1261.7" cy="590.7" r="2.8" fill="#b01c1c"/><circle cx="1264" cy="631" r="3.2" fill="#a81818"/><circle cx="1266" cy="640" r="2.4" fill="#901818"/>
<rect x="1233" y="616" width="5" height="3" fill="#d8c820"/><rect x="1285" y="616" width="5" height="3" fill="#d8c820"/><rect x="1256" y="618" width="7" height="4" fill="#d0b820"/>
<rect x="1268" y="588" width="9" height="5" fill="#cdb060"/>
</svg><div class="a" style="left:1027px;top:187px;width:1px;height:699px;background:#141414"></div>
<div class="a" style="left:1493px;top:187px;width:1px;height:699px;background:#141414"></div>
<div class="a" style="left:1028px;top:885px;width:465px;height:1px;background:#1a1a1a"></div>
<div class="a" style="left:1028px;top:886px;width:465px;height:49px;background:#808080;border-radius:0 0 7px 7px"></div>
<div class="a" style="left:1039px;top:899px;width:5px;height:17px;background:#e6e6e6"></div>
<div class="a" style="left:1047px;top:899px;width:5px;height:17px;background:#e6e6e6"></div>
<div class="a" style="left:1066px;top:911px;width:5px;height:2px;background:#333"></div>
<div class="t" style="left:1080.00px;top:902.00px;font-size:12.5px;color:#ececec;font-family:'Liberation Sans',sans-serif;transform:scaleX(0.9650);transform-origin:0 0;">Real Time Factor:</div>
<div class="a" style="left:1183px;top:898px;width:89px;height:18px;background:#707070;border-radius:2px"></div>
<div class="t" style="left:1185.00px;top:902.00px;font-size:12.5px;color:#3c3c3c;font-family:'Liberation Sans',sans-serif;transform:scaleX(0.9370);transform-origin:0 0;">0.94</div>
<div class="t" style="left:1279.50px;top:902.00px;font-size:12.5px;color:#ececec;font-family:'Liberation Sans',sans-serif;transform:scaleX(0.9719);transform-origin:0 0;">Sim Time:</div>
<div class="a" style="left:1340.5px;top:898px;width:108.5px;height:18.5px;background:#707070;border-radius:2px"></div>
<div class="t" style="left:1342.00px;top:902.00px;font-size:12.5px;color:#3c3c3c;font-family:'Liberation Sans',sans-serif;transform:scaleX(0.9704);transform-origin:0 0;">00 00:10:24.100</div>
<div class="t" style="left:1456.00px;top:902.00px;font-size:12.5px;color:#ececec;font-family:'Liberation Sans',sans-serif;transform:scaleX(1.0111);transform-origin:0 0;clip-path:inset(0 0 0 0)">Real T</div>
<div class="a" style="left:1053px;top:924px;width:192px;height:8px;background:#4f4f4f;border-radius:4px"></div>
<svg style="left:1490px;top:938px" width="16" height="16"><rect x="11" y="3" width="1.5" height="1.5" fill="#8c8c8c"/><rect x="8" y="6" width="1.5" height="1.5" fill="#8c8c8c"/><rect x="11" y="6" width="1.5" height="1.5" fill="#8c8c8c"/><rect x="5" y="9" width="1.5" height="1.5" fill="#8c8c8c"/><rect x="8" y="9" width="1.5" height="1.5" fill="#8c8c8c"/><rect x="11" y="9" width="1.5" height="1.5" fill="#8c8c8c"/><rect x="2" y="12" width="1.5" height="1.5" fill="#8c8c8c"/><rect x="5" y="12" width="1.5" height="1.5" fill="#8c8c8c"/><rect x="8" y="12" width="1.5" height="1.5" fill="#8c8c8c"/><rect x="11" y="12" width="1.5" height="1.5" fill="#8c8c8c"/></svg><svg style="left:1028px;top:149px" width="465" height="38" viewBox="1028 149 465 38">
<defs>
<radialGradient id="sph" cx="0.4" cy="0.35" r="0.7"><stop offset="0" stop-color="#f4f4f4"/><stop offset="1" stop-color="#c4c4c4"/></radialGradient>
<linearGradient id="cyl" x1="0" x2="1"><stop offset="0" stop-color="#d8d8d8"/><stop offset="0.5" stop-color="#ececec"/><stop offset="1" stop-color="#cdcdcd"/></linearGradient>
</defs>
<rect x="1040.5" y="151.5" width="28" height="32" rx="6" fill="#3d3d3d"/>
<path d="M1044 158.5 L1057.5 161.5 L1053.5 164.5 L1064.5 173 L1062 176 L1051.5 167 L1048.5 171Z" fill="#dcdcdc"/>
<g fill="#dcdcdc">
<path d="M1087.4 156 L1091.4 160.5 L1088.8 160.5 L1088.8 166 L1094.4 166 L1094.4 163.5 L1099 167.5 L1094.4 171.5 L1094.4 169 L1088.8 169 L1088.8 174.5 L1091.4 174.5 L1087.4 179 L1083.4 174.5 L1086 174.5 L1086 169 L1080.4 169 L1080.4 171.5 L1076 167.5 L1080.4 163.5 L1080.4 166 L1086 166 L1086 160.5 L1083.4 160.5Z"/>
</g>
<path d="M1110.5 170.5 A8.5 8.5 0 0 1 1122 159.5" fill="none" stroke="#dcdcdc" stroke-width="2.2"/>
<path d="M1127 164.5 A8.5 8.5 0 0 1 1115.5 175.5" fill="none" stroke="#dcdcdc" stroke-width="2.2"/>
<path d="M1120 155 L1126 159.5 L1120.5 163Z M1117.5 172 L1111.5 176 L1117 179.5Z" fill="#dcdcdc"/>
<path d="M1152 156.5 L1162.5 156.5 L1162.5 178.5 L1141 178.5 L1141 167" fill="none" stroke="#dcdcdc" stroke-width="1.6"/>
<path d="M1144 175.5 L1160 159.5" stroke="#dcdcdc" stroke-width="3"/>
<path d="M1161.5 157.5 L1161.5 166 L1153 157.5Z M1142 176.5 L1142 168 L1150.5 176.5Z" fill="#dcdcdc"/>
<rect x="1171.5" y="155" width="2" height="25" fill="#f2f2f2"/>
<path d="M1180 166 L1187.5 159.5 L1187.5 163 Q1199 163 1201 175 Q1196 168.5 1187.5 169 L1187.5 172.5Z" fill="#9c9c9c"/>
<path d="M1219 166 L1225 166 L1222 169Z" fill="#9c9c9c"/>
<path d="M1266 166 L1258.5 159.5 L1258.5 163 Q1247 163 1245 175 Q1250 168.5 1258.5 169 L1258.5 172.5Z" fill="#9c9c9c"/>
<path d="M1282 166 L1288 166 L1285 169Z" fill="#9c9c9c"/>
<rect x="1306" y="155" width="2" height="25" fill="#f2f2f2"/>
<path d="M1314 160 L1318 156 L1336.5 156 L1336.5 175 L1332.5 179 L1314 179Z" fill="#dedede"/>
<path d="M1318 156 L1336.5 156 L1332.5 160 L1314 160Z" fill="#eeeeee"/>
<path d="M1332.5 160 L1336.5 156 L1336.5 175 L1332.5 179Z" fill="#cfcfcf"/>
<circle cx="1357.5" cy="167.2" r="11.3" fill="url(#sph)"/>
<rect x="1380.5" y="159" width="18" height="17" fill="url(#cyl)"/>
<ellipse cx="1389.5" cy="159" rx="9" ry="3.2" fill="#f0f0f0"/>
<ellipse cx="1389.5" cy="176" rx="9" ry="3.2" fill="#d6d6d6"/>
<rect x="1409" y="155" width="2" height="25" fill="#f2f2f2"/>
<circle cx="1428.2" cy="166.5" r="5" fill="#dcdcdc"/>
<g stroke="#dcdcdc" stroke-width="2">
<path d="M1428.2 155 v3.5 M1428.2 174.5 v3.5 M1416.7 166.5 h3.5 M1436.2 166.5 h3.5 M1420 158.3 l2.5 2.5 M1434 172.3 l2.5 2.5 M1420 174.7 l2.5 -2.5 M1434 160.7 l2.5 -2.5"/>
</g>
<rect x="1476.5" y="166" width="3" height="2" fill="#222"/>
</svg><div class="a" style="left:1px;top:301px;width:991px;height:647px;background:#efebe7;border-radius:4px 4px 0 0;box-shadow:2px 0 9px rgba(0,0,0,0.4)"></div>
<div class="a" style="left:1px;top:302px;width:990px;height:23px;background:linear-gradient(#e8e8e8,#dcdcdc 50%,#cfcfcf);border-radius:4px 4px 0 0"></div>
<div class="a" style="left:1px;top:301px;width:990px;height:1px;background:#fefefe;border-radius:4px 4px 0 0"></div>
<div class="a" style="left:1px;top:324px;width:990px;height:1px;background:#cfcbc7"></div>
<svg style="left:9px;top:309px" width="14" height="10"><path d="M1.5 1.5 L6.5 6.5 L11.5 1.5Z" fill="#6a6a6a"/></svg><div class="t" style="left:438.50px;top:309.00px;font-size:12.3px;color:#555555;font-family:'Liberation Sans',sans-serif;font-weight:bold;transform:scaleX(1.0492);transform-origin:0 0;">Default - rqt</div>
<svg style="left:924px;top:305px" width="64" height="18">
<path d="M5 8.8 h8.5" stroke="#6e6e6e" stroke-width="1.8"/>
<path d="M26.8 8.8 h8.5 M31 4.6 v8.5" stroke="#6e6e6e" stroke-width="1.8"/>
<path d="M49.5 4.8 L56.5 11.8 M56.5 4.8 L49.5 11.8" stroke="#6e6e6e" stroke-width="1.8"/>
</svg><div class="t" style="left:12.40px;top:330.00px;font-size:12.5px;color:#262626;font-family:'Liberation Sans',sans-serif;transform:scaleX(0.9233);transform-origin:0 0;">File</div>
<div class="a" style="left:12.4px;top:342px;width:5.2px;height:1px;background:#262626"></div>
<div class="t" style="left:46.30px;top:330.00px;font-size:12.5px;color:#262626;font-family:'Liberation Sans',sans-serif;transform:scaleX(0.9951);transform-origin:0 0;">Plugins</div>
<div class="a" style="left:46.3px;top:342px;width:5.8px;height:1px;background:#262626"></div>
<div class="t" style="left:102.40px;top:330.00px;font-size:12.5px;color:#262626;font-family:'Liberation Sans',sans-serif;transform:scaleX(1.0071);transform-origin:0 0;">Running</div>
<div class="a" style="left:102.4px;top:342px;width:6.3px;height:1px;background:#262626"></div>
<div class="t" style="left:164.20px;top:330.00px;font-size:12.5px;color:#262626;font-family:'Liberation Sans',sans-serif;transform:scaleX(0.9824);transform-origin:0 0;">Perspectives</div>
<div class="a" style="left:170.4px;top:342px;width:6px;height:1px;background:#262626"></div>
<div class="t" style="left:249.20px;top:330.00px;font-size:12.5px;color:#262626;font-family:'Liberation Sans',sans-serif;transform:scaleX(1.0151);transform-origin:0 0;">Help</div>
<div class="a" style="left:249.2px;top:342px;width:6.8px;height:1px;background:#262626"></div>
<div class="a" style="left:1px;top:346px;width:990px;height:1px;background:#d6d2ce"></div>
<div class="a" style="left:1px;top:347px;width:990px;height:1px;background:#fbfaf9"></div>
<svg style="left:2px;top:353px" width="17" height="15">
<rect x="0.5" y="0.5" width="15" height="13.5" fill="#2c2c2c" stroke="#8a8a8a" stroke-width="1"/>
<circle cx="8" cy="7.2" r="1.8" fill="#bbb"/><path d="M8 4 v1.3 M8 9 v1.3 M4.8 7.2 h1.3 M9.9 7.2 h1.3" stroke="#999" stroke-width="0.8"/>
</svg><div class="t" style="left:18.50px;top:356.00px;font-size:12.5px;color:#1e1e1e;font-family:'Liberation Sans',sans-serif;transform:scaleX(0.9987);transform-origin:0 0;">Image View</div>
<div class="a" style="left:250.2px;top:352.5px;width:15px;height:15px;background:#dcd9d5;border:1px solid #b8b4af;border-radius:2px"></div>
<div class="t" style="left:253.40px;top:355.00px;font-size:12.5px;color:#222;font-family:'Liberation Sans',sans-serif;transform:scaleX(1.0524);transform-origin:0 0;">D</div>
<svg style="left:267.7px;top:353.5px" width="13.5" height="13.5" viewBox="0 0 14 14">
<path d="M12.2 6.6 A5.3 5.3 0 1 1 9.65 2.9" fill="none" stroke="#3b3b3b" stroke-width="1.9"/>
<path d="M12.4 4.4 L7.5 4.9 L10.2 0.2Z" fill="#3b3b3b"/>
</svg><svg style="left:281.4px;top:351.2px" width="17.6" height="17.6">
<defs><radialGradient id="hg290" cx="0.4" cy="0.35" r="0.7"><stop offset="0" stop-color="#6fb3f2"/><stop offset="1" stop-color="#2a7fd4"/></radialGradient></defs>
<circle cx="8.8" cy="8.8" r="7.8" fill="url(#hg290)"/>
<path d="M6.200000000000001 6.6000000000000005 Q6.200000000000001 3.500000000000001 8.8 3.500000000000001 Q11.600000000000001 3.500000000000001 11.600000000000001 6.300000000000001 Q11.600000000000001 8.100000000000001 8.8 9.100000000000001 L8.8 10.600000000000001" fill="none" stroke="#fff" stroke-width="1.7"/>
<circle cx="8.8" cy="12.8" r="1.05" fill="#fff"/>
</svg><div class="t" style="left:312.50px;top:355.00px;font-size:12.5px;color:#222;font-family:'Liberation Sans',sans-serif;transform:scaleX(0.9606);transform-origin:0 0;">-</div>
<div class="t" style="left:325.50px;top:355.00px;font-size:12.5px;color:#222;font-family:'Liberation Sans',sans-serif;transform:scaleX(0.9257);transform-origin:0 0;">O</div>
<svg style="left:341px;top:355px" width="11" height="11"><path d="M1.5 1.5 L8.5 8.5 M8.5 1.5 L1.5 8.5" stroke="#333" stroke-width="2.2"/></svg><div class="a" style="left:11px;top:377px;width:75px;height:24.5px;background:linear-gradient(#fbfaf9,#f1efed);border:1px solid #b9b5b0;border-radius:3px;background:linear-gradient(#fbfaf9,#efedea)"></div>
<div class="t" style="left:16.50px;top:384.00px;font-size:12.5px;color:#1e1e1e;font-family:'Liberation Sans',sans-serif;transform:scaleX(1.0094);transform-origin:0 0;">/optical_</div>
<div class="a" style="left:60px;top:383px;width:6px;height:12px;background:linear-gradient(90deg,rgba(251,250,249,0),#f8f7f5)"></div>
<svg style="left:68px;top:386px" width="12" height="8"><path d="M1 1.5 L5.5 6 L10 1.5Z" fill="#444"/></svg><div class="a" style="left:92px;top:378px;width:27.5px;height:23.5px;background:linear-gradient(#fbfaf9,#f1efed);border:1px solid #b9b5b0;border-radius:3px;"></div>
<svg style="left:98.5px;top:383px" width="14" height="14" viewBox="0 0 14 14">
<path d="M12.2 6.6 A5.3 5.3 0 1 1 9.65 2.9" fill="none" stroke="#3b3b3b" stroke-width="1.9"/>
<path d="M12.4 4.4 L7.5 4.9 L10.2 0.2Z" fill="#3b3b3b"/>
</svg><div class="a" style="left:126px;top:378px;width:27.5px;height:23.5px;background:linear-gradient(#fbfaf9,#f1efed);border:1px solid #b9b5b0;border-radius:3px;"></div>
<svg style="left:132.5px;top:382.5px" width="15" height="15"><rect x="0.5" y="0.5" width="13.5" height="13.5" rx="2.5" fill="#3a3a3a"/><path d="M5.5 4.8 L7.6 3.8 V10.6" stroke="#fff" stroke-width="1.7" fill="none"/></svg><div class="a" style="left:160px;top:378px;width:45px;height:23.5px;background:#fff;border:1px solid #bcb8b3;border-radius:2px;"></div>
<div class="a" style="left:190.5px;top:379px;width:1px;height:21.5px;background:#cfcbc6"></div>
<div class="t" style="left:164.50px;top:385.00px;font-size:12.5px;color:#1e1e1e;font-family:'Liberation Sans',sans-serif;transform:scaleX(1.0787);transform-origin:0 0;">0</div>
<svg style="left:191px;top:379px" width="14" height="22"><path d="M3 7.8 L7 3.8 L11 7.8Z" fill="#444"/><path d="M3 14.5 L7 18.5 L11 14.5Z" fill="#aaa"/></svg><div class="a" style="left:211px;top:382.5px;width:14px;height:14px;background:#fff;border:1px solid #bdb9b4;border-radius:1px"></div>
<div class="a" style="left:231px;top:378px;width:80px;height:23.5px;background:#fff;border:1px solid #bcb8b3;border-radius:2px;"></div>
<div class="a" style="left:296.5px;top:379px;width:1px;height:21.5px;background:#cfcbc6"></div>
<div class="t" style="left:236.50px;top:385.00px;font-size:12.5px;color:#1e1e1e;font-family:'Liberation Sans',sans-serif;transform:scaleX(0.9712);transform-origin:0 0;">10.00m</div>
<svg style="left:297px;top:379px" width="14" height="22"><path d="M3 7.8 L7 3.8 L11 7.8Z" fill="#444"/><path d="M3 14.5 L7 18.5 L11 14.5Z" fill="#444"/></svg><div class="a" style="left:317px;top:378px;width:27.5px;height:23.5px;background:linear-gradient(#fbfaf9,#f1efed);border:1px solid #b9b5b0;border-radius:3px;"></div>
<svg style="left:323.5px;top:381.5px" width="15" height="17">
<rect x="1.5" y="1" width="12" height="14.5" fill="#fff" stroke="#8e8b88" stroke-width="0.9"/>
<rect x="1.5" y="1" width="12" height="2.5" fill="#9fb6cc"/><rect x="7" y="1" width="1" height="2.5" fill="#555"/>
<path d="M6 6.5 h3 v3 h2 L7.5 13 L4 9.5 h2Z" fill="#3b7ab8"/>
</svg><div class="a" style="left:11.5px;top:414.5px;width:13.5px;height:13.5px;background:#fff;border:1px solid #bdb9b4;border-radius:1px"></div>
<div class="a" style="left:31.5px;top:409.5px;width:35px;height:24px;background:#fff;border:1px solid #bcb8b3;border-radius:2px;"></div>
<div class="t" style="left:32.00px;top:417.00px;font-size:12.5px;color:#1e1e1e;font-family:'Liberation Sans',sans-serif;transform:scaleX(0.9646);transform-origin:0 0;">e_left</div>
<div class="a" style="left:73px;top:414.5px;width:13.5px;height:13.5px;background:#fff;border:1px solid #bdb9b4;border-radius:1px"></div>
<div class="t" style="left:92.00px;top:417.00px;font-size:12.5px;color:#1e1e1e;font-family:'Liberation Sans',sans-serif;transform:scaleX(1.0341);transform-origin:0 0;">Smooth scali</div>
<div class="a" style="left:162px;top:412px;width:6px;height:18px;background:linear-gradient(90deg,rgba(239,235,231,0),#efebe7)"></div>
<div class="a" style="left:173px;top:409px;width:28px;height:24px;background:linear-gradient(#fbfaf9,#f1efed);border:1px solid #b9b5b0;border-radius:3px;"></div>
<svg style="left:179.5px;top:413.5px" width="16" height="16"><g transform="translate(15,0) scale(-1,1)">
<path d="M11.5 9 A4.6 4.6 0 1 1 8.5 3.6" fill="none" stroke="#a46ee0" stroke-width="3"/>
<path d="M7 0.5 L12.5 3.5 L7.8 7.2Z" fill="#a46ee0"/>
<circle cx="7.3" cy="9" r="1" fill="#d8c0f4"/>
</g></svg><div class="t" style="left:221.00px;top:417.00px;font-size:12.5px;color:#1e1e1e;font-family:'Liberation Sans',sans-serif;transform:scaleX(1.0039);transform-origin:0 0;">0°</div>
<div class="a" style="left:239.5px;top:409px;width:27.5px;height:24px;background:linear-gradient(#fbfaf9,#f1efed);border:1px solid #b9b5b0;border-radius:3px;"></div>
<svg style="left:245px;top:413.5px" width="16" height="16"><g >
<path d="M11.5 9 A4.6 4.6 0 1 1 8.5 3.6" fill="none" stroke="#a46ee0" stroke-width="3"/>
<path d="M7 0.5 L12.5 3.5 L7.8 7.2Z" fill="#a46ee0"/>
<circle cx="7.3" cy="9" r="1" fill="#d8c0f4"/>
</g></svg><div class="a" style="left:273px;top:409px;width:71.5px;height:24.5px;background:linear-gradient(#fbfaf9,#f1efed);border:1px solid #b9b5b0;border-radius:3px;background:linear-gradient(#fbfaf9,#efedea)"></div>
<div class="t" style="left:278.50px;top:417.00px;font-size:12.5px;color:#1e1e1e;font-family:'Liberation Sans',sans-serif;transform:scaleX(0.9967);transform-origin:0 0;">Gray</div>
<svg style="left:327px;top:418px" width="12" height="8"><path d="M1 1.5 L5.5 6 L10 1.5Z" fill="#444"/></svg><svg style="left:3px;top:450px;overflow:hidden" width="351" height="354"><defs><filter id="ivb" x="-5%" y="-5%" width="110%" height="110%"><feGaussianBlur stdDeviation="1.6"/></filter></defs><rect width="351" height="354" fill="#8f8f8f"/><g filter="url(#ivb)"><rect x="-4" y="-10" width="5" height="39" fill="rgb(144,144,144)"/><rect x="-4" y="29" width="5" height="26" fill="rgb(139,139,139)"/><rect x="-4" y="55" width="5" height="88" fill="rgb(139,139,139)"/><rect x="-4" y="143" width="5" height="66" fill="rgb(147,147,147)"/><rect x="-4" y="209" width="5" height="27" fill="rgb(146,146,146)"/><rect x="-4" y="236" width="5" height="47" fill="rgb(138,138,138)"/><rect x="-4" y="283" width="5" height="31" fill="rgb(144,144,144)"/><rect x="-4" y="314" width="5" height="73" fill="rgb(139,139,139)"/><rect x="1" y="-10" width="4" height="31" fill="rgb(146,146,146)"/><rect x="1" y="21" width="4" height="74" fill="rgb(138,138,138)"/><rect x="1" y="95" width="4" height="35" fill="rgb(141,141,141)"/><rect x="1" y="130" width="4" height="27" fill="rgb(147,147,147)"/><rect x="1" y="157" width="4" height="70" fill="rgb(138,138,138)"/><rect x="1" y="227" width="4" height="48" fill="rgb(138,138,138)"/><rect x="1" y="275" width="4" height="37" fill="rgb(142,142,142)"/><rect x="1" y="312" width="4" height="73" fill="rgb(140,140,140)"/><rect x="5" y="-10" width="7" height="35" fill="rgb(147,147,147)"/><rect x="5" y="25" width="7" height="59" fill="rgb(146,146,146)"/><rect x="5" y="84" width="7" height="43" fill="rgb(139,139,139)"/><rect x="5" y="127" width="7" height="44" fill="rgb(143,143,143)"/><rect x="5" y="171" width="7" height="32" fill="rgb(146,146,146)"/><rect x="5" y="203" width="7" height="28" fill="rgb(147,147,147)"/><rect x="5" y="231" width="7" height="27" fill="rgb(147,147,147)"/><rect x="5" y="258" width="7" height="46" fill="rgb(145,145,145)"/><rect x="5" y="304" width="7" height="88" fill="rgb(144,144,144)"/><rect x="12" y="-10" width="9" height="60" fill="rgb(145,145,145)"/><rect x="12" y="50" width="9" height="78" fill="rgb(143,143,143)"/><rect x="12" y="128" width="9" height="58" fill="rgb(141,141,141)"/><rect x="12" y="186" width="9" height="43" fill="rgb(149,149,149)"/><rect x="12" y="229" width="9" height="51" fill="rgb(139,139,139)"/><rect x="12" y="280" width="9" height="58" fill="rgb(146,146,146)"/><rect x="12" y="338" width="9" height="83" fill="rgb(143,143,143)"/><rect x="21" y="-10" width="8" height="77" fill="rgb(142,142,142)"/><rect x="21" y="67" width="8" height="29" fill="rgb(139,139,139)"/><rect x="21" y="96" width="8" height="85" fill="rgb(144,144,144)"/><rect x="21" y="181" width="8" height="41" fill="rgb(150,150,150)"/><rect x="21" y="222" width="8" height="63" fill="rgb(140,140,140)"/><rect x="21" y="285" width="8" height="82" fill="rgb(144,144,144)"/><rect x="29" y="-10" width="3" height="29" fill="rgb(150,150,150)"/><rect x="29" y="19" width="3" height="60" fill="rgb(143,143,143)"/><rect x="29" y="79" width="3" height="64" fill="rgb(147,147,147)"/><rect x="29" y="143" width="3" height="83" fill="rgb(147,147,147)"/><rect x="29" y="226" width="3" height="78" fill="rgb(139,139,139)"/><rect x="29" y="304" width="3" height="31" fill="rgb(142,142,142)"/><rect x="29" y="335" width="3" height="80" fill="rgb(149,149,149)"/><rect x="32" y="-10" width="8" height="28" fill="rgb(138,138,138)"/><rect x="32" y="18" width="8" height="59" fill="rgb(148,148,148)"/><rect x="32" y="77" width="8" height="77" fill="rgb(142,142,142)"/><rect x="32" y="154" width="8" height="69" fill="rgb(148,148,148)"/><rect x="32" y="223" width="8" height="64" fill="rgb(138,138,138)"/><rect x="32" y="287" width="8" height="79" fill="rgb(143,143,143)"/><rect x="40" y="-10" width="4" height="34" fill="rgb(145,145,145)"/><rect x="40" y="24" width="4" height="27" fill="rgb(141,141,141)"/><rect x="40" y="51" width="4" height="56" fill="rgb(140,140,140)"/><rect x="40" y="107" width="4" height="51" fill="rgb(144,144,144)"/><rect x="40" y="158" width="4" height="70" fill="rgb(145,145,145)"/><rect x="40" y="228" width="4" height="30" fill="rgb(140,140,140)"/><rect x="40" y="258" width="4" height="77" fill="rgb(144,144,144)"/><rect x="40" y="335" width="4" height="90" fill="rgb(142,142,142)"/><rect x="44" y="-10" width="4" height="75" fill="rgb(146,146,146)"/><rect x="44" y="65" width="4" height="55" fill="rgb(149,149,149)"/><rect x="44" y="120" width="4" height="73" fill="rgb(143,143,143)"/><rect x="44" y="193" width="4" height="68" fill="rgb(141,141,141)"/><rect x="44" y="261" width="4" height="39" fill="rgb(139,139,139)"/><rect x="44" y="300" width="4" height="42" fill="rgb(140,140,140)"/><rect x="44" y="342" width="4" height="49" fill="rgb(148,148,148)"/><rect x="48" y="-10" width="4" height="21" fill="rgb(145,145,145)"/><rect x="48" y="11" width="4" height="43" fill="rgb(142,142,142)"/><rect x="48" y="54" width="4" height="56" fill="rgb(138,138,138)"/><rect x="48" y="110" width="4" height="38" fill="rgb(144,144,144)"/><rect x="48" y="148" width="4" height="88" fill="rgb(143,143,143)"/><rect x="48" y="236" width="4" height="60" fill="rgb(140,140,140)"/><rect x="48" y="296" width="4" height="85" fill="rgb(147,147,147)"/><rect x="52" y="-10" width="8" height="26" fill="rgb(145,145,145)"/><rect x="52" y="16" width="8" height="70" fill="rgb(144,144,144)"/><rect x="52" y="86" width="8" height="71" fill="rgb(144,144,144)"/><rect x="52" y="157" width="8" height="33" fill="rgb(145,145,145)"/><rect x="52" y="190" width="8" height="71" fill="rgb(138,138,138)"/><rect x="52" y="261" width="8" height="44" fill="rgb(139,139,139)"/><rect x="52" y="305" width="8" height="46" fill="rgb(145,145,145)"/><rect x="52" y="351" width="8" height="40" fill="rgb(139,139,139)"/><rect x="60" y="-10" width="5" height="26" fill="rgb(139,139,139)"/><rect x="60" y="16" width="5" height="20" fill="rgb(147,147,147)"/><rect x="60" y="36" width="5" height="39" fill="rgb(146,146,146)"/><rect x="60" y="75" width="5" height="32" fill="rgb(143,143,143)"/><rect x="60" y="107" width="5" height="23" fill="rgb(139,139,139)"/><rect x="60" y="130" width="5" height="46" fill="rgb(147,147,147)"/><rect x="60" y="176" width="5" height="68" fill="rgb(140,140,140)"/><rect x="60" y="244" width="5" height="52" fill="rgb(143,143,143)"/><rect x="60" y="296" width="5" height="66" fill="rgb(145,145,145)"/><rect x="60" y="362" width="5" height="35" fill="rgb(139,139,139)"/><rect x="65" y="-10" width="9" height="82" fill="rgb(145,145,145)"/><rect x="65" y="72" width="9" height="81" fill="rgb(145,145,145)"/><rect x="65" y="153" width="9" height="59" fill="rgb(139,139,139)"/><rect x="65" y="212" width="9" height="38" fill="rgb(139,139,139)"/><rect x="65" y="250" width="9" height="63" fill="rgb(149,149,149)"/><rect x="65" y="313" width="9" height="53" fill="rgb(145,145,145)"/><rect x="74" y="-10" width="9" height="40" fill="rgb(146,146,146)"/><rect x="74" y="30" width="9" height="22" fill="rgb(141,141,141)"/><rect x="74" y="52" width="9" height="87" fill="rgb(143,143,143)"/><rect x="74" y="139" width="9" height="38" fill="rgb(149,149,149)"/><rect x="74" y="177" width="9" height="89" fill="rgb(138,138,138)"/><rect x="74" y="266" width="9" height="87" fill="rgb(142,142,142)"/><rect x="74" y="353" width="9" height="31" fill="rgb(149,149,149)"/><rect x="83" y="-10" width="9" height="53" fill="rgb(146,146,146)"/><rect x="83" y="43" width="9" height="66" fill="rgb(140,140,140)"/><rect x="83" y="109" width="9" height="65" fill="rgb(150,150,150)"/><rect x="83" y="174" width="9" height="48" fill="rgb(146,146,146)"/><rect x="83" y="222" width="9" height="89" fill="rgb(150,150,150)"/><rect x="83" y="311" width="9" height="84" fill="rgb(143,143,143)"/><rect x="92" y="-10" width="8" height="48" fill="rgb(147,147,147)"/><rect x="92" y="38" width="8" height="44" fill="rgb(150,150,150)"/><rect x="92" y="82" width="8" height="50" fill="rgb(144,144,144)"/><rect x="92" y="132" width="8" height="49" fill="rgb(141,141,141)"/><rect x="92" y="181" width="8" height="86" fill="rgb(145,145,145)"/><rect x="92" y="267" width="8" height="65" fill="rgb(149,149,149)"/><rect x="92" y="332" width="8" height="23" fill="rgb(138,138,138)"/><rect x="92" y="355" width="8" height="55" fill="rgb(145,145,145)"/><rect x="100" y="-10" width="5" height="44" fill="rgb(149,149,149)"/><rect x="100" y="34" width="5" height="64" fill="rgb(145,145,145)"/><rect x="100" y="98" width="5" height="64" fill="rgb(143,143,143)"/><rect x="100" y="162" width="5" height="30" fill="rgb(141,141,141)"/><rect x="100" y="192" width="5" height="33" fill="rgb(141,141,141)"/><rect x="100" y="225" width="5" height="80" fill="rgb(141,141,141)"/><rect x="100" y="305" width="5" height="63" fill="rgb(141,141,141)"/><rect x="105" y="-10" width="6" height="20" fill="rgb(145,145,145)"/><rect x="105" y="10" width="6" height="64" fill="rgb(150,150,150)"/><rect x="105" y="74" width="6" height="30" fill="rgb(148,148,148)"/><rect x="105" y="104" width="6" height="35" fill="rgb(144,144,144)"/><rect x="105" y="139" width="6" height="45" fill="rgb(145,145,145)"/><rect x="105" y="184" width="6" height="42" fill="rgb(144,144,144)"/><rect x="105" y="226" width="6" height="62" fill="rgb(139,139,139)"/><rect x="105" y="288" width="6" height="70" fill="rgb(145,145,145)"/><rect x="105" y="358" width="6" height="71" fill="rgb(149,149,149)"/><rect x="111" y="-10" width="3" height="40" fill="rgb(140,140,140)"/><rect x="111" y="30" width="3" height="36" fill="rgb(138,138,138)"/><rect x="111" y="66" width="3" height="39" fill="rgb(147,147,147)"/><rect x="111" y="105" width="3" height="79" fill="rgb(150,150,150)"/><rect x="111" y="184" width="3" height="38" fill="rgb(147,147,147)"/><rect x="111" y="222" width="3" height="80" fill="rgb(148,148,148)"/><rect x="111" y="302" width="3" height="64" fill="rgb(140,140,140)"/><rect x="114" y="-10" width="7" height="90" fill="rgb(140,140,140)"/><rect x="114" y="80" width="7" height="22" fill="rgb(138,138,138)"/><rect x="114" y="102" width="7" height="33" fill="rgb(146,146,146)"/><rect x="114" y="135" width="7" height="37" fill="rgb(144,144,144)"/><rect x="114" y="172" width="7" height="44" fill="rgb(141,141,141)"/><rect x="114" y="216" width="7" height="23" fill="rgb(142,142,142)"/><rect x="114" y="239" width="7" height="47" fill="rgb(142,142,142)"/><rect x="114" y="286" width="7" height="84" fill="rgb(141,141,141)"/><rect x="121" y="-10" width="9" height="61" fill="rgb(142,142,142)"/><rect x="121" y="51" width="9" height="89" fill="rgb(144,144,144)"/><rect x="121" y="140" width="9" height="36" fill="rgb(138,138,138)"/><rect x="121" y="176" width="9" height="65" fill="rgb(145,145,145)"/><rect x="121" y="241" width="9" height="86" fill="rgb(144,144,144)"/><rect x="121" y="327" width="9" height="84" fill="rgb(140,140,140)"/><rect x="130" y="-10" width="7" height="39" fill="rgb(146,146,146)"/><rect x="130" y="29" width="7" height="85" fill="rgb(138,138,138)"/><rect x="130" y="114" width="7" height="76" fill="rgb(150,150,150)"/><rect x="130" y="190" width="7" height="43" fill="rgb(147,147,147)"/><rect x="130" y="233" width="7" height="20" fill="rgb(150,150,150)"/><rect x="130" y="253" width="7" height="39" fill="rgb(140,140,140)"/><rect x="130" y="292" width="7" height="38" fill="rgb(145,145,145)"/><rect x="130" y="330" width="7" height="35" fill="rgb(146,146,146)"/><rect x="137" y="-10" width="3" height="61" fill="rgb(148,148,148)"/><rect x="137" y="51" width="3" height="86" fill="rgb(146,146,146)"/><rect x="137" y="137" width="3" height="81" fill="rgb(150,150,150)"/><rect x="137" y="218" width="3" height="33" fill="rgb(146,146,146)"/><rect x="137" y="251" width="3" height="27" fill="rgb(141,141,141)"/><rect x="137" y="278" width="3" height="44" fill="rgb(142,142,142)"/><rect x="137" y="322" width="3" height="25" fill="rgb(150,150,150)"/><rect x="137" y="347" width="3" height="32" fill="rgb(146,146,146)"/><rect x="140" y="-10" width="6" height="23" fill="rgb(150,150,150)"/><rect x="140" y="13" width="6" height="28" fill="rgb(145,145,145)"/><rect x="140" y="41" width="6" height="61" fill="rgb(147,147,147)"/><rect x="140" y="102" width="6" height="84" fill="rgb(147,147,147)"/><rect x="140" y="186" width="6" height="85" fill="rgb(141,141,141)"/><rect x="140" y="271" width="6" height="55" fill="rgb(145,145,145)"/><rect x="140" y="326" width="6" height="85" fill="rgb(146,146,146)"/><rect x="146" y="-10" width="9" height="81" fill="rgb(146,146,146)"/><rect x="146" y="71" width="9" height="51" fill="rgb(149,149,149)"/><rect x="146" y="122" width="9" height="86" fill="rgb(142,142,142)"/><rect x="146" y="208" width="9" height="45" fill="rgb(145,145,145)"/><rect x="146" y="253" width="9" height="37" fill="rgb(144,144,144)"/><rect x="146" y="290" width="9" height="35" fill="rgb(144,144,144)"/><rect x="146" y="325" width="9" height="76" fill="rgb(143,143,143)"/><rect x="155" y="-10" width="3" height="50" fill="rgb(144,144,144)"/><rect x="155" y="40" width="3" height="29" fill="rgb(141,141,141)"/><rect x="155" y="69" width="3" height="58" fill="rgb(150,150,150)"/><rect x="155" y="127" width="3" height="35" fill="rgb(150,150,150)"/><rect x="155" y="162" width="3" height="39" fill="rgb(149,149,149)"/><rect x="155" y="201" width="3" height="66" fill="rgb(140,140,140)"/><rect x="155" y="267" width="3" height="52" fill="rgb(140,140,140)"/><rect x="155" y="319" width="3" height="79" fill="rgb(141,141,141)"/><rect x="158" y="-10" width="8" height="32" fill="rgb(144,144,144)"/><rect x="158" y="22" width="8" height="82" fill="rgb(140,140,140)"/><rect x="158" y="104" width="8" height="48" fill="rgb(140,140,140)"/><rect x="158" y="152" width="8" height="75" fill="rgb(146,146,146)"/><rect x="158" y="227" width="8" height="71" fill="rgb(143,143,143)"/><rect x="158" y="298" width="8" height="73" fill="rgb(141,141,141)"/><rect x="166" y="-10" width="5" height="60" fill="rgb(139,139,139)"/><rect x="166" y="50" width="5" height="66" fill="rgb(138,138,138)"/><rect x="166" y="116" width="5" height="63" fill="rgb(146,146,146)"/><rect x="166" y="179" width="5" height="78" fill="rgb(145,145,145)"/><rect x="166" y="257" width="5" height="22" fill="rgb(144,144,144)"/><rect x="166" y="279" width="5" height="62" fill="rgb(146,146,146)"/><rect x="166" y="341" width="5" height="57" fill="rgb(146,146,146)"/><rect x="171" y="-10" width="3" height="34" fill="rgb(150,150,150)"/><rect x="171" y="24" width="3" height="49" fill="rgb(139,139,139)"/><rect x="171" y="73" width="3" height="30" fill="rgb(142,142,142)"/><rect x="171" y="103" width="3" height="54" fill="rgb(138,138,138)"/><rect x="171" y="157" width="3" height="43" fill="rgb(142,142,142)"/><rect x="171" y="200" width="3" height="36" fill="rgb(144,144,144)"/><rect x="171" y="236" width="3" height="53" fill="rgb(144,144,144)"/><rect x="171" y="289" width="3" height="39" fill="rgb(146,146,146)"/><rect x="171" y="328" width="3" height="85" fill="rgb(147,147,147)"/><rect x="174" y="-10" width="6" height="61" fill="rgb(139,139,139)"/><rect x="174" y="51" width="6" height="55" fill="rgb(138,138,138)"/><rect x="174" y="106" width="6" height="43" fill="rgb(144,144,144)"/><rect x="174" y="149" width="6" height="29" fill="rgb(142,142,142)"/><rect x="174" y="178" width="6" height="22" fill="rgb(148,148,148)"/><rect x="174" y="200" width="6" height="31" fill="rgb(150,150,150)"/><rect x="174" y="231" width="6" height="53" fill="rgb(139,139,139)"/><rect x="174" y="284" width="6" height="48" fill="rgb(139,139,139)"/><rect x="174" y="332" width="6" height="53" fill="rgb(139,139,139)"/><rect x="180" y="-10" width="6" height="21" fill="rgb(143,143,143)"/><rect x="180" y="11" width="6" height="90" fill="rgb(144,144,144)"/><rect x="180" y="101" width="6" height="54" fill="rgb(147,147,147)"/><rect x="180" y="155" width="6" height="36" fill="rgb(138,138,138)"/><rect x="180" y="191" width="6" height="87" fill="rgb(149,149,149)"/><rect x="180" y="278" width="6" height="50" fill="rgb(139,139,139)"/><rect x="180" y="328" width="6" height="40" fill="rgb(142,142,142)"/><rect x="186" y="-10" width="3" height="43" fill="rgb(141,141,141)"/><rect x="186" y="33" width="3" height="59" fill="rgb(148,148,148)"/><rect x="186" y="92" width="3" height="59" fill="rgb(146,146,146)"/><rect x="186" y="151" width="3" height="46" fill="rgb(142,142,142)"/><rect x="186" y="197" width="3" height="77" fill="rgb(146,146,146)"/><rect x="186" y="274" width="3" height="42" fill="rgb(142,142,142)"/><rect x="186" y="316" width="3" height="64" fill="rgb(150,150,150)"/><rect x="189" y="-10" width="3" height="52" fill="rgb(138,138,138)"/><rect x="189" y="42" width="3" height="21" fill="rgb(138,138,138)"/><rect x="189" y="63" width="3" height="84" fill="rgb(146,146,146)"/><rect x="189" y="147" width="3" height="44" fill="rgb(146,146,146)"/><rect x="189" y="191" width="3" height="80" fill="rgb(141,141,141)"/><rect x="189" y="271" width="3" height="77" fill="rgb(139,139,139)"/><rect x="189" y="348" width="3" height="75" fill="rgb(148,148,148)"/><rect x="192" y="-10" width="6" height="89" fill="rgb(144,144,144)"/><rect x="192" y="79" width="6" height="84" fill="rgb(142,142,142)"/><rect x="192" y="163" width="6" height="47" fill="rgb(141,141,141)"/><rect x="192" y="210" width="6" height="63" fill="rgb(141,141,141)"/><rect x="192" y="273" width="6" height="37" fill="rgb(144,144,144)"/><rect x="192" y="310" width="6" height="64" fill="rgb(138,138,138)"/><rect x="198" y="-10" width="9" height="36" fill="rgb(138,138,138)"/><rect x="198" y="26" width="9" height="29" fill="rgb(148,148,148)"/><rect x="198" y="55" width="9" height="52" fill="rgb(144,144,144)"/><rect x="198" y="107" width="9" height="40" fill="rgb(138,138,138)"/><rect x="198" y="147" width="9" height="30" fill="rgb(148,148,148)"/><rect x="198" y="177" width="9" height="68" fill="rgb(146,146,146)"/><rect x="198" y="245" width="9" height="56" fill="rgb(147,147,147)"/><rect x="198" y="301" width="9" height="51" fill="rgb(149,149,149)"/><rect x="198" y="352" width="9" height="57" fill="rgb(138,138,138)"/><rect x="207" y="-10" width="6" height="43" fill="rgb(140,140,140)"/><rect x="207" y="33" width="6" height="54" fill="rgb(145,145,145)"/><rect x="207" y="87" width="6" height="20" fill="rgb(142,142,142)"/><rect x="207" y="107" width="6" height="66" fill="rgb(143,143,143)"/><rect x="207" y="173" width="6" height="90" fill="rgb(143,143,143)"/><rect x="207" y="263" width="6" height="51" fill="rgb(138,138,138)"/><rect x="207" y="314" width="6" height="59" fill="rgb(141,141,141)"/><rect x="213" y="-10" width="5" height="43" fill="rgb(138,138,138)"/><rect x="213" y="33" width="5" height="62" fill="rgb(144,144,144)"/><rect x="213" y="95" width="5" height="30" fill="rgb(145,145,145)"/><rect x="213" y="125" width="5" height="55" fill="rgb(146,146,146)"/><rect x="213" y="180" width="5" height="45" fill="rgb(141,141,141)"/><rect x="213" y="225" width="5" height="84" fill="rgb(150,150,150)"/><rect x="213" y="309" width="5" height="20" fill="rgb(139,139,139)"/><rect x="213" y="329" width="5" height="53" fill="rgb(139,139,139)"/><rect x="218" y="-10" width="4" height="71" fill="rgb(147,147,147)"/><rect x="218" y="61" width="4" height="25" fill="rgb(144,144,144)"/><rect x="218" y="86" width="4" height="22" fill="rgb(142,142,142)"/><rect x="218" y="108" width="4" height="58" fill="rgb(148,148,148)"/><rect x="218" y="166" width="4" height="49" fill="rgb(139,139,139)"/><rect x="218" y="215" width="4" height="87" fill="rgb(150,150,150)"/><rect x="218" y="302" width="4" height="39" fill="rgb(148,148,148)"/><rect x="218" y="341" width="4" height="69" fill="rgb(150,150,150)"/><rect x="222" y="-10" width="5" height="83" fill="rgb(140,140,140)"/><rect x="222" y="73" width="5" height="56" fill="rgb(149,149,149)"/><rect x="222" y="129" width="5" height="38" fill="rgb(138,138,138)"/><rect x="222" y="167" width="5" height="85" fill="rgb(148,148,148)"/><rect x="222" y="252" width="5" height="74" fill="rgb(149,149,149)"/><rect x="222" y="326" width="5" height="84" fill="rgb(140,140,140)"/><rect x="227" y="-10" width="7" height="84" fill="rgb(147,147,147)"/><rect x="227" y="74" width="7" height="22" fill="rgb(148,148,148)"/><rect x="227" y="96" width="7" height="49" fill="rgb(139,139,139)"/><rect x="227" y="145" width="7" height="23" fill="rgb(138,138,138)"/><rect x="227" y="168" width="7" height="37" fill="rgb(148,148,148)"/><rect x="227" y="205" width="7" height="66" fill="rgb(139,139,139)"/><rect x="227" y="271" width="7" height="68" fill="rgb(145,145,145)"/><rect x="227" y="339" width="7" height="26" fill="rgb(148,148,148)"/><rect x="234" y="-10" width="3" height="88" fill="rgb(148,148,148)"/><rect x="234" y="78" width="3" height="51" fill="rgb(145,145,145)"/><rect x="234" y="129" width="3" height="53" fill="rgb(138,138,138)"/><rect x="234" y="182" width="3" height="78" fill="rgb(150,150,150)"/><rect x="234" y="260" width="3" height="28" fill="rgb(149,149,149)"/><rect x="234" y="288" width="3" height="84" fill="rgb(146,146,146)"/><rect x="237" y="-10" width="3" height="87" fill="rgb(139,139,139)"/><rect x="237" y="77" width="3" height="80" fill="rgb(142,142,142)"/><rect x="237" y="157" width="3" height="29" fill="rgb(142,142,142)"/><rect x="237" y="186" width="3" height="50" fill="rgb(149,149,149)"/><rect x="237" y="236" width="3" height="46" fill="rgb(141,141,141)"/><rect x="237" y="282" width="3" height="78" fill="rgb(145,145,145)"/><rect x="237" y="360" width="3" height="68" fill="rgb(139,139,139)"/><rect x="240" y="-10" width="6" height="56" fill="rgb(150,150,150)"/><rect x="240" y="46" width="6" height="25" fill="rgb(147,147,147)"/><rect x="240" y="71" width="6" height="45" fill="rgb(139,139,139)"/><rect x="240" y="116" width="6" height="38" fill="rgb(143,143,143)"/><rect x="240" y="154" width="6" height="52" fill="rgb(148,148,148)"/><rect x="240" y="206" width="6" height="58" fill="rgb(147,147,147)"/><rect x="240" y="264" width="6" height="37" fill="rgb(138,138,138)"/><rect x="240" y="301" width="6" height="81" fill="rgb(138,138,138)"/><rect x="246" y="-10" width="6" height="54" fill="rgb(148,148,148)"/><rect x="246" y="44" width="6" height="32" fill="rgb(149,149,149)"/><rect x="246" y="76" width="6" height="47" fill="rgb(148,148,148)"/><rect x="246" y="123" width="6" height="82" fill="rgb(142,142,142)"/><rect x="246" y="205" width="6" height="86" fill="rgb(142,142,142)"/><rect x="246" y="291" width="6" height="79" fill="rgb(145,145,145)"/><rect x="252" y="-10" width="6" height="35" fill="rgb(146,146,146)"/><rect x="252" y="25" width="6" height="45" fill="rgb(142,142,142)"/><rect x="252" y="70" width="6" height="30" fill="rgb(145,145,145)"/><rect x="252" y="100" width="6" height="22" fill="rgb(142,142,142)"/><rect x="252" y="122" width="6" height="78" fill="rgb(139,139,139)"/><rect x="252" y="200" width="6" height="84" fill="rgb(145,145,145)"/><rect x="252" y="284" width="6" height="54" fill="rgb(144,144,144)"/><rect x="252" y="338" width="6" height="46" fill="rgb(141,141,141)"/><rect x="258" y="-10" width="3" height="31" fill="rgb(140,140,140)"/><rect x="258" y="21" width="3" height="87" fill="rgb(142,142,142)"/><rect x="258" y="108" width="3" height="66" fill="rgb(140,140,140)"/><rect x="258" y="174" width="3" height="85" fill="rgb(142,142,142)"/><rect x="258" y="259" width="3" height="34" fill="rgb(149,149,149)"/><rect x="258" y="293" width="3" height="66" fill="rgb(141,141,141)"/><rect x="258" y="359" width="3" height="83" fill="rgb(145,145,145)"/><rect x="261" y="-10" width="6" height="23" fill="rgb(140,140,140)"/><rect x="261" y="13" width="6" height="20" fill="rgb(145,145,145)"/><rect x="261" y="33" width="6" height="77" fill="rgb(144,144,144)"/><rect x="261" y="110" width="6" height="58" fill="rgb(149,149,149)"/><rect x="261" y="168" width="6" height="38" fill="rgb(144,144,144)"/><rect x="261" y="206" width="6" height="64" fill="rgb(144,144,144)"/><rect x="261" y="270" width="6" height="60" fill="rgb(139,139,139)"/><rect x="261" y="330" width="6" height="62" fill="rgb(138,138,138)"/><rect x="267" y="-10" width="5" height="63" fill="rgb(144,144,144)"/><rect x="267" y="53" width="5" height="35" fill="rgb(141,141,141)"/><rect x="267" y="88" width="5" height="21" fill="rgb(149,149,149)"/><rect x="267" y="109" width="5" height="57" fill="rgb(142,142,142)"/><rect x="267" y="166" width="5" height="67" fill="rgb(139,139,139)"/><rect x="267" y="233" width="5" height="70" fill="rgb(144,144,144)"/><rect x="267" y="303" width="5" height="29" fill="rgb(143,143,143)"/><rect x="267" y="332" width="5" height="74" fill="rgb(150,150,150)"/><rect x="272" y="-10" width="5" height="26" fill="rgb(142,142,142)"/><rect x="272" y="16" width="5" height="33" fill="rgb(138,138,138)"/><rect x="272" y="49" width="5" height="56" fill="rgb(148,148,148)"/><rect x="272" y="105" width="5" height="39" fill="rgb(141,141,141)"/><rect x="272" y="144" width="5" height="54" fill="rgb(144,144,144)"/><rect x="272" y="198" width="5" height="85" fill="rgb(143,143,143)"/><rect x="272" y="283" width="5" height="44" fill="rgb(150,150,150)"/><rect x="272" y="327" width="5" height="67" fill="rgb(150,150,150)"/><rect x="277" y="-10" width="6" height="23" fill="rgb(150,150,150)"/><rect x="277" y="13" width="6" height="71" fill="rgb(146,146,146)"/><rect x="277" y="84" width="6" height="90" fill="rgb(141,141,141)"/><rect x="277" y="174" width="6" height="30" fill="rgb(138,138,138)"/><rect x="277" y="204" width="6" height="72" fill="rgb(145,145,145)"/><rect x="277" y="276" width="6" height="37" fill="rgb(148,148,148)"/><rect x="277" y="313" width="6" height="56" fill="rgb(145,145,145)"/><rect x="283" y="-10" width="3" height="90" fill="rgb(140,140,140)"/><rect x="283" y="80" width="3" height="41" fill="rgb(145,145,145)"/><rect x="283" y="121" width="3" height="73" fill="rgb(143,143,143)"/><rect x="283" y="194" width="3" height="56" fill="rgb(142,142,142)"/><rect x="283" y="250" width="3" height="52" fill="rgb(149,149,149)"/><rect x="283" y="302" width="3" height="53" fill="rgb(144,144,144)"/><rect x="283" y="355" width="3" height="50" fill="rgb(142,142,142)"/><rect x="286" y="-10" width="6" height="70" fill="rgb(139,139,139)"/><rect x="286" y="60" width="6" height="41" fill="rgb(148,148,148)"/><rect x="286" y="101" width="6" height="40" fill="rgb(139,139,139)"/><rect x="286" y="141" width="6" height="46" fill="rgb(146,146,146)"/><rect x="286" y="187" width="6" height="83" fill="rgb(146,146,146)"/><rect x="286" y="270" width="6" height="48" fill="rgb(145,145,145)"/><rect x="286" y="318" width="6" height="62" fill="rgb(150,150,150)"/><rect x="292" y="-10" width="6" height="74" fill="rgb(140,140,140)"/><rect x="292" y="64" width="6" height="90" fill="rgb(141,141,141)"/><rect x="292" y="154" width="6" height="51" fill="rgb(139,139,139)"/><rect x="292" y="205" width="6" height="42" fill="rgb(143,143,143)"/><rect x="292" y="247" width="6" height="31" fill="rgb(143,143,143)"/><rect x="292" y="278" width="6" height="50" fill="rgb(143,143,143)"/><rect x="292" y="328" width="6" height="53" fill="rgb(150,150,150)"/><rect x="298" y="-10" width="7" height="45" fill="rgb(138,138,138)"/><rect x="298" y="35" width="7" height="72" fill="rgb(144,144,144)"/><rect x="298" y="107" width="7" height="72" fill="rgb(149,149,149)"/><rect x="298" y="179" width="7" height="87" fill="rgb(141,141,141)"/><rect x="298" y="266" width="7" height="68" fill="rgb(142,142,142)"/><rect x="298" y="334" width="7" height="63" fill="rgb(150,150,150)"/><rect x="305" y="-10" width="3" height="83" fill="rgb(142,142,142)"/><rect x="305" y="73" width="3" height="66" fill="rgb(140,140,140)"/><rect x="305" y="139" width="3" height="84" fill="rgb(146,146,146)"/><rect x="305" y="223" width="3" height="47" fill="rgb(139,139,139)"/><rect x="305" y="270" width="3" height="54" fill="rgb(141,141,141)"/><rect x="305" y="324" width="3" height="69" fill="rgb(144,144,144)"/><rect x="308" y="-10" width="8" height="77" fill="rgb(144,144,144)"/><rect x="308" y="67" width="8" height="59" fill="rgb(138,138,138)"/><rect x="308" y="126" width="8" height="36" fill="rgb(138,138,138)"/><rect x="308" y="162" width="8" height="74" fill="rgb(149,149,149)"/><rect x="308" y="236" width="8" height="80" fill="rgb(147,147,147)"/><rect x="308" y="316" width="8" height="82" fill="rgb(138,138,138)"/><rect x="316" y="-10" width="3" height="70" fill="rgb(146,146,146)"/><rect x="316" y="60" width="3" height="79" fill="rgb(145,145,145)"/><rect x="316" y="139" width="3" height="51" fill="rgb(150,150,150)"/><rect x="316" y="190" width="3" height="33" fill="rgb(141,141,141)"/><rect x="316" y="223" width="3" height="39" fill="rgb(140,140,140)"/><rect x="316" y="262" width="3" height="86" fill="rgb(148,148,148)"/><rect x="316" y="348" width="3" height="33" fill="rgb(149,149,149)"/><rect x="319" y="-10" width="8" height="78" fill="rgb(139,139,139)"/><rect x="319" y="68" width="8" height="90" fill="rgb(150,150,150)"/><rect x="319" y="158" width="8" height="25" fill="rgb(138,138,138)"/><rect x="319" y="183" width="8" height="36" fill="rgb(141,141,141)"/><rect x="319" y="219" width="8" height="24" fill="rgb(148,148,148)"/><rect x="319" y="243" width="8" height="58" fill="rgb(140,140,140)"/><rect x="319" y="301" width="8" height="52" fill="rgb(146,146,146)"/><rect x="319" y="353" width="8" height="75" fill="rgb(149,149,149)"/><rect x="327" y="-10" width="9" height="34" fill="rgb(139,139,139)"/><rect x="327" y="24" width="9" height="29" fill="rgb(142,142,142)"/><rect x="327" y="53" width="9" height="87" fill="rgb(147,147,147)"/><rect x="327" y="140" width="9" height="44" fill="rgb(144,144,144)"/><rect x="327" y="184" width="9" height="53" fill="rgb(141,141,141)"/><rect x="327" y="237" width="9" height="20" fill="rgb(138,138,138)"/><rect x="327" y="257" width="9" height="88" fill="rgb(142,142,142)"/><rect x="327" y="345" width="9" height="78" fill="rgb(142,142,142)"/><rect x="336" y="-10" width="5" height="51" fill="rgb(145,145,145)"/><rect x="336" y="41" width="5" height="87" fill="rgb(141,141,141)"/><rect x="336" y="128" width="5" height="90" fill="rgb(141,141,141)"/><rect x="336" y="218" width="5" height="23" fill="rgb(144,144,144)"/><rect x="336" y="241" width="5" height="59" fill="rgb(138,138,138)"/><rect x="336" y="300" width="5" height="22" fill="rgb(141,141,141)"/><rect x="336" y="322" width="5" height="83" fill="rgb(148,148,148)"/><rect x="341" y="-10" width="8" height="73" fill="rgb(139,139,139)"/><rect x="341" y="63" width="8" height="52" fill="rgb(141,141,141)"/><rect x="341" y="115" width="8" height="74" fill="rgb(143,143,143)"/><rect x="341" y="189" width="8" height="49" fill="rgb(145,145,145)"/><rect x="341" y="238" width="8" height="24" fill="rgb(149,149,149)"/><rect x="341" y="262" width="8" height="63" fill="rgb(149,149,149)"/><rect x="341" y="325" width="8" height="73" fill="rgb(143,143,143)"/><rect x="349" y="-10" width="8" height="70" fill="rgb(141,141,141)"/><rect x="349" y="60" width="8" height="20" fill="rgb(150,150,150)"/><rect x="349" y="80" width="8" height="57" fill="rgb(149,149,149)"/><rect x="349" y="137" width="8" height="84" fill="rgb(139,139,139)"/><rect x="349" y="221" width="8" height="46" fill="rgb(145,145,145)"/><rect x="349" y="267" width="8" height="45" fill="rgb(142,142,142)"/><rect x="349" y="312" width="8" height="44" fill="rgb(141,141,141)"/><rect x="349" y="356" width="8" height="79" fill="rgb(141,141,141)"/></g><rect x="169.5" y="165.5" width="15" height="22" fill="#0c0c0c"/><rect x="166" y="174.5" width="22" height="5" fill="#0c0c0c"/></svg><svg style="left:359px;top:352px" width="17" height="17">
<defs><radialGradient id="tfg" cx="0.35" cy="0.35" r="0.75"><stop offset="0" stop-color="#e0d0f0"/><stop offset="1" stop-color="#8e6fb8"/></radialGradient></defs>
<circle cx="8" cy="8" r="7.3" fill="url(#tfg)" stroke="#9d86c0" stroke-width="0.8"/>
<path d="M3 6 Q8 3 13 6 M2.5 10 Q8 13 13.5 10 M8 1 Q5 8 8 15" stroke="#f4eefa" stroke-width="0.9" fill="none"/>
</svg><div class="t" style="left:376.00px;top:356.00px;font-size:12.5px;color:#1e1e1e;font-family:'Liberation Sans',sans-serif;transform:scaleX(0.9255);transform-origin:0 0;">TF Tree</div>
<div class="a" style="left:887.2px;top:352.5px;width:15px;height:15px;background:#dcd9d5;border:1px solid #b8b4af;border-radius:2px"></div>
<div class="t" style="left:890.40px;top:355.00px;font-size:12.5px;color:#222;font-family:'Liberation Sans',sans-serif;transform:scaleX(1.0524);transform-origin:0 0;">D</div>
<svg style="left:904.7px;top:353.5px" width="13.5" height="13.5" viewBox="0 0 14 14">
<path d="M12.2 6.6 A5.3 5.3 0 1 1 9.65 2.9" fill="none" stroke="#3b3b3b" stroke-width="1.9"/>
<path d="M12.4 4.4 L7.5 4.9 L10.2 0.2Z" fill="#3b3b3b"/>
</svg><svg style="left:918.4000000000001px;top:351.2px" width="17.6" height="17.6">
<defs><radialGradient id="hg927" cx="0.4" cy="0.35" r="0.7"><stop offset="0" stop-color="#6fb3f2"/><stop offset="1" stop-color="#2a7fd4"/></radialGradient></defs>
<circle cx="8.8" cy="8.8" r="7.8" fill="url(#hg927)"/>
<path d="M6.200000000000001 6.6000000000000005 Q6.200000000000001 3.500000000000001 8.8 3.500000000000001 Q11.600000000000001 3.500000000000001 11.600000000000001 6.300000000000001 Q11.600000000000001 8.100000000000001 8.8 9.100000000000001 L8.8 10.600000000000001" fill="none" stroke="#fff" stroke-width="1.7"/>
<circle cx="8.8" cy="12.8" r="1.05" fill="#fff"/>
</svg><div class="t" style="left:949.00px;top:355.00px;font-size:12.5px;color:#222;font-family:'Liberation Sans',sans-serif;transform:scaleX(0.9606);transform-origin:0 0;">-</div>
<div class="t" style="left:962.50px;top:355.00px;font-size:12.5px;color:#222;font-family:'Liberation Sans',sans-serif;transform:scaleX(0.9257);transform-origin:0 0;">O</div>
<svg style="left:978px;top:355px" width="11" height="11"><path d="M1.5 1.5 L8.5 8.5 M8.5 1.5 L1.5 8.5" stroke="#333" stroke-width="2.2"/></svg><div class="a" style="left:369px;top:377px;width:27.5px;height:24px;background:linear-gradient(#fbfaf9,#f1efed);border:1px solid #b9b5b0;border-radius:3px;"></div>
<svg style="left:375px;top:381px" width="15" height="16">
<path d="M2 3.2 h10" stroke="#333" stroke-width="1.6"/><path d="M5.5 2.2 h3" stroke="#333" stroke-width="1.6"/>
<rect x="3" y="5" width="8" height="9.5" fill="#333"/>
<path d="M5.6 6.5 v6.5 M8.4 6.5 v6.5" stroke="#fff" stroke-width="0.9"/>
</svg><div class="a" style="left:403px;top:377px;width:27.5px;height:24px;background:linear-gradient(#fbfaf9,#f1efed);border:1px solid #b9b5b0;border-radius:3px;"></div>
<svg style="left:409.5px;top:382px" width="14" height="14" viewBox="0 0 14 14">
<path d="M12.2 6.6 A5.3 5.3 0 1 1 9.65 2.9" fill="none" stroke="#3b3b3b" stroke-width="1.9"/>
<path d="M12.4 4.4 L7.5 4.9 L10.2 0.2Z" fill="#3b3b3b"/>
</svg><div class="a" style="left:437px;top:381px;width:14px;height:14px;background:#fff;border:1px solid #bdb9b4;border-radius:1px"></div>
<svg style="left:437px;top:381px" width="14" height="14"><path d="M2.8 6.8 L5.8 10.6 L11 2.5" stroke="#111" stroke-width="1.9" fill="none"/></svg><div class="t" style="left:456.40px;top:383.00px;font-size:12.5px;color:#1e1e1e;font-family:'Liberation Sans',sans-serif;transform:scaleX(1.0525);transform-origin:0 0;">Highlight</div>
<div class="a" style="left:522px;top:381.5px;width:14px;height:14px;background:#fff;border:1px solid #bdb9b4;border-radius:1px"></div>
<div class="t" style="left:541.60px;top:383.00px;font-size:12.5px;color:#1e1e1e;font-family:'Liberation Sans',sans-serif;transform:scaleX(0.9289);transform-origin:0 0;">Fit</div>
<div class="a" style="left:568.5px;top:377.5px;width:27.5px;height:23px;background:linear-gradient(#fbfaf9,#f1efed);border:1px solid #b9b5b0;border-radius:3px;"></div>
<svg style="left:575px;top:382px" width="15" height="15"><rect x="0.3" y="0.3" width="13.8" height="13.8" rx="2.5" fill="#3a3a3a"/><path d="M5.5 4.8 L7.6 3.8 V10.6" stroke="#fff" stroke-width="1.7" fill="none"/></svg><div class="a" style="left:852.5px;top:377px;width:27.5px;height:23.5px;background:linear-gradient(#fbfaf9,#f1efed);border:1px solid #b9b5b0;border-radius:3px;"></div>
<div class="a" style="left:886.5px;top:377px;width:27.5px;height:23.5px;background:linear-gradient(#fbfaf9,#f1efed);border:1px solid #b9b5b0;border-radius:3px;"></div>
<div class="a" style="left:920.5px;top:377px;width:27.5px;height:23.5px;background:linear-gradient(#fbfaf9,#f1efed);border:1px solid #b9b5b0;border-radius:3px;"></div>
<div class="a" style="left:954.5px;top:377px;width:27.5px;height:23.5px;background:linear-gradient(#fbfaf9,#f1efed);border:1px solid #b9b5b0;border-radius:3px;"></div>
<svg style="left:857px;top:382px" width="18" height="14">
<path d="M1.5 2.5 Q1.5 1 3 1 L7 1 L8.5 2.5 L15 2.5 Q16.2 2.5 16.2 3.7 L16.2 5 L1.5 5Z" fill="#e8eef5" stroke="#8aa6c4" stroke-width="0.6"/>
<rect x="1.5" y="5" width="14.7" height="7.8" fill="#5b8fc0"/><rect x="1.5" y="5" width="14.7" height="3" fill="#86b0d8"/>
</svg><svg style="left:893.5px;top:381px" width="15" height="17">
<rect x="1.5" y="1" width="12" height="14.5" fill="#fff" stroke="#8e8b88" stroke-width="0.9"/>
<rect x="1.5" y="1" width="12" height="2.5" fill="#9fb6cc"/><rect x="7" y="1" width="1" height="2.5" fill="#555"/>
<path d="M6 6.5 h3 v3 h2 L7.5 13 L4 9.5 h2Z" fill="#3b7ab8"/>
</svg><svg style="left:927.5px;top:381px" width="15" height="17">
<rect x="1.5" y="1" width="12" height="14.5" fill="#fff" stroke="#8e8b88" stroke-width="0.9"/>
<rect x="1.5" y="1" width="12" height="2.5" fill="#9fb6cc"/><rect x="7" y="1" width="1" height="2.5" fill="#555"/>
<path d="M6 6.5 h3 v3 h2 L7.5 13 L4 9.5 h2Z" fill="#3b7ab8"/>
</svg><svg style="left:960px;top:382px" width="17" height="15">
<rect x="0.5" y="0.5" width="15.5" height="13" fill="#f4f4f4" stroke="#888" stroke-width="0.8"/>
<rect x="2" y="2" width="12.5" height="10" fill="#1a1a1a"/>
<circle cx="8.2" cy="7" r="1.6" fill="#ccc"/><path d="M8.2 3.8 v1.2 M8.2 9 v1.2 M5 7 h1.2 M10.2 7 h1.2" stroke="#aaa" stroke-width="0.8"/>
</svg><div class="a" style="left:369px;top:407px;width:613px;height:509px;background:#fff;border:1px solid #b0aca7"></div>
<div class="a" style="left:0;top:0;width:1515px;height:1018px;clip-path:inset(408px 534px 117px 370px)"><svg style="left:370px;top:408px" width="611" height="493" viewBox="370 408 611 493"><g fill="none" stroke="#1a1a1a" stroke-width="0.95"><ellipse cx="629.4" cy="568.2" rx="18" ry="12"/><ellipse cx="429.5" cy="653.2" rx="19.1" ry="12.2"/><ellipse cx="562.5" cy="653.2" rx="29.2" ry="12.2"/><ellipse cx="695.8" cy="653.2" rx="29.2" ry="12.2"/><ellipse cx="810.5" cy="653.4" rx="37.4" ry="12.2"/><ellipse cx="944.5" cy="653.2" rx="21" ry="12.2"/><ellipse cx="420" cy="738.8" rx="58" ry="12.2"/><ellipse cx="562.6" cy="738.8" rx="34.7" ry="12.2"/><ellipse cx="697.8" cy="738.8" rx="39.6" ry="12.2"/><ellipse cx="944.5" cy="738.8" rx="31.8" ry="12.2"/><path d="M611.5 567.5 C 540 570 470 573 448 580 C 430 587 425 605 425.7 633"/><path d="M612 571 C 590 575 568 580 561 590 C 555 600 557 615 557.5 633"/><path d="M647 572 C 665 578 676 583 681 590 C 690 605 693 620 693.9 633"/><path d="M647.3 569 C 700 573 770 578 790 583 C 805 590 810 610 811.8 633"/><path d="M533.3 656.4 C 495 661 445 666 432 671 C 420 680 418 700 417.8 718.7"/><path d="M562.8 665.4 L562.8 718.7"/><path d="M592 657 C 640 663 670 667 681 670.5 C 692 680 697 700 699.2 718.7"/><path d="M944.4 665.4 L944.4 718.7"/></g><g fill="#000"><path d="M422.3 633 L429.09999999999997 633 L425.7 641Z"/><path d="M554.1 633 L560.9 633 L557.5 641Z"/><path d="M690.5 633 L697.3 633 L693.9 641Z"/><path d="M808.4 633 L815.1999999999999 633 L811.8 641Z"/><path d="M414.40000000000003 718.7 L421.2 718.7 L417.8 726.7Z"/><path d="M559.4 718.7 L566.1999999999999 718.7 L562.8 726.7Z"/><path d="M695.8000000000001 718.7 L702.6 718.7 L699.2 726.7Z"/><path d="M941.0 718.7 L947.8 718.7 L944.4 726.7Z"/></g><rect x="892.5" y="556.5" width="100" height="23" fill="none" stroke="#555" stroke-width="1"/></svg><div class="t" style="left:620.95px;top:565.00px;font-size:8.6px;color:#111;font-family:'Liberation Sans',sans-serif;font-weight:bold;transform:scaleX(0.9331);transform-origin:0 0;-webkit-text-stroke:0.3px #111;">map</div>
<div class="t" style="left:420.90px;top:650.00px;font-size:8.6px;color:#111;font-family:'Liberation Sans',sans-serif;font-weight:bold;transform:scaleX(0.8569);transform-origin:0 0;-webkit-text-stroke:0.3px #111;">body</div>
<div class="t" style="left:545.25px;top:650.00px;font-size:8.6px;color:#111;font-family:'Liberation Sans',sans-serif;font-weight:bold;transform:scaleX(0.8750);transform-origin:0 0;-webkit-text-stroke:0.3px #111;">base_link</div>
<div class="t" style="left:678.80px;top:650.00px;font-size:8.6px;color:#111;font-family:'Liberation Sans',sans-serif;font-weight:bold;transform:scaleX(0.9006);transform-origin:0 0;-webkit-text-stroke:0.3px #111;">map_ned</div>
<div class="t" style="left:787.85px;top:650.00px;font-size:8.6px;color:#111;font-family:'Liberation Sans',sans-serif;font-weight:bold;transform:scaleX(0.8943);transform-origin:0 0;-webkit-text-stroke:0.3px #111;">map_flipped</div>
<div class="t" style="left:934.10px;top:650.00px;font-size:8.6px;color:#111;font-family:'Liberation Sans',sans-serif;font-weight:bold;transform:scaleX(0.8887);transform-origin:0 0;-webkit-text-stroke:0.3px #111;">odom</div>
<div class="t" style="left:380.60px;top:735.00px;font-size:8.6px;color:#111;font-family:'Liberation Sans',sans-serif;font-weight:bold;transform:scaleX(0.8939);transform-origin:0 0;-webkit-text-stroke:0.3px #111;">main_camera_optical</div>
<div class="t" style="left:541.20px;top:735.00px;font-size:8.6px;color:#111;font-family:'Liberation Sans',sans-serif;font-weight:bold;transform:scaleX(0.9047);transform-origin:0 0;-webkit-text-stroke:0.3px #111;">rangefinder</div>
<div class="t" style="left:673.80px;top:735.00px;font-size:8.6px;color:#111;font-family:'Liberation Sans',sans-serif;font-weight:bold;transform:scaleX(0.8693);transform-origin:0 0;-webkit-text-stroke:0.3px #111;">base_link_frd</div>
<div class="t" style="left:925.45px;top:735.00px;font-size:8.6px;color:#111;font-family:'Liberation Sans',sans-serif;font-weight:bold;transform:scaleX(0.8764);transform-origin:0 0;-webkit-text-stroke:0.3px #111;">odom_ned</div>
<div class="t" style="left:435.00px;top:588.00px;font-size:8.5px;color:#111;font-family:'Liberation Sans',sans-serif;font-weight:bold;transform:scaleX(0.8996);transform-origin:0 0;-webkit-text-stroke:0.3px #111;">Broadcaster: /simple_offboard</div>
<div class="t" style="left:435.00px;top:597.00px;font-size:8.5px;color:#111;font-family:'Liberation Sans',sans-serif;font-weight:bold;transform:scaleX(0.9469);transform-origin:0 0;-webkit-text-stroke:0.3px #111;">Average rate: 30.901</div>
<div class="t" style="left:435.00px;top:607.00px;font-size:8.5px;color:#111;font-family:'Liberation Sans',sans-serif;font-weight:bold;transform:scaleX(0.9326);transform-origin:0 0;-webkit-text-stroke:0.3px #111;">Buffer length: 1.424</div>
<div class="t" style="left:435.00px;top:616.00px;font-size:8.5px;color:#111;font-family:'Liberation Sans',sans-serif;font-weight:bold;transform:scaleX(0.9350);transform-origin:0 0;-webkit-text-stroke:0.3px #111;">Most recent transform: 425.212</div>
<div class="t" style="left:435.00px;top:626.00px;font-size:8.5px;color:#111;font-family:'Liberation Sans',sans-serif;font-weight:bold;transform:scaleX(0.9338);transform-origin:0 0;-webkit-text-stroke:0.3px #111;">Oldest transform: 423.788</div>
<div class="t" style="left:564.00px;top:588.00px;font-size:8.5px;color:#111;font-family:'Liberation Sans',sans-serif;font-weight:bold;transform:scaleX(0.9153);transform-origin:0 0;-webkit-text-stroke:0.3px #111;">Broadcaster: /mavros</div>
<div class="t" style="left:564.00px;top:597.00px;font-size:8.5px;color:#111;font-family:'Liberation Sans',sans-serif;font-weight:bold;transform:scaleX(0.9469);transform-origin:0 0;-webkit-text-stroke:0.3px #111;">Average rate: 30.901</div>
<div class="t" style="left:564.00px;top:607.00px;font-size:8.5px;color:#111;font-family:'Liberation Sans',sans-serif;font-weight:bold;transform:scaleX(0.9326);transform-origin:0 0;-webkit-text-stroke:0.3px #111;">Buffer length: 1.424</div>
<div class="t" style="left:564.00px;top:616.00px;font-size:8.5px;color:#111;font-family:'Liberation Sans',sans-serif;font-weight:bold;transform:scaleX(0.9350);transform-origin:0 0;-webkit-text-stroke:0.3px #111;">Most recent transform: 425.212</div>
<div class="t" style="left:564.00px;top:626.00px;font-size:8.5px;color:#111;font-family:'Liberation Sans',sans-serif;font-weight:bold;transform:scaleX(0.9338);transform-origin:0 0;-webkit-text-stroke:0.3px #111;">Oldest transform: 423.788</div>
<div class="t" style="left:693.90px;top:588.00px;font-size:8.5px;color:#111;font-family:'Liberation Sans',sans-serif;font-weight:bold;transform:scaleX(0.9153);transform-origin:0 0;-webkit-text-stroke:0.3px #111;">Broadcaster: /mavros</div>
<div class="t" style="left:693.90px;top:597.00px;font-size:8.5px;color:#111;font-family:'Liberation Sans',sans-serif;font-weight:bold;transform:scaleX(0.9529);transform-origin:0 0;-webkit-text-stroke:0.3px #111;">Average rate: 10000.0</div>
<div class="t" style="left:693.90px;top:607.00px;font-size:8.5px;color:#111;font-family:'Liberation Sans',sans-serif;font-weight:bold;transform:scaleX(0.9156);transform-origin:0 0;-webkit-text-stroke:0.3px #111;">Buffer length: 0.0</div>
<div class="t" style="left:693.90px;top:616.00px;font-size:8.5px;color:#111;font-family:'Liberation Sans',sans-serif;font-weight:bold;transform:scaleX(0.9273);transform-origin:0 0;-webkit-text-stroke:0.3px #111;">Most recent transform: 0.0</div>
<div class="t" style="left:693.90px;top:626.00px;font-size:8.5px;color:#111;font-family:'Liberation Sans',sans-serif;font-weight:bold;transform:scaleX(0.9239);transform-origin:0 0;-webkit-text-stroke:0.3px #111;">Oldest transform: 0.0</div>
<div class="t" style="left:813.20px;top:588.00px;font-size:8.5px;color:#111;font-family:'Liberation Sans',sans-serif;font-weight:bold;transform:scaleX(0.9104);transform-origin:0 0;-webkit-text-stroke:0.3px #111;">Broadcaster: /map_flipped_frame</div>
<div class="t" style="left:813.20px;top:597.00px;font-size:8.5px;color:#111;font-family:'Liberation Sans',sans-serif;font-weight:bold;transform:scaleX(0.9529);transform-origin:0 0;-webkit-text-stroke:0.3px #111;">Average rate: 10000.0</div>
<div class="t" style="left:813.20px;top:607.00px;font-size:8.5px;color:#111;font-family:'Liberation Sans',sans-serif;font-weight:bold;transform:scaleX(0.9156);transform-origin:0 0;-webkit-text-stroke:0.3px #111;">Buffer length: 0.0</div>
<div class="t" style="left:813.20px;top:616.00px;font-size:8.5px;color:#111;font-family:'Liberation Sans',sans-serif;font-weight:bold;transform:scaleX(0.9273);transform-origin:0 0;-webkit-text-stroke:0.3px #111;">Most recent transform: 0.0</div>
<div class="t" style="left:813.20px;top:626.00px;font-size:8.5px;color:#111;font-family:'Liberation Sans',sans-serif;font-weight:bold;transform:scaleX(0.9239);transform-origin:0 0;-webkit-text-stroke:0.3px #111;">Oldest transform: 0.0</div>
<div class="t" style="left:432.50px;top:674.00px;font-size:8.5px;color:#111;font-family:'Liberation Sans',sans-serif;font-weight:bold;transform:scaleX(0.9148);transform-origin:0 0;-webkit-text-stroke:0.3px #111;">Broadcaster: /main_camera_frame</div>
<div class="t" style="left:432.50px;top:683.00px;font-size:8.5px;color:#111;font-family:'Liberation Sans',sans-serif;font-weight:bold;transform:scaleX(0.9529);transform-origin:0 0;-webkit-text-stroke:0.3px #111;">Average rate: 10000.0</div>
<div class="t" style="left:432.50px;top:692.00px;font-size:8.5px;color:#111;font-family:'Liberation Sans',sans-serif;font-weight:bold;transform:scaleX(0.9156);transform-origin:0 0;-webkit-text-stroke:0.3px #111;">Buffer length: 0.0</div>
<div class="t" style="left:432.50px;top:702.00px;font-size:8.5px;color:#111;font-family:'Liberation Sans',sans-serif;font-weight:bold;transform:scaleX(0.9273);transform-origin:0 0;-webkit-text-stroke:0.3px #111;">Most recent transform: 0.0</div>
<div class="t" style="left:432.50px;top:711.00px;font-size:8.5px;color:#111;font-family:'Liberation Sans',sans-serif;font-weight:bold;transform:scaleX(0.9239);transform-origin:0 0;-webkit-text-stroke:0.3px #111;">Oldest transform: 0.0</div>
<div class="t" style="left:562.50px;top:674.00px;font-size:8.5px;color:#111;font-family:'Liberation Sans',sans-serif;font-weight:bold;transform:scaleX(0.9333);transform-origin:0 0;-webkit-text-stroke:0.3px #111;">Broadcaster: /rangefinder_frame</div>
<div class="t" style="left:562.50px;top:683.00px;font-size:8.5px;color:#111;font-family:'Liberation Sans',sans-serif;font-weight:bold;transform:scaleX(0.9529);transform-origin:0 0;-webkit-text-stroke:0.3px #111;">Average rate: 10000.0</div>
<div class="t" style="left:562.50px;top:692.00px;font-size:8.5px;color:#111;font-family:'Liberation Sans',sans-serif;font-weight:bold;transform:scaleX(0.9156);transform-origin:0 0;-webkit-text-stroke:0.3px #111;">Buffer length: 0.0</div>
<div class="t" style="left:562.50px;top:702.00px;font-size:8.5px;color:#111;font-family:'Liberation Sans',sans-serif;font-weight:bold;transform:scaleX(0.9273);transform-origin:0 0;-webkit-text-stroke:0.3px #111;">Most recent transform: 0.0</div>
<div class="t" style="left:562.50px;top:711.00px;font-size:8.5px;color:#111;font-family:'Liberation Sans',sans-serif;font-weight:bold;transform:scaleX(0.9239);transform-origin:0 0;-webkit-text-stroke:0.3px #111;">Oldest transform: 0.0</div>
<div class="t" style="left:699.90px;top:674.00px;font-size:8.5px;color:#111;font-family:'Liberation Sans',sans-serif;font-weight:bold;transform:scaleX(0.9153);transform-origin:0 0;-webkit-text-stroke:0.3px #111;">Broadcaster: /mavros</div>
<div class="t" style="left:699.90px;top:683.00px;font-size:8.5px;color:#111;font-family:'Liberation Sans',sans-serif;font-weight:bold;transform:scaleX(0.9529);transform-origin:0 0;-webkit-text-stroke:0.3px #111;">Average rate: 10000.0</div>
<div class="t" style="left:699.90px;top:692.00px;font-size:8.5px;color:#111;font-family:'Liberation Sans',sans-serif;font-weight:bold;transform:scaleX(0.9156);transform-origin:0 0;-webkit-text-stroke:0.3px #111;">Buffer length: 0.0</div>
<div class="t" style="left:699.90px;top:702.00px;font-size:8.5px;color:#111;font-family:'Liberation Sans',sans-serif;font-weight:bold;transform:scaleX(0.9273);transform-origin:0 0;-webkit-text-stroke:0.3px #111;">Most recent transform: 0.0</div>
<div class="t" style="left:699.90px;top:711.00px;font-size:8.5px;color:#111;font-family:'Liberation Sans',sans-serif;font-weight:bold;transform:scaleX(0.9239);transform-origin:0 0;-webkit-text-stroke:0.3px #111;">Oldest transform: 0.0</div>
<div class="t" style="left:897.40px;top:565.00px;font-size:8.6px;color:#111;font-family:'Liberation Sans',sans-serif;font-weight:bold;transform:scaleX(0.9103);transform-origin:0 0;-webkit-text-stroke:0.3px #111;">Recorded at time: 425.212</div>
<div class="t" style="left:944.50px;top:674.00px;font-size:8.5px;color:#111;font-family:'Liberation Sans',sans-serif;font-weight:bold;transform:scaleX(0.9153);transform-origin:0 0;-webkit-text-stroke:0.3px #111;">Broadcaster: /mavros</div>
<div class="t" style="left:944.50px;top:683.00px;font-size:8.5px;color:#111;font-family:'Liberation Sans',sans-serif;font-weight:bold;transform:scaleX(0.9529);transform-origin:0 0;-webkit-text-stroke:0.3px #111;">Average rate: 10000.0</div>
<div class="t" style="left:944.50px;top:692.00px;font-size:8.5px;color:#111;font-family:'Liberation Sans',sans-serif;font-weight:bold;transform:scaleX(0.9156);transform-origin:0 0;-webkit-text-stroke:0.3px #111;">Buffer length: 0.0</div>
<div class="t" style="left:944.50px;top:702.00px;font-size:8.5px;color:#111;font-family:'Liberation Sans',sans-serif;font-weight:bold;transform:scaleX(0.9273);transform-origin:0 0;-webkit-text-stroke:0.3px #111;">Most recent transform: 0.0</div>
<div class="t" style="left:944.50px;top:711.00px;font-size:8.5px;color:#111;font-family:'Liberation Sans',sans-serif;font-weight:bold;transform:scaleX(0.9239);transform-origin:0 0;-webkit-text-stroke:0.3px #111;">Oldest transform: 0.0</div>
</div><div class="a" style="left:370px;top:901px;width:611px;height:14.5px;background:#fff;border-top:1px solid #b6b2ad"></div>
<div class="a" style="left:383.5px;top:902px;width:8.5px;height:13px;background:#e4e2df;border-left:1px solid #c2beb9"></div>
<div class="a" style="left:392px;top:902px;width:521px;height:13px;background:linear-gradient(#fbfaf9,#f0eeeb)"></div>
<div class="a" style="left:913px;top:902px;width:54.5px;height:13px;background:#e4e2df;border-left:1px solid #c2beb9;border-right:1px solid #c2beb9"></div>
<svg style="left:372px;top:903px" width="12" height="11"><path d="M8 1.5 L3.5 5.5 L8 9.5Z" fill="#444"/></svg><svg style="left:969px;top:903px" width="12" height="11"><path d="M3.5 1.5 L8 5.5 L3.5 9.5Z" fill="#444"/></svg><svg style="left:976px;top:932px" width="16" height="16"><rect x="11" y="3" width="1.2" height="1.2" fill="#c8c4bf"/><rect x="8" y="6" width="1.2" height="1.2" fill="#c8c4bf"/><rect x="11" y="6" width="1.2" height="1.2" fill="#c8c4bf"/><rect x="5" y="9" width="1.2" height="1.2" fill="#c8c4bf"/><rect x="8" y="9" width="1.2" height="1.2" fill="#c8c4bf"/><rect x="11" y="9" width="1.2" height="1.2" fill="#c8c4bf"/><rect x="2" y="12" width="1.2" height="1.2" fill="#c8c4bf"/><rect x="5" y="12" width="1.2" height="1.2" fill="#c8c4bf"/><rect x="8" y="12" width="1.2" height="1.2" fill="#c8c4bf"/><rect x="11" y="12" width="1.2" height="1.2" fill="#c8c4bf"/></svg><div class="a" style="left:1149px;top:78px;width:188px;height:23px;background:#1a1a1a;border-radius:4px;border:1px solid #333"></div>
<div class="t" style="left:1156.40px;top:84.00px;font-size:12.5px;color:#f0f0f0;font-family:'Liberation Sans',sans-serif;transform:scaleX(0.9904);transform-origin:0 0;">Terminal - clever@clever-dev: ~</div>
<div class="a" style="left:0px;top:979px;width:1515px;height:39px;background:#33383b"></div>
<div class="t" style="left:14.00px;top:993.00px;font-size:13.5px;color:#e6e6e6;font-family:'Liberation Sans',sans-serif;transform:scaleX(1.0143);transform-origin:0 0;">To grab input, press Ctrl+G</div>
<svg style="left:1400px;top:986px" width="110" height="24" viewBox="1400 986 110 24">
<rect x="1407.5" y="992.5" width="11" height="11" fill="none" stroke="#5a5e61" stroke-width="1"/>
<rect x="1409.5" y="995" width="7" height="3" fill="#5a5e61"/>
<path d="M1428 993 v11 M1431 994 h7 v8 h-7" stroke="#5a5e61" stroke-width="1" fill="none"/>
<rect x="1447" y="992" width="12" height="10" fill="#a6c8b8"/><rect x="1447" y="992" width="12" height="4" fill="#7cc0c0"/>
<circle cx="1457" cy="1001.5" r="4" fill="#c01020"/><path d="M1455.3 999.8 l3.4 3.4 M1458.7 999.8 l-3.4 3.4" stroke="#fff" stroke-width="1.2"/>
<rect x="1470" y="991.5" width="6" height="3" fill="#e0e0f0"/><rect x="1469" y="995" width="6" height="9" fill="#8aa8e0"/>
<circle cx="1477.5" cy="1001.5" r="4" fill="#c01020"/><path d="M1475.8 999.8 l3.4 3.4 M1479.2 999.8 l-3.4 3.4" stroke="#fff" stroke-width="1.2"/>
<path d="M1490 993 L1501 993 L1501 1004 L1490 1004Z" fill="#dfe3dc"/><circle cx="1491" cy="993" r="2" fill="#9a9a9a"/>
</svg></body></html>
